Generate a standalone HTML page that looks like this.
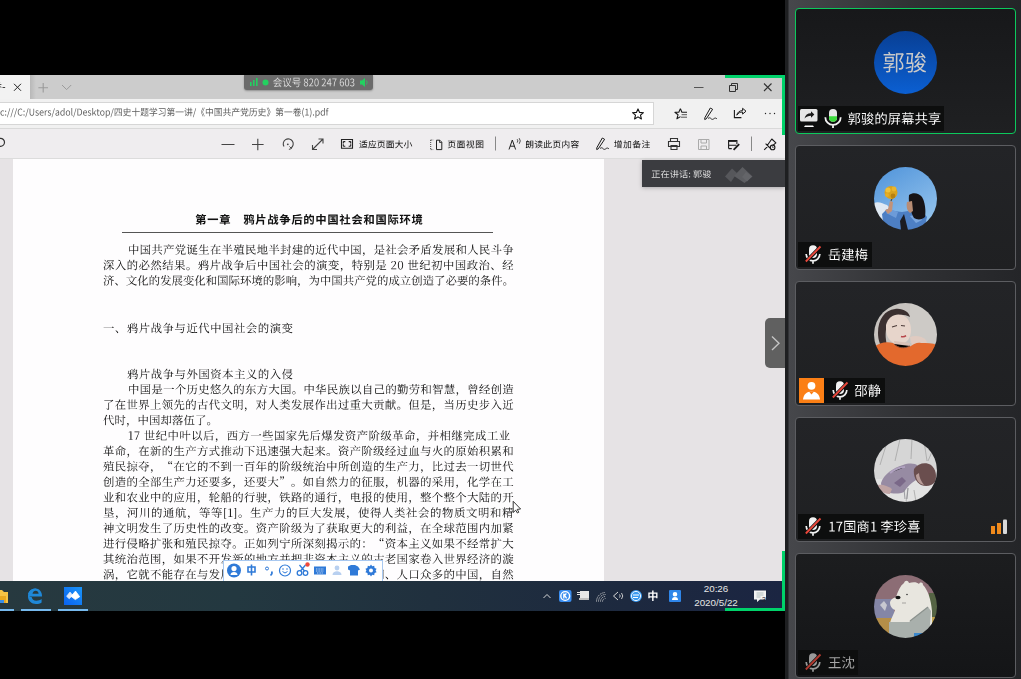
<!DOCTYPE html>
<html><head><meta charset="utf-8">
<style>
*{margin:0;padding:0;box-sizing:border-box}
html,body{width:1021px;height:679px;overflow:hidden;background:#000;font-family:"Liberation Sans",sans-serif}
.a{position:absolute}
#scr{left:0;top:75px;width:785px;height:536px;background:#e6e3e5;overflow:hidden}
#tabbar{left:0;top:0;width:785px;height:24px;background:#cccccc}
#tab{left:0;top:0;width:30px;height:24px;background:#f2f2f2}
#addr{left:0;top:24px;width:785px;height:30px;background:#f1f1f1;border-bottom:1px solid #d9d9d9}
#field{left:-2px;top:3px;width:656px;height:23px;background:#fff;border:1px solid #d6d6d6}
#tool{left:0;top:54px;width:785px;height:30px;background:#efedef;border-bottom:1px solid #dcdcdc}
#page{left:13px;top:84px;width:591px;height:422px;background:#fefdfe}
#task{left:0;top:506px;width:785px;height:30px;background:linear-gradient(to right,#27393f 0%,#233840 30%,#20303e 55%,#1d293f 80%,#1b2542 100%)}
.t{position:absolute;white-space:nowrap;color:#1e1e1e;font-size:9.5px;line-height:12px}
.pl{position:absolute;white-space:nowrap;color:#363636;font-family:"Liberation Serif",serif;font-size:11.4px;line-height:14px;text-align:justify;text-align-last:justify}
.g{position:absolute;background:#00d26a}
#side{left:785px;top:0;width:236px;height:679px;background:linear-gradient(to right,#1e1f21 0,#1e1f21 3px,#46474b 4px,#2f3033 55%,#242528 100%)}
.card{position:absolute;left:10px;width:221px;height:125px;border:1px solid #5c5d61;border-radius:4px;background:linear-gradient(#232427,#1f2022)}
.av{position:absolute;left:78px;top:21px;width:63px;height:63px;border-radius:50%;overflow:hidden}.av svg{filter:blur(.35px)}.c1{height:126px}.c1 .av{top:22px}.c1 .lab{top:97px}
.lab{position:absolute;left:2px;top:96px;height:25px;background:#0d0e0e;color:#fff;font-size:13.4px;line-height:25px;white-space:nowrap}
</style></head><body>
<svg width="0" height="0" style="position:absolute"><defs><path id="gb" d="m60-86l-1 5-2 4-3 4-2 4-3 3-3 4 5 2 5 3-24 0 10-4-2-3-2-5 13 0 0-8-23 0 3-6-11-3-2 5-3 4-2 4-3 4-3 4-3 3 4 2 4 3 0 10 31 0 0 5-27 0 0 5-1 4 0 5-1 4-1 4-1 4 22 0-4 3-5 3-5 3-5 2-5 2-5 2 3 3 2 3 2 3 6-2 5-2 6-3 5-4 5-4 4-3 0 19 12 0 0-25 24 0-1 6-2 3-3 1-4 0-6 0 1 3 2 4 0 4 5 0 4 0 4 0 4-1 3-3 2-2 1-2 1-3 0-4 1-5 0-7 1-4-37 0 0-6 32 0 0-25-10 0 10-4-2-4-3-4 14 0 0-8-26 0 2-6zm-33 54l16 0 0 6-17 0zm28-15l20 0 0 5-20 0zm-41-10l3-3 2-2 2-3 2-4 3 0 2 4 2 4 1 4zm43 0l3-3 3-4 2-5 4 0 3 4 3 4 2 4z"/><path id="gc" d="m4-46l0 14 92 0 0-14z"/><path id="gd" d="m27-28l46 0 0 5-46 0zm0-12l46 0 0 4-46 0zm-12-8l0 33 28 0 0 4-39 0 0 10 39 0 0 10 13 0 0-10 40 0 0-10-40 0 0-4 29 0 0-33zm48-21l-1 4-2 4-20 0-2-4-1-4zm-21-15l2 6-33 0 0 9 21 0-8 2 3 6-22 0 0 9 90 0 0-9-22 0 3-7-8-1 21 0 0-9-32 0-2-4-1-4z"/><path id="ge" d="m64-60l3 4 4 4 2 3 7-5-3-4-3-3-4-4zm-18 40l0 10 35 0 0-10zm-36-47l0 5-1 6-1 5 0 6-1 4-1 5 15 0-2 5-3 6-3 5-3 5-4 4-3 4 3 2 3 4 2 3 4-4 4-5 3-5 3-6 3-6 3-6 0 26-3 2-2 0-5 0-5-1 2 4 1 4 1 4 5 0 5-1 4 0 3-1 3-3 1-3 0-5 0-32 8 0 0-12-8 0 0-21 7 0 0-11-42 0 0 11 25 0 0 21-12 0 1-4 0-5 1-4 1-5zm76-9l-15 0 2-4 2-4-12-1-1 4-2 5-9 0 0 50 35 0-1 7 0 6-1 4 0 3-1 3-1 1-3 1-4 0-6-1 2 5 1 5 5 1 4-1 3 0 4-1 3-3 2-2 1-3 1-5 0-6 1-8 1-11 0-4-35 0 0-32 21 0-1 7 0 5 0 4-1 2-1 1-2 1-7 0 2 5 0 4 6 0 4 0 4-1 2-2 1-2 1-3 1-4 0-6 1-7 0-9 0-4z"/><path id="gf" d="m16-83l0 34 0 9-1 8-1 9-3 8-3 8-6 7 4 3 3 3 3 4 4-5 3-5 3-6 2-5 2-6 1-5 38 0 0 31 13 0 0-44-50 0 1-4 0-4 0-5 61 0 0-12-24 0 0-25-13 0 0 25-24 0 0-23z"/><path id="gg" d="m76-77l3 4 3 4 2 3 2 4 8-5-1-4-3-3-3-4-2-3zm-14-7l0 5 0 5 0 5 1 4 0 5 0 4-12 2 2 10 11-1 1 5 0 6 1 5 1 4 1 5 1 4-3 3-3 3-3 2-3 3-3 2-3 1 0-38-18 0 0-17 19 0 0-11-19 0 0-16-12 0 0 44-14 0 0 47 11 0 0-6 22 0 0 6 11 0 0-7 4 3 3 4 3-2 3-2 3-2 3-2 2-3 3 4 2 4 3 3 3 1 4 1 2 0 2-2 2-2 2-4 2-5 1-8-4-2-4-4-1 6 0 4-1 2-1 1-3-1-2-3-1-5 3-4 2-5 3-4 2-5 2-5 2-5-9-5-1 4-2 4-2 4-1 4-3 3 0-3-1-4 0-4-1-4 0-4 22-3-2-10-21 3 0-4 0-5-1-4 0-5 0-5 0-4zm-44 74l0-20 22 0 0 20z"/><path id="gh" d="m32-85l-3 5-3 4-5 5-5 5-5 4-7 4 4 3 3 3 2 3 5-4 0 4 25 0 0 7-40 0 0 11 40 0 0 8-28 0 0 11 28 0 0 8-2 2-3 0-6 0-6 0 2 3 2 4 1 4 5 0 4 0 4 0 3-1 3-1 3-2 2-4 1-5 0-8 28 0 0-19 13 0 0-11-13 0 0-17-17 0 3-3 2-3 3-3 2-3-9-6-2 0-25 0 4-5zm24 36l16 0 0 7-16 0zm0 18l16 0 0 8-16 0zm-30-28l4-4 3-3 25 0-3 3-3 4z"/><path id="gi" d="m14-76l0 27 0 8-1 8-1 9-2 9-3 8-5 8 3 2 4 3 3 3 5-8 4-9 2-10 2-9 1-10 0-9 71 0 0-11-71 0 0-9 11-1 12-1 11-1 11-2 10-2 9-2-9-10-9 2-10 2-12 1-12 2-12 1-12 1zm18 41l0 44 12 0 0-5 33 0 0 5 13 0 0-44zm12 28l0-17 33 0 0 17z"/><path id="gj" d="m54-41l2 4 3 4 2 5 3 4 2 3 2 4 10-7-2-3-2-3-3-4-3-4-2-4-3-4zm4-44l-1 6-2 6-2 6-3 5-2 5-3 5 0-17-15 0 1-3 1-4 1-3 2-4-13-2-1 4-1 4 0 4-1 4-12 0 0 75 11 0 0-7 27 0 0-47 4 3 4 2 2-2 1-3 2-4 2-3 2-3 21 0 0 16-1 12-1 10-1 8-1 5-1 2-5 2-2 0-4 0-4 0-5-1 2 4 2 4 0 4 5 0 4 0 4 0 3 0 4-1 3-2 3-3 2-3 1-6 1-9 1-12 1-16 0-20 0-6-28 0 2-4 1-4 1-4zm-40 27l16 0 0 16-16 0zm0 46l0-20 16 0 0 20z"/><path id="gk" d="m43-85l0 17-34 0 0 51 12 0 0-5 22 0 0 31 13 0 0-31 23 0 0 5 12 0 0-51-35 0 0-17zm-22 51l0-22 22 0 0 22zm58 0l-23 0 0-22 23 0z"/><path id="gl" d="m24-23l0 10 52 0 0-10-7 0 5-3-2-2-3-4-3-3 6 0 0-10-17 0 0-9 19 0 0-11-49 0 0 11 19 0 0 9-16 0 0 10 16 0 0 12zm34-8l4 4 3 4-10 0 0-12 9 0zm-50-50l0 90 12 0 0-5 59 0 0 5 13 0 0-90zm12 74l0-63 59 0 0 63z"/><path id="gm" d="m14-80l3 4 3 4 2 4-18 0 0 11 23 0-3 5-4 5-4 5-5 4-5 3-4 3 1 4 2 5 1 4 3-2 3-2 3-3 3-2 0 37 11 0 0-39 3 3 3 4 2 2 7-9-2-3-4-3-4-4-3-3 2-3 2-4 2-3 2-4 2-3 1-4-6-5-2 1-9 0 7-5-1-3-2-3-3-3-3-4zm49-4l0 29-20 0 0 12 20 0 0 37-24 0 0 12 58 0 0-12-22 0 0-37 19 0 0-12-19 0 0-29z"/><path id="gn" d="m16 7l3-1 4 0 7-1 10-1 16-1 21-2 3 4 2 4 11-7-3-4-3-4-4-4-4-5-4-4-4-4-11 5 3 3 3 3 3 3-35 2 3-3 3-2 2-3 3-3 2-3 3-3 42 0 0-11-83 0 0 11 24 0-3 4-3 3-3 3-2 3-2 1-4 3-4 2 1 4 2 5 1 3zm34-93l-6 7-7 6-7 6-9 5-9 5-9 4 3 3 3 4 2 4 4-2 4-2 4-2 4-2 0 6 47 0 0-7 3 2 4 2 4 2 4 1 3-3 3-4 3-3-8-3-7-3-7-4-7-4-6-4-6-4 3-4zm-16 31l3-2 4-3 3-3 3-2 3-3 3 2 3 2 2 2 3 3 4 2 3 2z"/><path id="go" d="m52-76l0 80 11 0 0-8 16 0 0 7 13 0 0-79zm11 61l0-49 16 0 0 49zm-21-69l-5 2-6 1-6 2-7 1-7 1-6 1 2 5 1 5 3-1 4 0 4-1 3 0 0 13-18 0 0 11 15 0-2 5-2 6-3 5-3 5-3 5-4 4 2 3 3 4 1 4 3-3 2-4 3-4 2-4 2-4 2-5 0 36 12 0 0-37 3 3 2 4 2 3 2 3 7-10-2-3-4-3-3-4-4-4-3-3 0-2 15 0 0-11-15 0 0-15 4-1 4-1 4-2 3-1z"/><path id="gp" d="m47-79l0 11 44 0 0-11zm30 47l2 6 2 6 2 5 2 6 1 5 0 4 11-4-1-4-1-5-2-6-2-5-2-6-2-5zm-31-2l-1 5-2 5-1 5-3 5-2 4-2 4 5 3 4 3 3-4 2-5 2-6 3-5 2-6 1-6zm-39-47l0 90 11 0 0-79 9 0-1 4-1 4-1 5-2 4-1 4 3 4 2 4 2 3 0 4 1 3-2 6-3 1-5 0 2 5 1 5 7 0 6-2 3-3 1-3 1-3 0-5 0-3 0-3-1-3-2-4-2-4-3-4 2-4 2-4 1-5 2-4 1-5 2-4-9-4-2 0zm35 26l0 11 20 0 0 39-2 1-4 1-6-1 2 4 1 5 1 4 5 0 4-1 3 0 3-1 3-3 1-4 1-5 0-39 22 0 0-11z"/><path id="gq" d="m2-13l3 11 5-1 5-2 5-1 5-2 6-2 5-2-2-10-9 2 0-19 8 0 0-11-8 0 0-18 10 0 0-11-32 0 0 11 11 0 0 18-9 0 0 11 9 0 0 23zm37-67l0 12 23 0-4 8-3 8-5 7-5 7-5 6-5 5 3 3 3 3 3 3 2-2 3-3 2-3 3-3 2-3 2-4 0 45 12 0 0-52 4 4 3 4 3 4 2 4 3 4 2 3 10-7-3-4-3-4-3-5-4-5-4-4-3-4-7 4 0-8 2-4 2-3 1-4 21 0 0-12z"/><path id="gr" d="m52-29l25 0 0 5-25 0zm0-11l25 0 0 4-25 0zm22-29l-2 4-1 4-11 0-2-4-2-4-9 2 2 6-12 0 0 10 57 0 0-10-13 0 4-6zm-16-15l1 5-19 0 0 10 51 0 0-10-19 0-2-3-1-4zm-17 37l0 30 8 0-1 4-2 4-2 3-4 2-5 2-7 2 4 4 3 5 8-2 6-4 5-4 3-4 2-6 1-6 7 0 0 12 1 5 1 3 1 2 4 2 4 1 6 0 7-1 4-4 1-4 0-6-5-2-4-2 0 4 0 3-1 2-2 0-3 0-2 0-1-2 0-13 11 0 0-30zm-39 32l4 12 5-2 5-2 5-2 5-2 6-2 5-2-2-11-10 3 0-27 9 0 0-11-9 0 0-23-11 0 0 23-10 0 0 11 10 0 0 31-4 2-4 1-4 1z"/><path id="gs" d="m82-33l-29 0 0-27 29 0zm-25-50l-11-1 0 21-28 0-7-3 0 45 1 0 5-2 0-7 29 0 0 38 2 0 5-3 0-35 29 0 0 8 1 0 6-2 0-35 4-2-8-6-4 4-28 0 0-17 4-3zm-40 50l0-27 29 0 0 27z"/><path id="gt" d="m59-36l-1 0 2 3 3 3 2 4 1 3 3 1 1-1 1-3-1-3-4-4-7-3zm-32-6l1 3 18 0 0 22-25 0 1 3 56 0 2-1-5-5-3-2-4 5-16 0 0-22 20 0 3-1-5-5-2-2-5 5-11 0 0-18 23 0 3-1-5-5-3-2-4 5-43 0 1 3 22 0 0 18zm-17-36l0 86 1 0 5-3 0-4 68 0 0 6 6-2 0-79 4-2-8-6-4 4-65 0-7-3zm74 76l-68 0 0-73 68 0z"/><path id="gu" d="m60-19l0 1 4 3 5 4 5 5 5 4 4 5 3 4 3 0 2-2-1-5-5-6-9-7-16-6zm-25-2l-4 5-4 5-4 5-6 4-5 5-6 3 1 2 7-3 6-4 6-4 5-4 5-4 4-4 4-1zm28-62l0 23-26 0 0-19 4-3-11-1 0 23-23 0 1 3 22 0 0 28-26 0 1 3 88 0 3-2-6-5-3-2-5 6-13 0 0-28 21 0 3-1-5-5-4-3-4 6-11 0 0-19 4-3zm-26 54l0-28 26 0 0 28z"/><path id="gv" d="m31-66l-1 1 1 3 2 3 2 4 1 4 1 3 3 2 2-1 1-4-1-4-4-6-7-5zm56-10l-5 6-77 0 1 3 87 0 3-2-6-4-3-3zm-45-9l-1 1 4 3 3 5 2 4 3 1 2-1 1-3-2-4-4-3-8-3zm34 22l-10-2-1 4-2 4-1 4-2 5-2 4-34 0-8-4 0 16 0 6-1 7-1 7-2 6-4 7-4 6 1 1 7-6 4-7 4-7 1-7 1-7 0-7 0-9 68 0 3-1-6-5-3-2-5 6-18 0 2-4 3-3 2-4 2-3 2-3 4-2z"/><path id="gw" d="m20-81l-1 1 3 3 2 3 3 3 1 3 1 4 4 1 2-2 1-3-2-5-5-4-9-4zm4 32l0 27 2 0 5-2 0-2 7 0-2 8-3 6-4 6-6 5-8 4-10 3 1 2 11-3 9-4 7-4 5-6 4-8 2-9 11 0 0 25 1 4 1 1 3 2 5 0 11 0 8 0 5-1 3 0 3-1 1-1 0-1-3-3 0-13-1 0-1 6-1 4-1 2-2 2-4 0-6 0-11 0-4-2 0-24 7 0 0 4 1 0 6-2 0-21 4-2-8-6-4 4-36 0-8-3zm7 20l0-17 38 0 0 17zm42-53l-2 4-2 4-2 4-2 4-2 4-10 0 0-18 4-3-10-1 0 22-29 0-1-5-2 1 0 4-2 4-2 3-3 3-2 5 3 2 4-1 2-2 2-3 1-4 0-4 65 0-1 3-1 4-1 3 1 1 4-3 3-4 3-3 4-1-8-8-4 5-17 0 3-3 3-3 3-3 2-3 3-2 4-2z"/><path id="gx" d="m10-83l-1 0 3 4 3 4 2 4 1 4 3 1 2-1 1-3-1-5-5-4-8-4zm84 8l-8-7-4 2-5 2-6 1-6 2-6 2-6 1 0 2 4 0 3-1 4 0 4 0 3-1 0 54-8 0 0-36 3-2-9-1 0 38-3 2 7 5 3-4 29 0 3-1-5-5-3-2-4 6-7 0 0-27 14 0 3-2-5-4-2-2-4 5-6 0 0-25 4-1 4 0 3-1 6 0zm-62 38l-2 1 1 4 1 4 1 4 2 4 1 3 2 3-2 4-3 3-2 4-3 3-3 3-4 3 1 2 4-3 3-2 4-3 3-3 2-3 2-4 5 5 5 4 5 3 7 1 7 1 8 1 5 0 5 0 5 0 1-4 3-2 0-1-5 0-4 0-5 0-4 0-8-1-7 0-6-2-5-2-5-3-4-4 2-4 1-5 2-4 1-5 1-5 1-5 3-2-6-6-4 4-7 0 2-4 2-4 2-5 1-4 2-4 1-4 5-1-8-6-3 3-15 0 1 3 14 0-1 4-2 4-1 5-2 4-2 4-1 4-5 1 7 6 3-3 7 0 0 4-1 5 0 4-1 4-1 4-2 4-2-3-1-4-2-4-1-4-1-4zm-10-16l4-2-7-5-3 3-12 0 0 3 12 0 0 44-4 4 4 8 3-3 4-3 3-4 2-3 3-2 1-3 0-1-10 7z"/><path id="gy" d="m26-80l-3 9-3 8-4 8-4 8-4 7-4 6 1 0 3-3 4-3 3-4 3-4 3-4 3-5 22 0 0 26-30 0 0 3 30 0 0 29-42 0 1 3 89 0 2-2-6-5-4-3-5 7-28 0 0-29 31 0 3-2-6-5-4-3-5 7-19 0 0-26 35 0 2-1-6-5-3-3-5 6-23 0 0-20 4-2-11-2 0 24-21 0 2-3 2-4 2-4 1-4 4-2z"/><path id="gz" d="m85-71l-5 6-38 0 2-3 2-4 1-4 1-3 4-2-10-3-1 4-2 4-1 4-1 3-2 4-29 0 1 3 27 0-4 8-4 7-5 6-5 7-6 5-6 6 1 1 3-2 3-2 3-2 3-3 2-2 3-3 0 44 1 0 5-2 0-46 4-1-4-2 3-3 2-3 2-3 2-3 2-3 2-4 50 0 3-1-6-5-3-3zm-5 31l-4 6-11 0 0-19 3-3-10-1 0 23-21 0 1 3 20 0 0 30-27 0 1 3 61 0 3-1-6-5-3-3-5 6-17 0 0-30 21 0 3-2-6-4-3-3z"/><path id="gba" d="m17-80l-1 1 2 3 3 4 2 4 2 4 2 4 1 4 3 1 2-1 1-5-2-5-6-7-9-7zm59-1l-2 5-2 5-3 5-2 4-2 4-2 4 1 0 3-2 3-4 3-3 3-4 3-4 3-4 4-1zm-30-3l0 34-36 0 1 3 35 0 0 20-42 0 1 3 41 0 0 32 2 0 5-3 0-29 41 0 2-2-6-5-4-3-5 7-28 0 0-20 35 0 2-2-6-5-3-2-5 6-23 0 0-30 4-3z"/><path id="gbb" d="m38-81l-4 5-29 0 1 3 12 0-1 8-2 8-2 7-3 7-3 7-3 6 1 2 3-3 2-3 2-3 2-3 3 3 2 4 2 4 3 1 2-1 1-3-1-4-4-3-7-3 2-4 1-4 2-4 13 0-2 11-3 12-4 11-5 10-7 9-8 8 1 1 10-8 9-9 6-10 4-11 3-12 3-11 3-2-7-6-4 4-11 0 1-4 1-4 1-4 1-4 19 0 3-1-5-5-4-2zm50 6l-4 5-16 0 1-10 4-3-10-1-1 14-20 0 0 3 20 0 0 10-8 0-8-3 0 60-13 0 0 4 62 0 3-2-5-4-3-2-4 4 0-53 5-2-9-7-3 5-12 0 1-10 25 0 3-1-5-5-3-2zm-36 75l0-12 28 0 0 12zm0-15l0-11 28 0 0 11zm0-14l0-11 28 0 0 11zm0-14l0-11 28 0 0 11z"/><path id="gbc" d="m84-41l-5 6-25 0-1-4 0-5-1-4 0-4 22 0 0 5 1 0 5-2 0-25 4-1-8-7-3 4-51 0-8-3 0 77-3 4 4 8 2-2 7-4 7-3 6-3 6-3 5-3 4-2-1-2-5 3-6 2-5 2-5 1-5 2-4 1 0-29 28 0 2 8 4 7 5 7 6 6 7 5 9 3 5 2 4 0 3-1-3-5 2-12-2 0-2 5-1 4-4 1-7-3-6-4-5-5-5-5-3-7-3-6 35 0 3-2-6-5-3-2zm-63-31l0-3 53 0 0 20-53 0zm0 20l24 0 1 4 0 5 1 4 1 4-27 0z"/><path id="gbd" d="m82-62l-14 5 0-23 4-3-10-1 0 29-13 5 0-22 3-3-10-1 0 29-14 5 2 2 12-4 0 39 1 4 1 3 3 1 3 1 6 0 15 0 9 0 7 0 5-1 3 0 1-2 1-1-4-3 0-16-1 0-1 5-1 5-1 3-1 2-3 2-3 0-5 0-6 0-15 0-6-1-1-3 0-41 13-5 0 42 1 0 5-2 0-42 16-6-1 11 0 8 0 7-1 4 0 3-1 2-3 1-7 0 0 1 5 2 1 5 4-1 4-2 2-3 1-3 1-6 0-7 1-9 0-12 4-1-8-6-3 3zm-79 51l4 9 2-3 6-4 6-4 5-3 5-3 4-3 4-2-1-2-15 7 0-31 13 0 2-2-5-5-3-2-4 5-3 0 0-24 4-3-10-1 0 28-13 0 1 4 12 0 0 34-6 2-4 2-4 1z"/><path id="gbe" d="m56-47l-1 0 1 3 2 4 2 4 1 4 0 3 1 4 3 2 2-2 1-4-1-5-4-7-7-6zm21-35l0 22-29 0 1 3 28 0 0 54-2 3-8-1-6 0 0 1 6 1 3 2 3 5 6-1 3-2 1-3 1-4 0-55 11 0 2-1-5-5-3-3-4 6-1 0 0-19 3-2zm-53-1l0 16-17 0 1 3 16 0 0 17-20 0 1 3 45 0 3-2-6-4-3-3-4 6-10 0 0-17 18 0 2-2-5-4-3-3-4 6-8 0 0-12 4-3zm0 41l0 15-18 0 1 3 17 0 0 18-5 0-5 1-4 1-3 0-3 0 4 10 2-3 10-2 8-3 7-2 7-2 6-2 5-2 0-1-23 4 0-17 18 0 3-2-5-5-3-2-5 6-8 0 0-11 4-3z"/><path id="gbf" d="m9-36l-2 1 2 5 1 4 2 4 2 4 2 3 2 3-2 4-2 3-2 3-3 3-3 3-3 2 1 2 4-3 3-2 3-2 3-3 2-3 3-3 5 5 7 3 7 3 9 1 10 1 10 0 4 0 5 0 5 0 4 0 3 0 2-3 3-2 0-1-4 0-4 0-5 0-4 0-4 0-4 0-10 0-9-1-9-1-7-2-6-3-6-4 2-4 2-5 2-5 1-5 1-6 1-5 4-1-7-7-4 4-9 0 2-4 2-4 2-4 2-5 2-4 2-3 5-2-8-6-3 4-19 0 1 2 18 0-2 4-2 4-2 5-2 4-2 4-3 4-3 2 6 5 3-3 11 0-1 5-1 5-1 5-1 4-1 5-2 4-2-3-2-3-2-3-2-3-2-4-1-5zm69-24l-15 0 0-10 15 0zm0 3l0 10-15 0 0-10zm12-9l-4 6-2 0 0-9 4-2-8-6-3 4-14 0 0-7 4-3-10-1 0 11-19 0 1 3 18 0 0 10-27 0 0 3 27 0 0 10-19 0 1 3 18 0 0 11-20 0 0 3 20 0 0 10-26 0 1 3 25 0 0 13 1 0 5-2 0-11 29 0 3-1-6-5-3-3-5 6-18 0 0-10 23 0 3-2-5-5-3-2-4 6-14 0 0-11 15 0 0 4 1 0 5-3 0-14 11 0 2-2-4-4-3-3z"/><path id="gbg" d="m54-46l-1 1 3 3 3 3 2 4 2 4 2 3 1 4 3 1 2-2 1-4-2-5-6-6-10-6zm-21-35l-10-3-1 5-1 4-1 5-1 4-3 0-7-3 0 74 1 0 5-3 0-8 21 0 0 8 1 0 5-3 0-61 5-2-8-6-4 4-13 0 3-4 2-5 3-4 3-2zm3 18l0 25-21 0 0-25zm-21 28l21 0 0 26-21 0zm56-46l-11-3-2 8-2 7-3 8-2 6-4 7-3 5 2 1 2-3 3-3 2-4 3-3 2-4 2-4 25 0-1 16 0 14-1 12-1 9-2 6-1 4-4 1-4 0-5-1-5 0 0 2 6 1 4 1 2 6 4-1 4-1 3-3 2-4 2-7 1-10 1-12 1-15 0-17 5-2-8-7-4 5-22 0 2-4 1-4 2-5 4-2z"/><path id="gbh" d="m10-82l-1 0 2 3 3 4 2 3 2 4 2 4 1 3 3 1 3-1 0-4-2-5-6-6-9-6zm77 24l-5 6-33 0 0-1 0-19 7 0 6-1 6-1 6-1 5-1 5-1 5 0-7-7-5 2-4 2-6 1-6 2-6 2-6 1-6-2 0 23 0 8-1 7-1 8-2 7-3 8-4 6 0 1-3-2-3-3-1-1 0-32 5-2-9-7-3 5-13 0 0 3 14 0 0 34-4 3-4 3-4 4-3 2 6 8 0-2 3-4 3-5 3-3 2-3 4 0 4 5 5 4 6 3 6 2 8 1 8 0 6 0 5 0 5 0 4 0 5 0 5 0 1-4 4-2 0-1-6 0-5 0-5 1-6 0-5 0-5 0-7-1-6 0-6-1-4-1-5-1-4-3 6-6 4-7 3-7 2-7 1-7 0-7 21 0 0 44 1 0 5-2 0-42 18 0 2-2-5-5-4-2z"/><path id="gbi" d="m69-80l-1 1 3 2 4 4 2 3 2 4 3 0 3-1 0-3-2-4-5-3-9-3zm-16-3l0 6 0 5 0 5 1 6 0 5 1 5-24 2 1 3 23-3 3 11 3 10 4 10 5 8 6 7 7 6 5 3 5 2 3-2 0-2-2-4 1-15-1-1-1 5-2 4-1 3-4 0-6-5-6-6-4-8-3-8-3-9-2-9 32-4 2-2-6-4-3-2-5 7-20 2-1-4 0-5-1-4 0-5 0-4 0-4 4-3zm-26-1l-3 10-3 9-4 9-5 9-4 8-5 6 2 1 2-2 3-3 2-3 3-3 2-3 2-3 0 57 1 0 6-2 0-60 3-2-5-1 2-4 2-3 2-4 1-3 2-4 1-3 4-2z"/><path id="gbj" d="m18 3l-4-2-4-3-1-4 2-4 5-2 4 1 2 4 1 5 0 3-1 4-2 5-3 3-3 4-5 3-1-3 4-3 2-3 2-3 2-3 0-2z"/><path id="gbk" d="m72-62l0 12-43 0 0-12zm0-2l-43 0 0-11 43 0zm-50-14l0 36 1 0 6-2 0-4 43 0 0 5 1 0 5-2 0-29 5-2-8-6-4 4-41 0-8-4zm5 47l-2 7-3 7-3 6-4 7-5 6-6 5 1 1 5-3 5-3 4-4 3-4 3-4 3-4 4 7 4 5 5 4 6 2 8 1 8 0 4 0 6 0 5 0 6 0 5 0 3 0 4-4 0-2-4 0-6 0-6 0-6 0-6 0-4 0-6 0-4 0 0-18 30 0 3-2-6-5-3-2-5 6-19 0 0-14 39 0 2-1-5-5-4-3-4 6-77 0 1 3 41 0 0 34-4-1-3-1-4-2-2-3-3-3-2-4 2-3 1-4 1-3 4-2z"/><path id="gbl" d="m16-84l-1 1 3 3 3 4 2 4 2 4 3 1 2-1 1-3-2-4-5-5-8-4zm69 28l-4 6-13 0 0-29 4-3-10-1 0 33-22 0 1 4 21 0 0 45-28 0 1 3 59 0 3-1-6-5-3-3-5 6-15 0 0-45 23 0 3-2-6-5-3-3zm-58 61l0-42 3 3 4 4 2 3 2 4 3 1 2-2 0-3-2-4-5-4-9-4 0-2 3-4 3-3 2-4 2-3 2-4 4-1-7-7-5 4-27 0 1 3 27 0-4 7-4 7-5 7-5 6-6 6-6 6 2 1 3-2 3-2 2-2 3-3 3-2 3-3 0 42 1 0 5-3z"/><path id="gbm" d="m52-78l4 6 6 7 6 6 7 6 8 5 8 4 2-3 4-2 0-1-9-4-8-4-8-5-7-5-6-6-5-6 4-2-12-2-4 7-5 8-8 8-8 7-9 7-8 5 0 1 10-4 9-6 9-6 7-7 7-7 6-7zm14 22l-5 6-37 0 1 3 47 0 3-1-6-5-3-3zm16 18l-5 6-69 0 1 3 79 0 3-2-6-5-3-2zm-21 18l-1 1 3 3 3 3 3 3 2 3 3 3-10 1-10 0-9 1-9 0-7 0-7 0 6-3 5-3 5-4 4-3 4-4 4-3 4-1-10-6-3 4-4 5-4 5-5 5-5 4-5 3-3 1 3 9 2-2 11-1 11-1 10-2 8-1 9-1 7-1 3 4 2 4 4 1 2-2-1-4-4-6-8-7-13-8z"/><path id="gbn" d="m4-48l1 3 39 0-5 7-6 8-6 7-7 7-8 6-8 5 1 2 9-5 8-5 8-6 7-7 6-6 6-8 0 38-3 2-5-1-7 0-4 0 0 1 5 1 4 1 2 1 3 5 5-1 3-2 2-2 1-2 0-3 0-43 28 0-2 3-2 4-3 3-3 4-3 3-3 3 2 1 4-3 4-3 4-4 4-3 4-4 3-3 4-1-8-8-4 5-25 0 1-3-1-4-4-4 4-2 5-3 5-2 4-3 4-2 3-2 5-1-8-8-5 5-56 0 0 3 54 0-3 2-3 3-4 3-4 3-3 2-3-1-2-1-3-2-4-1-4-1-4-1-1 1 5 3 5 3 4 4 4 3 2 3 2 3z"/><path id="gbo" d="m24-71l5 0 5 0 5-1 5 0 5-1 5-1-1 13-29 0zm8 26l0 53 2 0 5-2 0-5 38 0 0 6 1 0 5-2 0-47 4-1-7-6-3 4-20 0 2-13 34 0 2-2-5-4-4-3-4 6-22 0 1-9 3-3-9-1 5 0 4-1 4-1 4 0 4-1 4 0 5 0-7-7-7 2-8 2-9 2-10 2-10 2-10 1-6-2 0 28-1 9 0 10-2 9-2 8-4 9-5 8 1 1 8-8 5-9 3-9 2-9 1-10 0-9 0-11 29 0-1 13-12 0-8-3zm7 17l38 0 0 12-38 0zm0-3l0-11 38 0 0 11zm0 17l38 0 0 12-38 0z"/><path id="gbp" d="m62-81l-1 1 3 3 3 3 3 3 2 4 2 3 3 1 2-1 1-4-3-4-5-5-10-4zm24 18l-5 6-37 0 1-4 1-4 1-4 1-3 0-4 1-4 4-3-11-2-1 5 0 5-1 4-1 5-1 4-1 5-17 0 1-4 2-4 1-5 2-3 4-2-10-3-1 3-2 4-1 4-2 4-1 4-5 2 8 6 3-3 17 0-3 11-4 10-5 10-6 9-7 9-8 7 1 1 7-5 7-6 5-6 5-6 5-7 3-8 2 4 2 4 2 4 3 4 3 4 4 4-5 3-5 4-6 3-6 3-7 2-7 2 0 2 8-2 8-2 7-2 6-3 6-4 5-3 4 3 5 2 5 3 6 3 6 2 7 2 2-3 5-2 0-1-7-2-7-2-6-2-6-2-5-3-4-2 4-4 3-4 3-4 3-4 2-5 3-5 4-1-7-7-5 4-32 0 2-4 1-4 1-4 49 0 3-2-6-5-3-2zm-48 24l33 0-2 4-2 5-2 4-3 4-3 3-3 4-5-4-4-3-3-4-3-4-2-4-1-4z"/><path id="gbq" d="m22-62l0-13 59 0 0 13zm27 6l-9-1 0 11-16 0 1 3 15 0 0 14-19 0 0-5 1-4 0-4 0-5 0-4 0-4 0-4 59 0 0 4 1 0 6-2 0-17 4-2-8-6-4 4-56 0-8-4 0 28 0 10-1 10-1 11-3 10-3 10-5 10 2 1 4-6 4-6 3-6 2-6 1-7 2-6 0 3 14 0 0 23-4 4 5 7 2-2 4-2 4-2 4-3 3-2 3-1 3-2-1-1-3 1-4 1-4 2-3 1-3 1 0-25 12 0 4 8 4 7 6 7 7 5 8 4 9 3 2-4 3-2 1-1-6-1-5-2-4-1-5-2-4-2-4-3 4-2 3-1 4-2 3-2 3-2 4 0-8-6-2 3-3 2-3 3-4 3-3 3-3-3-2-3-3-3-2-3-1-3 37 0 3-2-6-5-3-2-5 6-12 0 0-14 17 0 2-1-5-5-3-2-4 5-7 0 0-7 4-3-10-1 0 11-18 0 0-8 3-2zm15 27l-18 0 0-14 18 0z"/><path id="gbr" d="m43-58l-4 6-8 0 0-21 5-1 4-1 4-1 5-1-7-6-5 2-6 2-7 3-7 2-7 2-7 2 1 2 4-1 4 0 4-1 4-1 4 0 0 19-20 0 1 3 17 0-2 7-3 7-3 7-3 6-3 6-4 6 1 1 4-4 4-4 3-4 3-5 3-5 2-5 0 44 1 0 6-2 0-47 3 3 2 3 3 4 2 3 2 3 3 1 2-2 0-3-3-4-5-5-9-5 0-6 18 0 3-2-6-4-3-3zm40-7l0 53-23 0 0-53zm-23 65l0-9 23 0 0 10 1 0 5-2 0-63 5-2-9-6-3 4-22 0-6-3 0 74 1 0 5-3z"/><path id="gbs" d="m51-78l3-3-10-1-1 16-1 15-3 15-7 15-11 14-17 13 2 2 15-10 11-11 8-11 6-12 3-12 1-12 2 14 4 13 5 12 7 11 9 10 12 8 3-4 4-2 0-1-15-9-11-10-8-13-6-14-3-15-2-18z"/><path id="gbt" d="m26-75l0 1 3 2 4 3 3 2 4 3 2 3 2 3 4 0 2-2-1-4-3-4-8-4-12-3zm-9 23l-1 1 4 2 4 2 4 3 3 3 3 3 2 3 4 0 2-2-1-4-4-5-8-3-12-3zm43-32l0 57-55 9 1 2 54-8 0 32 2 0 5-3 0-30 27-5 2-2-7-4-3-2-5 8-14 2 0-52 3-3z"/><path id="gbu" d="m34-84l-4 6-4 6-4 7-6 5-5 6-6 4 1 1 5-3 5-3 5-3 4-4 4-4 4-4 23 0-2 3-2 4-2 4-3 3-27 0 1 3 24 0 0 13-41 0 1 3 40 0 0 15-31 0 1 3 30 0 0 17-3 2-5 0-8-1-3 0 0 1 5 1 4 1 2 1 3 5 5-1 4-2 2-2 1-2 0-3 0-17 22 0 0 7 1 0 6-2 0-23 13 0 3-1-6-5-3-3-4 6-3 0 0-12 4-2-8-6-4 4-23 0 3-3 3-2 4-3 2-3 3-3 4-1-8-7-4 4-21 0 2-3 2-3 4-1zm40 47l0 15-22 0 0-15zm0-3l-22 0 0-13 22 0z"/><path id="gbv" d="m60-64l-8-5-3 5-3 4-3 5-3 4-4 4-2 4 1 1 3-3 4-3 4-3 3-4 4-4 3-4 4-1zm9-4l-1 1 3 3 3 3 3 4 3 4 2 4 2 3 3 1 2-2 0-4-3-5-6-6-11-6zm-59 48l-5 0 0 2 5 1 1 2 1 3 0 4 0 5 0 6 3 5 4-2 1-5 0-5 0-3-1-4-1-3 0-2 0-4 1-5 1-3 2-6 2-7 3-7 2-8 2-6-2-1-6 16-5 10-2 7-2 4-1 2-1 2-2 2zm-5-40l-1 1 3 2 3 3 3 3 1 4 4 0 2-1 0-3-2-4-5-3-8-2zm7-23l-1 1 4 3 3 3 3 4 2 3 3 1 2-1 0-3-2-4-5-4-9-3zm74 39l-4 6-17 0 0-13 4-3-10-1 0 17-29 0 1 3 23 0-3 7-4 6-5 7-5 6-6 5-6 5 1 2 7-4 6-5 6-5 5-5 5-6 4-6 0 36 1 0 5-2 0-39 4 7 3 7 5 6 4 5 5 5 5 3 3-3 3-2 1-1-6-3-6-4-5-5-6-5-4-6-4-6 25 0 3-2-6-4-3-3zm-46-38l-1 0-1 5-1 4-2 3-2 2-1 3 1 2 2 1 3-1 3-4 1-7 43 0-2 11 1 1 3-3 3-4 3-4 3-1-7-7-5 4-43 0-1-5z"/><path id="gbw" d="m47-70l0 3-3 15-6 15-7 13-8 11-9 11-10 9 1 1 11-7 9-9 9-10 7-10 5-11 5-12 4 13 5 11 6 11 7 9 7 8 9 7 3-4 5-2 1-1-12-7-11-10-8-11-7-13-6-15-3-15-2-3-2-3-4-3-4-2-5-3-4 6 6 2 5 2 4 2 2 2z"/><path id="gbx" d="m32-83l-1 2 6 3 5 3 4 4 4 3 2 3 2 3 4 1 2-3-1-4-4-5-9-6-14-4zm-16 33l-1 6-1 5-1 5-2 4-2 3-3 3-1 6 4 1 4-3 2-2 2-4 1-5 1-5 0-7-2-7zm60 0l-1 1 3 4 3 5 3 5 2 6 2 5 0 5 4 2 3-3 0-5-2-8-6-8-11-9zm-46-12l0 44-4 3-4 3-4 3-4 3-5 3-4 3 1 1 4-2 4-2 4-3 4-2 4-3 4-2 0 9 0 3 1 3 3 1 3 1 5 0 14 0 8 0 7 0 4-1 3-1 1-1 1-1-4-3 0-18-1 0-1 6-1 5-1 4-1 2-2 2-3 0-4 0-6 0-13 0-5-1-2-2 0-13 10-9 9-9 8-9 7-9 6-9 6-9 4 0-10-5-5 8-5 9-6 9-7 9-8 9-9 9 0-34 4-3z"/><path id="gby" d="m73-77l-1 1 3 3 3 4 2 5 3 0 2-1 1-2-2-4-4-3-7-3zm-53 61l-1 5-2 4-3 4-3 2-3 2-2 5 3 2 4-2 3-1 2-3 2-3 2-4 0-5 0-6zm16 1l-1 0 1 4 1 4 1 4 0 4 0 4 3 2 2-1 2-4 0-5-3-6-6-6zm20-1l-2 1 3 4 2 4 2 4 1 4 1 5 3 1 2-2 1-3-1-6-5-6-7-6zm18 0l-1 1 3 3 3 3 4 4 2 4 3 4 1 4 4 0 2-2 0-4-3-5-7-6-11-6zm-11-66l0 4 0 4 0 4-1 4 0 4 0 4-14 0 1-5 2-4 4-1-7-7-4 4-16 0 1-4 2-4 4-2-9-3-3 8-3 8-4 7-4 7-4 6-5 5 2 1 4-3 4-4 3 2 2 3 3 4 1 3 3 0 1-1 1-3-2-3-4-4-7-2 2-3 3-4 2-3 4 3 3 3 3 4 2 0 2-1 0-3-2-3-4-3-7-2 2-3 2-3 18 0-3 11-5 10-6 10-7 8-9 8-10 7 2 1 10-5 9-7 7-7 7-8 5-9 4-9 0 3 14 0-2 7-3 7-4 6-5 6-7 6-10 5 2 2 10-5 9-6 6-6 5-6 2-7 2-8 2 9 3 7 3 7 4 6 5 4 6 5 3-4 3-2 0-1-6-3-6-4-5-5-4-6-4-7-2-7 24 0 3-2-6-5-3-2-4 6-15 0 0-4 1-4 0-4 0-4 0-4 3-3z"/><path id="gbz" d="m4-7l4 9 3-2 6-3 6-3 5-3 5-2 4-2 4-2 0-2-8 2-7 2-7 2-6 2-5 1-4 1zm28-72l-10-4-2 4-2 5-3 5-3 5-3 5-3 3-3 1 4 9 1-1 5-1 4-2 4-1 3-1-3 4-3 4-3 4-3 4-3 3-3 3-3 1 4 9 2-2 6-2 6-2 5-2 5-1 4-2 4-1-1-2-5 1-5 1-5 1-5 1-4 0-4 1 5-5 5-4 5-5 5-5 4-5 3-5 4-1-9-5-3 4-3 5-4 0-5 0-4 1-4 0 4-4 3-4 4-4 3-4 3-4 2-3 4-2zm20 76l0-23 30 0 0 23zm-7-29l0 40 1 0 6-2 0-6 30 0 0 7 1 0 5-2 0-31 4-2-7-5-3 4-29 0zm44-38l-5 6-14 0 0-16 4-3-10-1 0 20-26 0 1 2 25 0 0 19-21 0 1 3 48 0 2-2-5-5-3-2-5 6-11 0 0-19 25 0 2-1-5-5-3-2z"/><path id="gca" d="m18-78l0 41 1 0 5-3 0-3 22 0 0 13-41 0 1 2 34 0-5 6-5 6-6 5-6 6-7 4-8 4 1 2 9-4 8-4 7-5 7-5 6-5 5-6 0 32 1 0 6-2 0-34 1 0 4 7 6 7 6 5 6 6 7 4 8 3 2-3 3-2 1-1-8-3-7-3-7-4-7-5-6-5-6-6 37 0 3-1-6-5-4-3-5 7-28 0 0-13 23 0 0 5 1 0 5-3 0-33 4-2-8-6-3 4-50 0-7-4zm28 3l0 13-22 0 0-13zm7 0l23 0 0 13-23 0zm-7 16l0 13-22 0 0-13zm7 0l23 0 0 13-23 0z"/><path id="gcb" d="m18 8l5-1 4-2 3-3 2-3 0-5 0-4-2-4-3-3-4-2-5-1-4 1-4 2-3 3-2 4-1 4 1 5 2 3 3 3 4 2 4 1zm0-3l-4-1-3-2-3-4 0-4 0-4 3-3 3-3 4 0 4 0 4 3 2 3 1 4-1 4-2 4-4 2-4 1z"/><path id="gcc" d="m61-66l-1 1 2 3 3 3 2 4 1 3 3 1 2-1 1-3-2-3-4-4-7-4zm13 43l-5 6-28 0 1 3 37 0 3-2-6-4-2-3zm-1-59l-10-2-2 11-3 0-8-4 0 44-2 2 7 5 2-4 29 0 0 8-1 7-1 5-1 5-1 3-1 1-4 1-5 0-6 0 0 1 5 1 3 2 1 4 6-1 4-2 2-3 2-3 1-5 1-6 1-8 1-9 4-2-8-6-3 4-30 0 0-37 26 0-1 6 0 6-1 5 0 3-1 3-1 1-3 1-4-1-5 0 0 2 6 2 2 4 4 0 4-2 2-2 1-3 1-5 1-5 0-7 1-8 4-1-8-6-3 4-17 0 3-4 3-3 3-2zm-32 32l-4 5-1 0 0-27 10 0 2-1-4-5-3-2-4 6-33 0 1 2 24 0 0 27-14 0 1-4 1-4 1-5 1-4 4-2-9-2-1 3-1 4 0 5-1 4-1 4-5 2 7 5 3-3 9 0-2 7-3 7-3 7-4 7-4 6-5 5 1 2 6-5 5-5 4-6 4-6 3-6 3-6 0 33-2 2-6-1-5 0 0 1 5 1 3 2 2 5 5-2 3-2 1-3 1-3 0-40 10 0 2-1-4-5-3-2z"/><path id="gcd" d="m55-84l0 27-27 0 0-20 4-2-10-1 0 35-1 10-1 9-2 9-3 9-5 7-6 7 1 2 7-6 5-6 4-6 3-7 2-8 1-7 35 0 0 40 1 0 5-2 0-37 5-2-9-7-3 5-33 0 0-5 0-5 0-9 65 0 3-2-6-5-3-2-5 6-20 0 0-23 3-3z"/><path id="gce" d="m70-80l-1 1 3 3 2 4 3 4 1 4 3 1 2-1 1-3-2-4-4-4-8-5zm-4-2l-10-2 0 6 0 5 0 5 0 5 1 5 0 5-16 2 1 3 16-2 1 6 1 6 1 5 2 6 1 5 3 5-4 4-3 4-4 5-5 3-4 4-5 3 1 2 5-3 5-3 5-3 4-4 4-4 3-3 3 3 2 3 3 4 3 2 3 3 5 3 4 2 4-2 0-2-3-4 2-16-1 0-1 5-2 4-1 3-4 0-3-2-2-3-3-2-2-4-2-3 3-4 2-4 3-4 2-4 1-4 2-4 4-2-10-3-1 4-2 4-1 3-2 4-2 4-2 4-2-4-1-4-1-5-1-4-1-5-1-5 28-3 2-2-6-4-3-2-4 6-17 2-1-4 0-4 0-5 0-4 0-4 0-5 3-2zm-32-1l-10-1 0 45-7 0-8-3 0 46 1 0 6-2 0-7 23 0 0 5 1 0 5-2 0-33 4-1-8-6-3 3-8 0 0-20 19 0 3-1-5-5-3-3-4 6-10 0 0-18 4-3zm-18 75l0-28 23 0 0 28z"/><path id="gcf" d="m78-84l-7 2-8 2-9 3-9 2-10 2-9 1-9-3 0 29 0 9-1 9-1 9-3 9-3 8-5 8 1 1 7-8 5-8 4-10 1-9 1-9 0-9 0-5 70 0 3-2-6-5-3-2-5 6-59 0 0-15 11-1 10-1 10-1 9-2 9-1 8-2 5 0zm-46 50l0 42 1 0 5-2 0-6 39 0 0 7 1 0 6-2 0-36 4-1-8-6-3 4-38 0-7-3zm6 31l0-28 39 0 0 28z"/><path id="gcg" d="m54-85l-1 1 3 2 3 3 2 4 1 3 3 1 2-2 1-2-2-4-4-3-8-3zm-43 65l-4 0 0 2 5 1 1 2 0 3 0 4 0 5 0 6 3 5 4-2 1-5 0-5 0-3-1-4-1-3 0-2 0-5 1-4 1-4 1-6 2-8 2-8 1-8 2-7-2 0-5 17-4 11-2 7-1 5-1 2-1 2-2 2zm-7-40l-1 1 3 2 3 3 2 3 2 4 3 0 2-1 1-3-2-4-5-3-8-2zm6-23l0 1 3 3 3 3 3 4 2 3 3 1 2-2 1-3-3-3-5-4-9-3zm59 74l-1 2 5 2 4 2 4 2 3 3 2 2 2 2 4 2 3-2 1-3-3-4-9-4-15-4zm-9 4l-9-5-3 3-3 3-4 3-5 2-5 3-5 2 1 2 6-2 5-1 5-2 5-2 4-3 4-2 4-1zm-22-70l-1 0-1 4-2 4-2 3-2 2-1 4 2 2 4 0 3-4 1-7 46 0-1 7 1 1 4-4 4-3 3-1-7-7-4 4-46 0-1-5zm20 33l0 11-15 0 0-11zm21-21l-4 5-38 0 1 3 20 0 0 10-14 0-8-3 0 40 1 0 6-2 0-4 37 0 0 4 1 0 5-2 0-29 4-2-7-6-4 4-14 0 0-10 20 0 3-1-6-5-3-2zm-14 21l15 0 0 11-15 0zm-7 14l0 11-15 0 0-11zm7 0l15 0 0 11-15 0z"/><path id="gch" d="m42-85l-1 1 2 3 3 3 3 4 1 3 4 1 2-2 0-3-1-3-5-4-8-3zm-9 28l-9-5-3 5-3 5-3 5-4 4-3 3-4 3 1 1 5-2 4-2 4-4 4-3 3-4 4-5 4-1zm36-3l-1 1 4 2 4 3 3 4 4 3 2 4 2 4 4 0 2-2-1-4-3-5-8-6-12-4zm-23 50l-7 3-6 4-7 3-7 2-8 2-8 2 1 2 9-1 8-2 8-3 7-2 8-3 6-4 6 4 6 2 7 3 7 2 7 2 7 2 3-4 3-2 0-1-7-1-7-2-7-1-7-2-6-2-6-3 4-3 3-3 4-3 3-3 3-3 3-4 5-1-7-7-6 4-52 0 0 3 13 0 2 4 2 4 3 3 3 3 3 3 4 3zm4-3l-4-2-3-3-4-2-3-3-2-3-3-4 37 0-3 3-2 3-3 3-3 3-4 2-3 3zm36-63l-5 6-76 0 1 3 30 0 0 31 1 0 5-1 0-30 16 0 0 31 1 0 5-2 0-29 28 0 3-2-6-5-3-2z"/><path id="gci" d="m44-27l-1 1 3 2 3 4 2 3 2 4 2 3 3 1 2-1 1-4-2-4-6-5-9-4zm17-57l0 15-21 0 1 3 20 0 0 15-26 0 1 3 58 0 3-2-5-5-4-2-4 6-17 0 0-15 23 0 2-2-5-5-3-2-5 6-12 0 0-11 4-2zm13 37l0 13-39 0 1 3 38 0 0 29-2 2-8-1-6 0 0 1 6 2 3 1 3 5 6-1 3-2 1-3 1-4 0-29 13 0 2-2-5-5-3-2-4 6-3 0 0-9 3-3zm-71 17l4 8 2-2 11-6 0 38 2 0 5-3 0-38 15-8 0-1-15 5 0-20 13 0 3-2-6-5-3-2-4 6-3 0 0-20 3-3-10-1 0 24-7 0 1-4 1-4 1-4 4-3-10-2 0 6-1 6-1 6-1 6-2 5-1 5 2 1 2-4 1-3 2-4 1-4 8 0 0 22-5 2-5 1-4 1-3 1z"/><path id="gcj" d="m94-81l-10-1 0 79-2 3-8-1-5 0 0 1 5 1 4 2 2 5 6-1 3-3 1-2 1-4 0-76 3-3zm-20 7l-10-1 0 63 1 0 5-2 0-57 4-3zm-30 21l-27 0 0-21 27 0zm-33-27l0 35 1 0 5-2 0-3 27 0 0 4 1 0 5-2 0-25 4-2-7-6-4 4-24 0zm23 33l-10-1 0 4 0 5-1 4-18 0 1 3 17 0-1 7-2 8-3 7-3 6-5 6-6 5 1 1 8-5 6-6 4-7 4-7 2-7 1-8 16 0 0 8-1 8-1 5-1 5-1 3-1 2-3 1-5 0-7-1 0 2 5 1 3 1 2 5 5-1 4-2 2-3 2-4 1-5 1-7 1-8 0-9 4-2-7-6-4 4-14 0 0-5 0-5 4-2z"/><path id="gck" d="m6 0l45 0 0-7-39 0 4-4 3-4 3-3 3-3 2-2 7-7 5-6 4-6 3-4 2-5 0-4 0-6-2-4-3-4-4-3-5-2-6 0-5 0-5 1-4 3-4 3-2 3-2 5 4 3 3-1 2-4 3-9 4-1 3 0 5 0 3 2 3 2 2 3 1 4 1 4-1 5-1 4-2 4-3 5-4 5-4 6-3 3-3 4-3 3-3 4-3 4-4 4z"/><path id="gcl" d="m28 2l6-1 5-3 5-5 4-8 2-9 1-13-1-12-2-9-4-8-5-4-5-3-6-1-6 1-6 3-4 4-4 8-2 9-1 12 1 13 2 9 4 8 4 5 6 3 6 1zm0-4l-4 0-3-3-3-4-3-7-1-9-1-12 1-11 1-9 3-7 3-4 3-2 4-1 3 1 4 2 3 4 2 7 2 9 1 11-1 12-2 9-2 7-3 4-4 3-3 0z"/><path id="gcm" d="m81-81l-10-1 0 27-20 0 0-25 4-2-10-1 0 28-19 0 0-23 4-2-10-2 0 27-16 0 1 3 15 0 0 50-3 2 7 5 3-4 65 0 2-1-5-5-4-3-5 6-54 0 0-50 19 0 0 38 1 0 5-2 0-7 20 0 0 7 1 0 5-3 0-33 17 0 3-1-6-5-3-3-5 6-6 0 0-23 4-3zm-30 55l0-26 20 0 0 26z"/><path id="gcn" d="m4-7l4 9 3-2 6-3 7-3 5-3 5-2 5-2 4-2-1-2-7 2-8 2-7 2-6 2-6 1-4 1zm29-71l-9-5-2 4-3 5-3 5-3 5-4 5-3 3-3 1 4 9 2-1 4-1 4-1 3-1 4-1 3-1-3 4-4 4-3 4-4 4-3 3-3 3-3 1 3 9 2-2 7-1 6-2 6-2 5-2 4-2 4-1 0-1-6 0-5 1-5 1-5 1-5 0-3 1 5-5 6-5 5-5 5-6 4-5 4-4 4-1-9-6-2 3-2 4-3 4-4 0-5 0-4 1-3 0-4 0 4-4 4-3 4-4 3-4 3-4 3-4 3-1zm13 29l0 46 0 4 2 2 4 1 6 1 14 0 9 0 7-1 4 0 3-1 1-1 1-1-3-3-1-15-1 0-1 5-1 4-1 3 0 2-3 2-3 0-4 0-6 0-15 0-5-1-1-2 0-39 30 0 0 9 1 0 6-3 0-35 4-2-8-6-4 4-39 0 1 3 39 0 0 27-29 0-7-3z"/><path id="gco" d="m16-84l-1 1 3 3 3 4 2 4 1 4 4 1 2-2 0-3-1-4-5-4-8-4zm45 15l-1 16-2 16-3 13-5 12-8 10-9 8 1 2 12-8 8-10 6-11 4-14 2-16 2-18 18 0 0 18-1 15-1 13-1 10-1 6-2 4-4 2-4-1-5 0-4 0-1 1 6 2 4 1 2 5 4 0 4-2 3-3 2-4 2-8 1-10 1-13 1-17 1-18 4-2-8-7-4 5-43 0 1 3zm-34 75l0-41 3 2 3 3 3 3 3 3 2 3 3 1 1-2 1-2-1-4-4-3-7-4 4-2 3-3 3-3 3 0-6-5-2 3-3 3-2 3-2 3-5-1 0-3 3-4 2-3 3-3 2-4 2-3 1-3 5-1-7-7-5 4-29 0 0 3 29 0-3 7-5 7-5 7-5 7-6 7-7 5 2 1 3-2 2-2 3-2 3-2 3-3 3-2 0 41 1 0 5-2z"/><path id="gcp" d="m59-84l-1 7-2 6-1 7-2 6-2 6-3 5-4-4-2-2-5 5-5 0 0-23 18 0 2-2-5-5-3-2-5 6-34 0 1 3 19 0 0 59-10 2 0-43 3-2-8-1 0 47-7 2 4 9 3-3 9-3 8-4 8-3 6-2 6-3 6-2-1-2-20 6 0-30 15 0-1 3-2 3 1 1 3-3 2-3 3-4 2-4 1 6 2 6 1 5 2 5 2 5 2 5-4 5-4 5-5 4-6 4-6 4-7 3 1 2 7-3 7-3 6-4 5-3 5-5 4-4 3 4 3 4 4 4 4 4 4 3 5 3 2-4 4-1 0-1-5-3-5-3-4-3-5-3-3-4-3-4 3-6 3-6 3-7 2-6 2-8 1-7 8 0 3-2-6-5-3-2-5 6-23 0 2-4 1-3 1-4 1-3 1-4 4-2zm9 60l-3-4-2-5-2-5-1-5-2-5-1-6 2-4 20 0-1 6-1 6-2 6-2 6-2 5-3 5z"/><path id="gcq" d="m11-20l-4 0 0 2 5 1 1 2 1 3 0 4 0 5-1 6 4 5 4-2 1-5 0-5 0-4-1-3-1-3 0-2 0-5 2-5 1-4 3-7 4-8 3-9 4-10 3-8-1 0-10 19-6 13-4 9-3 4-1 3-1 2-3 2zm-6-40l-1 0 4 3 3 3 3 3 2 4 3 0 2-1 0-4-2-3-5-3-9-2zm9-22l-1 1 3 2 4 4 3 4 2 3 3 1 2-2 1-3-3-4-5-4-9-2zm60 15l-1 1 2 3 3 3 3 3 2 3 2 3-8 1-9 0-8 1-7 0-7 0-5 0 5-4 4-5 5-5 4-5 4-5 3-5 4-1-10-5-3 6-3 6-4 6-4 6-5 6-4 4-3 1 4 9 2-2 9-1 9-1 8-1 8-2 6-1 6-1 2 4 1 4 4 1 2-2 0-5-3-6-6-7-12-7zm-27 64l0-26 34 0 0 26zm-7-33l0 44 2 0 5-2 0-6 34 0 0 6 1 0 6-1 0-34 4-2-8-5-3 4-33 0z"/><path id="gcr" d="m25 8l4-5-1-3-1-4-2-2-3-2-3-3-4-2-4-2-6-2-1 1 4 4 3 3 3 3 2 3 2 3 2 3 5 5z"/><path id="gcs" d="m4-7l4 9 2-2 7-3 5-2 6-3 5-2 4-2 4-2 0-1-8 2-7 1-7 2-6 1-5 1-4 1zm30-71l-10-5-2 4-3 5-3 5-3 5-4 5-3 3-3 1 4 9 2-1 4-1 5-1 4-1 4-2-3 5-4 4-3 4-3 3-4 3-3 3-3 1 4 9 2-2 6-1 6-2 5-2 5-1 4-2 3-1 0-1-5 0-5 1-5 1-5 0-4 1-4 0 6-5 6-5 5-5 5-5 5-6 3-4 4-1-9-6-2 3-2 4-3 4-19 1 4-3 4-4 4-4 3-4 3-4 3-4 4-1zm48 43l-4 5-35 0 1 3 18 0 0 26-27 0 0 3 59 0 3-2-6-4-3-3-4 6-15 0 0-26 19 0 3-1-6-5-3-2zm-16-17l5 2 4 3 5 3 4 3 4 3 3 3 4-1 1-2-1-3-5-5-9-4-13-4 3-3 3-3 3-3 3-3 2-3 2-3 4-1-7-7-5 5-35 0 1 3 34 0-5 7-6 6-7 7-7 6-8 6-8 5 1 1 5-2 6-3 5-3 5-3 5-3 4-4z"/><path id="gct" d="m55-85l-1 1 3 4 2 4 1 5 3 1 3-2 1-2-1-4-4-4-7-3zm0 51l-10-1 0 13 0 5-1 5-2 5-4 5-4 5-7 4 1 1 9-4 6-4 4-5 3-6 1-5 1-6 0-10 3-2zm26 0l-10-1 0 43 1 0 5-2 0-38 4-2zm-71 14l-4 0 0 2 5 1 1 2 0 3 1 4 0 5-1 6 3 5 4-2 2-5 0-5-1-3-1-4 0-3-1-2 1-4 1-5 1-4 2-5 2-7 2-8 3-8 2-6-2-1-6 16-5 11-3 7-2 4-1 2 0 2-3 2zm-5-40l-1 1 4 2 3 3 2 3 2 3 3 1 3-1 0-3-2-4-5-3-9-2zm8-22l-1 0 3 3 4 3 3 4 2 4 3 0 2-1 1-4-3-3-5-4-9-2zm74 6l-5 6-50 0 1 3 12 0 2 4 2 3 2 4 2 3 2 2 3 3-4 3-5 3-4 2-6 3-5 2-6 2 1 1 6-1 6-2 6-2 5-3 5-2 5-3 4 2 4 3 5 2 5 1 5 2 6 1 2-4 3-2 0-1-5-1-6-1-5-1-5-1-4-2-5-2 3-2 3-3 3-3 2-3 2-3 1-4 13 0 3-2-6-4-3-3zm-25 25l-4-3-3-3-3-3-2-3-2-4 24 0-1 3-2 4-2 3-3 3-2 3z"/><path id="gcu" d="m41-84l-1 1 3 3 3 3 3 4 2 4 2 4 3 0 2-1 0-4-2-5-6-4-9-5zm29 25l-2 7-2 7-3 6-4 6-4 6-5 5-5-5-4-5-4-6-4-7-3-7-2-7zm16-9l-5 6-76 0 1 3 19 0 3 8 2 8 4 7 3 7 5 6 4 5-5 5-6 5-7 4-7 4-8 3-9 3 1 2 9-3 9-3 7-3 8-4 6-4 6-5 6 5 5 4 7 4 6 3 8 3 7 3 3-4 5-2 0-1-8-2-8-3-7-2-7-4-6-4-6-4 5-6 5-6 4-7 4-7 3-7 2-8 15 0 3-2-6-5-4-2z"/><path id="gcv" d="m82-66l-3 4-4 5-4 5-5 5-5 5-5 4 0-40 3-3-10-1 0 50-3 2-4 3-3 2-4 3-3 2-4 2 1 2 3-2 4-2 3-2 4-1 3-2 3-2 0 23 1 4 1 2 2 2 3 1 5 0 13 0 8 0 6-1 4 0 3-1 1-1 0-2-3-3 0-15-2 0-1 7-1 5-1 3-3 1-2 0-4 0-5 0-12 0-5 0-1-3 0-27 6-4 6-5 5-4 5-5 5-5 4-4 4-1zm-52-18l-4 10-4 10-4 10-5 8-6 8-5 7 2 1 2-2 3-3 2-2 3-3 2-3 2-3 0 54 2 0 5-2 0-58 3-2-3-1 2-4 2-3 2-4 2-4 2-4 2-4 4-2z"/><path id="gcw" d="m56-35l-10-4-2 6-1 7-2 6-3 7-3 6-3 6 1 1 4-5 4-6 4-6 3-5 2-6 2-6 4-1zm20-3l-2 1 3 5 3 6 3 5 3 6 1 6 1 6 4 1 2-2 0-6-2-8-6-9-10-11zm6-42l-4 6-35 0 1 3 44 0 3-2-5-5-4-2zm6 23l-5 6-48 0 1 3 26 0 0 46-3 2-6-1-5 0 0 2 5 1 3 1 2 5 5-1 3-2 2-3 0-4 0-46 26 0 2-1-5-5-3-3zm-80-24l0 89 1 0 5-3 0-80 15 0-1 4-2 5-1 4-1 5-2 4-1 3 3 4 2 4 2 3 1 4 1 4 0 3-1 5-1 2-3 1-7 0 0 1 5 2 1 5 4-1 4-1 2-2 2-2 0-4 1-4-1-4-1-4-1-4-3-4-3-4-4-4 2-3 2-4 2-5 2-4 2-4 2-3 4-1-7-8-5 4-12 0z"/><path id="gcx" d="m72-47l-1 1 4 4 3 4 4 5 3 6 3 5 1 5 4 1 2-3 0-5-3-7-8-8-12-8zm15-34l-5 6-40 0 0 3 21 0-3 11-4 11-5 11-6 10-6 10-7 9 1 1 6-5 5-6 4-6 5-6 4-6 3-7 0 53 1 0 6-2 0-56 4-2-7-2 2-3 1-4 2-4 1-4 1-3 22 0 3-2-6-5-3-2zm-55 1l-4 6-24 0 1 3 13 0 0 24-12 0 1 3 11 0 0 26-4 2-4 2-3 1-3 1 5 8 2-3 6-4 5-3 5-3 5-3 4-3 4-2-1-2-14 7 0-24 12 0 3-1-5-5-2-2-5 5-3 0 0-24 13 0 2-1-5-5-3-3z"/><path id="gcy" d="m46-68l-1 0 3 4 2 4 2 4 3 1 2-1 1-3-1-3-4-3-7-3zm39-10l-4 5-15 0 1-1 1-3-2-3-3-2-6-3-1 1 3 3 1 4 1 4 1 0-26 0 1 3 54 0 2-1-5-5-3-2zm-39 60l0-3 6 0-1 5-1 5-3 4-5 5-7 4-10 4 1 2 12-4 8-5 6-4 4-5 2-5 1-6 8 0 0 20 1 3 2 2 4 1 8 0 7-1 4 0 2-1 1-2-3-3 0-10-1 0-2 6-1 4-1 1-6 0-6 0-3-1 0-19 7 0 0 4 1 0 5-2 0-22 4-2-7-6-4 4-33 0-7-3 0 32 1 0 6-2zm34-24l0 8-34 0 0-8zm-34 10l34 0 0 8-34 0zm42-28l-4 6-12 0 3-3 3-4 2-3 4-1-9-4-2 3-1 4-2 4-2 4-35 0 1 3 59 0 3-2-5-4-3-3zm-58-5l-4 6-4 0 0-21 4-2-10-1 0 24-12 0 1 3 11 0 0 36-5 2-4 2-3 1 6 8 1-3 6-3 5-4 5-3 4-3 3-2 4-3-1-1-15 7 0-34 13 0 2-2-4-4-3-3z"/><path id="gcz" d="m97-23l-9-6-6 8-6 6-6 6-7 6-7 5-7 4 1 2 8-4 8-4 8-5 7-5 6-6 6-7 4 0zm-3-28l-9-5-4 5-4 5-5 5-5 5-5 5-6 4 2 1 6-3 6-4 5-4 6-4 5-5 4-4 4-1zm-2-26l-9-5-4 5-4 5-4 4-5 5-5 4-5 4 2 1 5-3 6-3 5-4 5-4 5-4 4-4 4-1zm-66 64l-9-3-2 3-1 3-2 3-3 4-2 3-3 3 1 1 3-2 4-3 3-2 3-3 2-3 2-3 4-1zm13-3l-1 0 3 3 3 4 2 4 2 3 3 1 2-1 0-3-2-4-4-4-8-3zm15-35l-4 5-15 0 2-2 0-2-3-3-6-2-1 0 2 4 1 4 2 1-28 0 1 3 55 0 2-1-5-5-3-2zm-8-26l0 8-28 0 0-8zm-28 24l0-3 28 0 0 4 1 0 5-2 0-22 4-2-8-6-3 4-26 0-7-3 0 32 1 0 5-2zm0-6l0-7 28 0 0 7zm28 25l0 10-28 0 0-10zm-11 32l0-20 11 0 0 5 6-2 0-14 3-2-7-5-3 3-26 0-7-3 0 24 1 0 5-2 0-4 11 0 0 20-2 2-8 0 0 1 6 2 1 5 5-1 3-2 1-3 0-4z"/><path id="gda" d="m25-69l0 43-11 0 0-43zm-17-3l0 62 1 0 5-3 0-10 11 0 0 8 1 0 5-2 0-51 4-2-7-6-4 4-10 0-6-3zm46 22l0 37 1 0 4-2 0-7 12 0 0 6 1 0 4-2 0-28 4-2-7-5-3 3-10 0-6-3zm5 25l0-22 12 0 0 22zm2-59l-1 5-1 5-1 4-1 5-11 0-7-4 0 77 1 0 5-3 0-68 40 0 0 61-2 2-7-1-5 0 0 2 5 1 3 1 3 5 5-1 3-2 1-3 1-4 0-60 4-1-8-7-4 5-24 0 2-4 2-3 2-4 2-3 4-3z"/><path id="gdb" d="m55-42l-1 1 2 3 2 3 2 4 2 4 1 4 1 3 4 2 2-2 1-4-2-5-5-6-9-7zm-37-38l-1 1 3 3 3 3 2 4 2 4 2 4 3 1 2-2 1-3-2-5-5-5-10-5zm36 0l4-3-11-1 0 5 0 4 0 5 0 5-1 4 0 5-39 0 1 3 37 0-2 10-3 10-5 11-8 9-10 10-13 9 2 1 15-8 11-10 9-10 5-11 4-10 2-11 32 0-1 12-1 11-1 10-1 8-2 6-2 4-4 1-4 0-4 0-6-1-5 0 0 1 5 1 5 1 3 2 2 4 6 0 4-2 3-2 3-4 2-7 1-9 2-11 1-12 0-12 5-2-8-7-4 5-30 0 0-4 1-4 0-4 0-4 0-4 0-4z"/><path id="gdc" d="m67-82l-1 2 4 2 3 2 4 3 2 3 3 1 2-2-1-3-2-3-5-3-9-2zm-53 18l0 22 0 8 0 9-2 8-2 9-3 8-4 7 1 1 7-7 4-8 3-9 2-9 1-8 0-8 18 0 0 7-1 7 0 5-1 4-1 3-1 1-3 1-4 0-5-1 0 2 6 2 2 5 5-1 4-2 1-2 1-4 1-4 1-6 1-8 0-9 4-1-7-6-4 4-17 0 0-17 33 0 0 8 2 8 1 7 2 7 2 7 3 6-4 4-4 5-4 4-5 4-6 4-5 3 1 1 6-2 5-3 6-4 4-3 5-4 4-5 2 4 2 3 3 2 2 3 3 2 3 3 5 3 5 1 4-1 0-3-3-3 2-15-2-1-1 5-2 4-1 3-3 0-4-2-3-3-3-3-3-3-2-4 3-4 3-5 2-4 3-5 2-5 1-4 4-2-10-3-1 4-2 5-1 4-2 5-3 4-2 5-2-6-2-6-1-6-2-6 0-6-1-7 33 0 3-1-6-5-3-3-5 6-22 0-1-4 0-4 0-4 0-4 4-2-10-2 0 4 0 4 0 4 0 4 0 4-31 0-8-3z"/><path id="gdd" d="m39-84l-1 1 3 3 2 4 3 4 2 4 1 3 3 1 2-1 1-4-2-4-5-6-9-5zm-15 32l-2 1 2 6 3 7 2 7 2 8 2 7 0 7 4 2 2-3 1-7-2-9-5-12-9-14zm59-16l-5 6-70 0 1 3 81 0 2-1-6-6-3-2zm4 60l-5 6-25 0 4-7 4-8 3-8 4-8 3-8 2-7 4-2-11-3-2 8-2 9-3 9-3 9-3 8-3 8-50 0 1 3 89 0 2-1-6-5-3-3z"/><path id="gde" d="m94-83l-10-1 0 82-3 2-6-1-5 0 0 1 5 1 3 2 2 5 5-1 3-2 2-3 0-4 0-78 4-3zm-20 13l-10-1 0 56 1 0 5-3 0-50 4-2zm-35-10l-10-4-3 7-3 7-5 7-5 7-5 7-6 6 2 1 3-2 4-4 3-3 0 48 1 3 1 2 4 1 5 1 12 0 8 0 5-1 4 0 3-1 1-1 0-1-3-3 0-16-1 0-1 5-1 4-1 4-1 2-2 2-4 0-7 0-11 0-5-1 0-2 0-42 22 0 0 6 0 5-1 4 0 3 0 2-1 1-2 1-5 0-5-1 0 2 7 2 1 4 5 0 4-2 1-2 1-2 0-4 1-5 0-6 0-7 4-2-8-6-3 4-20 0-6-3 4-4 3-4 3-4 3-4 2-4 3-3 3 3 4 4 4 4 3 4 3 4 2 4 3 1 2-2 0-5-4-6-7-6-12-7 4-2z"/><path id="gdf" d="m10-81l-2 1 3 3 2 3 2 4 2 4 2 4 0 4 4 1 3-1 0-5-2-5-5-7-9-6zm9 71l-3 2-4 3-4 3-4 2 6 7 0-2 3-3 3-4 2-3 2-2 4 0 4 4 5 3 5 3 7 1 7 1 9 0 5 0 6 0 5 0 4 0 5 0 5 0 1-3 4-2 0-1-6 0-5 0-6 0-5 0-5 0-6 0-9 0-7 0-7-1-6-2-5-2-4-4 0-32 5-2-9-6-3 5-13 0 0 3 14 0zm34-69l-10-3-1 5-2 6-1 5-2 5-2 4-3 4 2 1 3-3 2-3 3-3 2-4 16 0 0 15-29 0 0 3 63 0 2-1-5-5-3-3-5 6-17 0 0-15 24 0 3-2-6-5-3-2-4 6-14 0 0-12 4-3-10-1 0 16-14 0 2-5 2-4 3-2zm-6 71l0-5 33 0 0 6 1 0 5-2 0-24 4-2-8-6-3 4-32 0-7-3 0 34 1 0 6-2zm33-26l0 18-33 0 0-18z"/><path id="gdg" d="m11-76l1 3 65 0-4 3-3 3-4 4-4 3-4 3-4 3-7-1 0 52-3 3-6-1-7 0-4 0 0 1 5 1 4 1 2 1 3 5 6-1 3-2 2-2 1-2 0-3 0-49 4-3-1 0 6-3 5-3 6-3 5-3 5-3 4-3 4-1-8-7-5 4z"/><path id="gdh" d="m87-36l-5 6-37 0 5-6 4-2-10-3-1 3-3 4-3 4-33 0 1 3 30 0-3 4-3 4-3 3-3 3 4 1 5 1 4 1 4 1 4 1 4 1-6 3-6 3-7 2-7 2-9 2-9 1 0 2 11-1 10-1 9-2 8-3 7-2 6-4 5 2 5 2 5 2 4 2 4 2 4 1 4 1 2-1 0-2-4-4-9-4-15-5 2-2 3-3 2-3 2-3 2-3 1-4 21 0 3-1-6-5-3-3zm-55 22l3-3 2-3 3-3 3-4 21 0-1 4-2 4-3 3-3 3-3 3-3-1-4-1-4 0-4-1-5-1zm46-47l0 16-14 0 0-16zm8-22l-5 6-76 0 1 3 30 0 0 10-14 0-7-3 0 30 1 0 5-2 0-3 57 0 0 4 2 0 5-2 0-20 4-2-8-6-3 4-14 0 0-10 28 0 3-2-6-5-3-2zm-65 38l0-16 15 0 0 16zm36-16l0 16-15 0 0-16zm0-3l-15 0 0-10 15 0z"/><path id="gdi" d="m40-16l-9-5-3 4-4 5-4 4-5 4-5 4-5 4 1 1 6-3 6-3 5-3 5-4 5-4 3-3 4-1zm24-3l-1 1 4 3 4 3 5 4 4 3 3 4 3 4 3 0 2-2-1-4-4-5-9-6-13-5zm-7-20l-10-1 0 12-37 0 1 3 36 0 0 23-3 2-7 0-7-1 0 2 7 1 3 1 2 5 6-1 4-2 1-3 1-4 0-23 33 0 3-2-6-5-3-2-5 6-22 0 0-9 3-2zm-9-42l-11-4-3 6-4 7-5 6-5 5-5 6-6 4 1 1 5-2 4-3 4-2 3-3 4-3 3-4 2 4 3 3 2 3 3 3 3 2-6 4-6 3-7 3-7 3-8 2-8 2 1 2 9-2 8-2 8-2 8-3 7-3 6-3 6 3 6 3 6 2 7 2 7 2 7 1 2-4 4-2 0-1-7-1-7-1-7-2-6-1-7-2-5-3 3-2 4-3 3-3 3-3 3-4 2-3 5-1-8-7-5 4-27 0 2-3 2-3 4-1zm3 26l-4-2-4-2-3-3-3-3-2-3 2-3 30 0-2 3-3 3-2 3-3 2-3 3-3 2z"/><path id="gdj" d="m59-83l0 22-15 0 2-4 1-4 2-4 3-2-10-3-1 7-2 7-2 7-3 7-3 6-3 5 2 1 2-3 3-3 2-3 2-3 2-4 2-4 16 0 0 25-30 0 1 3 29 0 0 38 2 0 5-3 0-35 28 0 3-2-6-5-3-2-5 6-17 0 0-25 25 0 3-1-6-5-3-3-4 6-15 0 0-18 4-3zm-33-1l-3 10-4 9-3 9-4 8-4 8-5 6 2 1 2-2 3-3 2-4 3-3 2-3 0 56 1 0 6-2 0-60 3-2-5-2 2-3 2-3 2-4 1-3 2-4 1-3 4-2z"/><path id="gdk" d="m84-51l-6 8-73 0 1 3 87 0 3-1-5-5-5-4-2-1z"/><path id="gdl" d="m60-31l-4 7-52 0 1 3 62 0 3-2-6-5-4-3zm24-41l-5 6-48 0 1-5 0-4 1-4 3-2-9-3-1 5-1 6-1 7-1 7-1 7-1 6-4 2 7 5 4-3 50 0 0 9-2 9-1 8-1 7-2 4-2 3-5 2-3-1-5 0-5-1-5 0 0 2 5 1 5 1 3 1 2 5 5-1 4-1 3-2 3-4 2-5 2-8 2-8 1-10 1-11 4-1-7-6-4 4-50 0 0-4 1-4 1-5 0-4 60 0 3-2-6-5-3-3z"/><path id="gdm" d="m36-81l-10-3-2 11-3 10-4 9-4 9-4 7-5 7 1 1 3-2 2-3 3-2 2-3 2-3 2-4 3 3 3 3 3 3 2 4 1 3 4 1 2-2 0-3-2-5-5-4-10-4 2-4 2-4 2-3 2-4 18 0-3 14-4 13-6 13-7 11-10 10-12 8 1 2 15-9 11-10 8-11 7-13 4-13 3-14 4-2-7-6-4 4-17 0 1-4 1-4 1-5 4-2zm38 0l-10-1 0 90 2 0 5-2 0-55 4 3 4 3 3 4 4 4 2 3 2 4 4 1 2-3 0-4-4-6-8-6-13-6 0-27 3-2z"/><path id="gdn" d="m51-10l0 2 7 2 6 2 6 3 5 2 5 3 3 2 4 2 3-2-1-3-5-4-12-5-21-4zm6-16l-10-3-1 7-2 7-4 6-8 6-11 4-15 5 1 2 17-4 12-5 8-5 5-5 3-7 1-6 4-2zm-49-56l0 1 3 2 3 3 3 4 2 3 3 1 2-2 0-3-2-3-5-4-9-2zm3 27l-5 0 0 3 5 0 1 3 1 4-1 6 3 3 4-1 1-4-1-6-1-4 3-5 1-2 3-4 3-4 3-4 4-4 2-3-1-1-8 8-6 6-3 4-3 2-1 1-1 1-3 1zm16 48l0-26 46 0 0 25 1 0 6-2 0-22 4-2-8-6-4 4-45 0-7-3 0 34 1 0 6-2zm40-60l-10-1-1 5-2 5-3 5-6 4-7 4-11 5 1 2 10-3 9-4 6-3 4-4 3-4 2-4 2 4 3 4 3 4 5 3 7 4 7 2 2-3 4-2 0-1-9-2-8-3-5-3-5-3-3-3-2-4 0-1 4-3zm-12-16l-10-2-2 6-2 5-3 5-3 6-3 4-4 4 2 1 3-2 3-3 2-2 3-3 3-3 2-4 36 0-2 4-1 4-2 4 1 1 3-3 3-3 3-3 3-3 4 0-8-8-4 4-34 0 2-3 2-4 3-2z"/><path id="gdo" d="m84-68l-5 6-26 0 0-18 4-3-11-1 0 22-39 0 1 3 33 0-4 10-5 9-6 9-7 9-7 8-9 6 2 2 9-6 8-7 7-7 7-8 6-9 4-9 0 35-21 0 1 3 20 0 0 22 2 0 5-3 0-19 20 0 3-2-6-5-3-3-5 7-9 0 0-42 4 11 6 9 5 9 7 8 7 7 7 5 3-4 4-1 0-1-8-5-8-6-7-6-7-8-6-9-5-9 36 0 2-1-6-6-3-2z"/><path id="gdp" d="m35-84l-1 1 4 3 4 2 3 3 3 4 3 3 2 3 4 0 2-2-1-4-3-4-8-5-12-4zm-31 85l1 3 88 0 3-2-6-5-4-3-5 7-28 0 0-30 31 0 3-1-6-5-3-3-5 6-20 0 0-26 36 0 3-1-7-5-3-3-5 7-66 0 1 2 34 0 0 26-31 0 1 3 30 0 0 30z"/><path id="gdq" d="m38-82l-1 1 3 3 3 4 2 4 2 4 2 4 1 4 3 1 3-2 0-4-2-6-6-7-10-6zm47 9l-11-3-2 10-3 9-4 9-4 9-5 8-6 8-7-7-6-7-5-8-4-9-4-9-3-11-1 2 2 11 3 10 4 9 5 8 5 8 6 7-5 5-6 5-7 5-7 3-8 4-8 3 0 2 10-3 8-3 8-4 7-4 6-4 6-5 6 5 6 4 6 4 7 4 7 3 7 3 4-4 4-2 1-1-8-2-8-3-7-3-7-4-7-4-6-4 7-8 5-8 5-8 4-9 3-10 3-9 4-2z"/><path id="gdr" d="m35-45l-2 6-3 3-2 6 6 0 2-3 1-5 48 0-2 8 2 0 4-3 4-4 3-1-7-7-4 4-48 0-1-4zm2 16l1 3 6 0 2 4 2 4 2 3 2 3 3 3 2 2-4 3-4 3-5 2-5 2-6 2-6 1 1 2 6-1 7-2 5-2 6-2 5-2 4-3 4 3 4 2 5 2 5 2 5 2 6 1 2-4 4-2 0-1-6-1-5-1-5-1-5-2-5-1-4-2 3-3 3-2 3-3 2-3 2-4 2-3 4-1-7-7-4 4zm24 19l-3-2-3-2-2-3-2-3-3-3-1-3 27 0-2 4-2 3-3 3-3 3-3 3zm-21-56l0 3 38 0 0 10-41 0 1 3 40 0 0 4 2 0 5-3 0-25 4-2-8-6-3 4-41 0 1 3 40 0 0 9zm-15-18l-2 10-4 9-3 9-4 8-5 7-4 7 2 1 2-3 3-2 2-3 2-4 3-3 0 56 1 0 5-2 0-60 3-2-4-1 2-4 2-3 1-4 2-3 2-4 1-3 4-2z"/><path id="gds" d="m51-78l4 8 6 8 6 7 7 7 8 6 8 5 3-3 3-3 0-1-9-4-8-5-8-6-7-6-6-7-5-7 4-2-12-3-4 8-6 9-6 9-8 8-9 7-9 7 1 1 10-5 9-7 9-7 7-8 7-8 5-8zm6 23l-11-1 0 64 2 0 5-2 0-58 4-3z"/><path id="gdt" d="m62-68l-11-1 0 12 0 8-25 0 1 3 24 0-1 10-2 9-4 10-6 8-8 8-10 7 1 2 12-7 10-8 7-9 4-9 3-10 1-11 23 0 0 12-1 9-1 9-1 6-1 5-2 2-4 1-3 0-5 0-5-1 0 2 5 1 4 2 2 4 4 0 4-1 3-3 2-3 2-5 1-7 1-9 1-11 1-12 4-1-8-7-4 4-22 0 0-8 0-8 4-3zm25-13l-5 6-58 0-8-4 0 31-1 9 0 10-2 9-2 9-3 9-5 8 1 1 7-8 5-9 3-10 2-10 1-9 0-9 0-24 71 0 2-2-5-5-3-2z"/><path id="gdu" d="m47-83l0 17-25 0-7-3 0 41 1 0 6-3 0-6 25 0-1 4 0 4-1 4-1 3-2 4-2 3-3-3-3-3-2-3-3-3-2-4-1 1 1 4 2 3 2 3 2 3 2 3 3 2-4 4-4 3-5 3-6 3-7 3-8 2 1 2 8-2 8-2 6-3 6-3 5-3 4-4 6 5 7 3 8 3 8 2 9 2 10 2 2-4 4-2 0-2-10 0-9-2-9-1-9-3-7-3-7-3 3-4 1-3 2-4 1-5 1-4 0-5 26 0 0 7 1 0 6-2 0-30 4-2-8-6-4 4-24 0 0-14 3-2zm32 20l0 23-25 0 0-2 0-21zm-57 23l0-23 25 0 0 21 0 2z"/><path id="gdv" d="m38-22l-9-1 0 21 0 3 2 2 3 1 6 0 15 0 8 0 7 0 4 0 3-1 1-1 0-2-3-3 0-10-1 0-2 6-1 4-3 1-3 0-4 0-6 0-14 0-6-1 0-17 3-2zm4-47l-10-1 0 37 2 0 4-2 0-32 4-2zm-23 49l-1 0-1 5-2 4-2 3-3 3-2 2-2 5 3 1 3-2 3-1 2-3 1-3 1-4 1-4-1-6zm58-1l-2 1 3 3 3 3 2 3 3 4 1 4 1 3 4 1 2-2 0-3-2-6-6-5-9-6zm-31-5l-2 1 3 3 3 3 2 4 2 4 1 3 2 1 3-1 0-4-2-4-4-5-8-5zm41-50l-4 6-25 0 2-5 1-4 4-2-10-3-1 6-2 6-2 6-2 5-3 5-3 4 2 2 2-3 3-3 2-3 3-3 1 3 1 4 2 3 2 3 2 3 2 3-4 3-4 3-5 3-5 3-6 2-6 2 1 2 6-2 6-2 6-2 5-2 5-3 4-3 3 3 3 3 4 2 4 3 5 2 5 2 2-4 3-2 0-1-5-1-5-2-4-2-4-2-4-2-3-3 3-3 3-4 3-4 2-4 2-4 1-5 8 0 3-2-6-5-3-2zm-32 11l1-2 22 0-1 4-2 4-2 3-1 3-3 4-2 3-3-3-2-3-2-3-2-3-1-3-2-4zm-29 1l-3-1 2-3 2-3 2-4 2-3 4-2-10-4-3 8-3 7-4 7-4 7-4 5-4 5 1 2 4-3 3-3 3-3 3-4 0 33 1 0 5-2 0-37 3-2z"/><path id="gdw" d="m44-81l-11-3-3 11-3 10-5 10-5 9-6 8-5 6 1 1 5-4 5-5 5-6 5-6 4-6 3-8 25 0-4 15-6 14-8 13-10 11-13 9-15 8 1 2 15-6 12-7 10-9 8-10 7-10 5-12 1 10 3 10 4 10 5 9 8 8 9 7 2-4 5-2 0-1-11-7-9-7-6-9-5-9-3-9-2-10 2-4 1-4 1-5 4-1-7-7-5 4-22 0 1-4 2-4 1-4 4-2z"/><path id="gdx" d="m66-28l-1 1 5 4 4 4 5 5 4 5 3 5 2 4 4 1 2-2-1-5-4-7-9-7-14-8zm-28 4l-9-5-4 6-4 6-4 6-5 5-4 5-4 3 1 2 5-3 5-4 5-4 5-5 5-5 4-5 4-2zm11-56l-10-4-1 3-1 3-2 4-2 4-1 4-27 0 1 3 24 0-2 4-2 4-2 4-2 4-2 4-2 3-5 2 7 6 4-3 25 0 0 33-2 2-7 0-6-1 0 2 6 1 3 1 2 5 6-1 3-2 1-3 1-4 0-33 31 0 2-1-6-5-3-3-5 6-19 0 0-14 3-3-10-1 0 18-25 0 2-3 2-4 2-5 3-4 2-5 2-4 56 0 2-2-6-5-3-3-6 7-41 0 2-5 2-4 1-4 5-1z"/><path id="gdy" d="m41-85l-1 1 3 3 3 3 2 4 2 4 2 3 3 1 2-1 1-4-2-5-6-4-9-5zm45 15l-5 6-77 0 1 3 30 0 0 14-3 13-3 12-5 10-8 10-10 9 1 1 10-6 8-7 6-8 5-8 3-10 2-10 32 0-1 10-1 9-1 7-1 6-1 5-2 2-4 1-4 0-6 0-6-1 0 2 7 1 4 2 2 5 5-1 3-1 3-2 3-3 2-5 1-7 1-9 1-9 1-11 4-2-7-6-4 4-30 0 0-4 1-4 0-4 0-5 50 0 3-1-6-5-4-3z"/><path id="gdz" d="m45-84l0 5 0 5 0 5 0 5 0 5 0 5-40 0 1 3 38 0-2 11-3 10-5 10-7 9-10 9-13 8 1 2 15-8 12-9 8-10 6-10 3-11 2-11 2 10 3 11 5 10 7 10 10 10 12 8 3-4 4-2 0-1-13-7-11-8-8-9-5-9-4-10-3-9 40 0 3-2-7-5-3-3-6 7-28 0 0-4 0-5 0-4 1-4 0-4 0-5 3-2z"/><path id="gea" d="m65-82l-9-2 0 27-4 2-4 2-3 1-4 2-4 2-3 1 0 1 4 0 4-2 3-1 4-1 3-1 4-2 0 12 0 3 1 2 3 1 5 1 11 0 7 0 5-1 4 0 2-1 1-1 1-1-3-3-1-13-1 0-1 5-1 5-1 3-2 1-3 0-6 0-10 0-5-2 0-14 5-2 5-3 5-2 4-3 4-2 3-3 4 0-8-7-3 3-3 3-4 3-4 2-4 3-4 3 0-19 3-2zm23 55l-4 5-31 0 0-11 4-2-11-1 0 14-42 0 1 4 41 0 0 26 2 0 5-2 0-24 41 0 2-2-5-5-3-2zm-46-53l-10-4-3 6-4 6-4 6-5 7-6 6-5 5 1 2 3-2 3-3 3-2 3-2 3-3 2-2 0 29 1 0 6-2 0-31 3-2-3-1 3-4 3-4 2-4 4-1z"/><path id="geb" d="m17-84l-1 1 2 3 3 4 2 4 1 4 3 1 2-1 1-3-1-4-5-5-7-4zm21 14l-4 6-30 0 1 3 11 0 0 11 0 12-2 12-2 11-4 11-5 10 1 2 6-8 5-7 3-9 2-9 2-9 0-9 12 0-1 11 0 10-1 8-1 6-1 4-1 2-4 1-4 0-6-1 0 2 7 2 2 5 5-1 4-3 2-3 1-4 2-7 1-8 0-11 1-12 4-2-7-6-4 4-10 0 0-4 0-4 0-3 0-4 21 0 3-2-6-5-3-2zm50-3l-5 6-27 0 2-4 2-4 2-4 3-1-9-4-2 7-3 6-2 6-3 5-3 5-3 4 1 1 3-2 3-3 2-3 3-3 2-3 40 0 2-2-5-5-3-2zm1 38l-5 6-13 0 1-4 0-4 0-4 0-4 19 0 2-1-5-5-3-3-5 6-22 0 3-4 1-4 4-2-10-3-1 5-2 6-2 5-2 4-3 4-2 4 1 1 3-3 3-3 3-3 3-4 9 0 0 4-1 4 0 4 0 4-22 0 1 3 20 0-1 7-2 6-4 5-5 5-6 5-8 4 1 2 10-4 8-5 5-5 4-6 3-7 2-7 1 7 2 6 3 6 3 6 5 5 7 4 2-4 3-1 1-2-8-3-5-4-5-4-3-5-3-5-1-6 21 0 3-1-5-5-3-3z"/><path id="gec" d="m37-78l-1 0 3 4 3 5 3 5 2 6 2 5 2 5 3 1 3-2 0-5-3-7-6-9-11-8zm-9 1l-11-1 0 65-3 4 4 9 3-3 7-5 6-5 7-5 5-4 5-4 4-3-1-2-5 4-6 3-5 3-5 3-5 3-4 2 0-58 0-3 4-3zm59-2l-11-1-1 20-2 18-4 15-9 12-13 11-20 10 1 2 11-4 10-4 8-5 7-5 5-6 4-6 4 4 3 5 4 5 2 5 3 5 1 4 4 2 2-3 0-5-3-7-7-9-11-8 3-7 2-8 1-8 1-9 1-10 0-10 4-3z"/><path id="ged" d="m74-64l0 18-47 0 0-18zm-28-20l-1 4-1 5-1 4-1 4-15 0-7-3 0 78 1 0 6-3 0-4 47 0 0 7 1 0 6-3 0-68 4-2-8-6-4 4-28 0 3-3 2-3 2-4 2-3 3-2zm-19 41l47 0 0 19-47 0zm0 22l47 0 0 19-47 0z"/><path id="gee" d="m14-46l0 39 1 4 1 3 2 2 4 1 4 1 5 0 43 0 7 0 6 0 4-1 2-1 1-2 1-1-5-3 0-19-1 0-1 5-1 5-1 5-1 3-2 2-4 1-6 0-42 0-6 0-3-2-1-2 0-37 52 0 0 9 1 0 6-2 0-36 4-2-8-6-4 4-59 0 1 3 59 0 0 27-51 0-8-3z"/><path id="gef" d="m39-61l-18 0 0-8 18 0zm7 40l-4 5-9 0 0-9 19 0 2-1-4-4-3-2 5-2 0-14 4-1-7-5-3 3-13 0 0-7 6 0 0 3 2 0 5-2 0-12 13 0 3-2-5-4-3-3-4 6-4 0 0-8 3-3-10-1 0 12-18 0 0-8 4-3-10-1 0 12-12 0 1 3 11 0 0 15 1 0 5-2 0-2 6 0 0 7-11 0-8-3 0 23 1 0 5-2 0-2 13 0 0 7-22 0 1 3 21 0 0 9-20 0 1 2 19 0 0 9-5 1-4 0-5 0-3 1-3 0-3 0 4 8 2-2 9-1 9-2 7-2 7-1 6-2 6-1 0-2-21 2 0-8 17 0 3-1-5-4-2-2zm30-61l-10-2 0 5 0 4 0 4 0 4 0 4 0 4-13 0 1 3 12 0-1 12-1 12-2 11-4 10-5 9-7 8 1 2 9-9 7-9 4-10 3-11 1-12 1-13 13 0 0 15 0 13-1 10-1 8-1 5-2 3-3 2-5-1-6 0 0 1 4 2 4 1 1 5 4-1 3-1 3-2 2-4 2-6 1-8 1-11 0-14 1-16 4-2-8-6-4 4-12 0 0-21 4-2zm-49 34l0 10-13 0 0-10zm6 0l13 0 0 10-13 0zm0 13l13 0 0 3 1 0-4 4-10 0z"/><path id="geg" d="m32-73l-28 0 1 3 27 0 0 10 1 0 6-2 0-8 22 0 0 10 1 0 6-2 0-8 25 0 3-1-6-5-3-3-5 6-14 0 0-7 3-3-10-1 0 11-22 0 0-7 3-3-10-1zm23 26l-11-2 0 4-1 4 0 4-1 4-31 0 1 3 30 0-3 7-3 7-5 7-6 6-7 5-10 5 1 1 11-4 10-6 7-6 5-7 4-7 3-8 26 0-1 7-1 6-1 6-1 5-1 3-2 2-4 1-4 0-6-1-6 0 0 2 7 1 4 1 2 5 4-1 4-1 3-2 3-2 2-4 1-6 2-6 1-7 1-9 4-1-8-6-4 4-25 0 1-4 0-4 1-4 4-2zm-37-12l-2 0-1 4-1 4-3 3-2 2-3 5 3 2 4-1 3-2 2-4 1-6 64 0-2 4-1 4-2 3 1 1 3-3 4-2 3-3 2-2 4-2-8-7-4 4-65 0 0-4z"/><path id="geh" d="m18-84l-1 5-1 4-2 4-1 4-2 3-2 3 1 1 4-3 3-3 3-4 7 0 0 4 0 4 0 3-22 0 1 3 20 0-1 5-2 4-3 4-4 4-5 4-6 3 1 2 7-3 5-3 4-3 4-3 3-3 2-4 3 2 4 3 3 2 2 3 3 3 2 0 2-2 0-3-3-3-6-4-10-3 2-5 19 0 2-1-5-5-3-2-4 5-9 0 1-3 0-4 0-4 16 0 2-2-5-5-3-2-4 6-18 0 2-6 4-2zm54 70l0 13-43 0 0-13zm0-3l-43 0 0-11 43 0zm-15-57l0 38 1 0 5-2 0-6 21 0 0 6 1 0 5-2 0-30 5-2-9-6-3 4-19 0-7-3zm27 27l-21 0 0-24 21 0zm-61 16l0 39 1 0 5-2 0-4 43 0 0 5 1 0 5-2 0-32 4-2-8-6-3 4-41 0-7-4z"/><path id="gei" d="m38-16l-10-1 0 16 1 3 1 2 4 1 5 0 15 0 9 0 6 0 4-1 3-1 1-1 0-1-3-3 0-10-1 0-2 6-1 4-3 1-2 0-5 0-6 0-14 0-5-1 0-12 3-2zm-20 1l-2 0-1 4-2 4-3 4-3 2-2 5 6 0 3-2 2-3 1-4 1-5 0-5zm60 0l-1 1 3 3 3 3 2 3 2 4 1 3 3 1 2-2 1-3-2-4-5-5-9-4zm-33-3l-1 1 3 3 3 3 2 3 1 4 3 0 2-1 0-3-2-3-4-4-7-3zm-4-62l-4 5-5 0 0-5 3-3-10-1 0 9-18 0 1 3 17 0 0 6-16 0 1 4 15 0 0 6-19 0 1 3 18 0 0 7 1 0 6-2 0-5 16 0 2-1-5-5-3-2-4 5-6 0 0-6 13 0 2-2-4-4-3-2-3 4-5 0 0-6 14 0 3-2-5-4-3-2zm44 0l-4 5-9 0 0-5 3-3-10-1 0 9-15 0 1 3 14 0 0 6-13 0 1 4 12 0 0 6-15 0 1 3 14 0 0 6 1 0 6-2 0-4 20 0 2-1-5-5-2-2-4 5-11 0 0-6 16 0 3-2-5-4-2-2-4 4-8 0 0-6 18 0 3-2-5-4-3-2zm-9 56l-63 0 1 3 62 0 0 5 1 0 5-3 0-21 4-2-8-6-3 4-61 0 1 3 61 0 0 7-59 0 1 3 58 0z"/><path id="gej" d="m77-59l-9-5-2 3-2 4-2 4-2 4-2 3 1 1 3-2 3-3 3-3 3-3 2-2 4-1zm-51-5l-1 1 2 3 3 3 2 4 2 3 1 4 3 1 2-2 0-3-1-4-5-5-8-5zm27-5l-14 0 2-2 0-2-1-3-2-3-5-3-7-2-1 1 3 3 3 3 3 4 1 3 1 1-15 0-7-3 0 40 1 0 5-2 0-5 60 0 0 5 1 0 6-2 0-30 3-1-7-6-3 4-19 0 4-3 4-4 3-2 4-2-10-4-2 3-2 4-2 4-2 4zm-33 3l27 0 0 24-27 0zm60 0l0 24-27 0 0-24zm-10 39l0 11-40 0 0-11zm-40 33l0-4 40 0 0 5 1 0 6-2 0-31 4-2-8-6-4 4-38 0-7-4 0 42 1 0 5-2zm0-19l40 0 0 12-40 0z"/><path id="gek" d="m47-59l0 13-22 0 0-13zm0-3l-22 0 0-13 22 0zm6 3l23 0 0 13-23 0zm0-3l0-13 23 0 0 13zm7 30l0 40 2 0 5-2 0-35 2-1 3 3 4 2 3 2 4 1 4 2 4 1 2-3 3-2 0-1-7-2-7-2-6-3-7-3-5-4-5-4 17 0 0 5 1 0 5-2 0-34 5-2-9-6-3 4-50 0-7-3 0 44 1 0 6-3 0-3 12 0-4 5-4 5-6 4-5 4-7 3-7 3 1 2 5-2 6-2 4-2 5-2 4-3 4-2 0 9 0 5-1 5-3 5-5 5-7 4-9 3 1 2 11-3 9-5 5-4 4-6 1-5 1-6 0-7 3-3-8-1 3-2 3-3 2-3 3-3 11 0 2 4 2 2 3 3 3 3z"/><path id="gel" d="m4 0l1 3 88 0 3-2-6-5-4-3-5 7-31 0 0-44 35 0 3-1-6-5-3-3-6 7-23 0 0-33 4-3-10-1 0 83z"/><path id="gem" d="m20-59l-1 1 2 3 2 3 2 4 1 4 2 1 2-1 2-3-1-3-4-5-7-4zm54 9l-9-2 0 15-1 12-3 10-5 8-8 7-12 6 1 2 14-6 9-6 6-8 3-10 1-12 1-14 3-2zm-4 35l-1 1 4 3 4 3 4 4 4 4 3 3 2 4 3 1 2-3 0-4-4-5-8-6-13-5zm-42-65l4-2-10-3-2 7-3 8-3 7-3 8-4 7-4 6 1 1 5-5 4-6 4-6 4-7 3-6 3-7 3 4 2 3 2 4 3 4 1 3 1 4 3 1 2-2 0-4-2-5-5-7-9-7zm-16 57l-2 1 4 4 4 4 3 4 3 4 3 5 1 4 3 1 2-1 1-3-1-3-2-5-5-6 2-3 3-3 3-3 2-4 2-3 2-3 4-1-7-7-4 4-27 0 1 3 26 0-2 4-1 3-2 4-2 4-2 4-3-2-2-2-4-2-3-2zm76-59l-4 6-43 0 1 3 21 0-1 5 0 5-1 5-8 0-7-4 0 48 2 0 5-2 0-40 30 0 0 41 1 0 5-2 0-38 4-1-8-6-3 4-18 0 2-4 2-3 1-4 1-4 25 0 2-2-5-5-4-2z"/><path id="gen" d="m26-81l-2 7-2 7-3 6-2 6-3 5-4 5 2 1 2-3 3-2 2-3 3-3 2-3 2-3 20 0 0 20-42 0 1 3 29 0-1 10-2 9-4 8-6 6-7 6-10 6 0 1 12-4 9-6 7-7 5-8 3-10 2-11 15 0 0 37 0 3 2 2 3 1 5 1 10 0 7 0 5-1 4 0 2-1 1-1 0-2-2-3-1-16-1 0-1 5-1 5-1 3 0 3-2 1-4 0-5 1-10 0-4-3 0-35 29 0 3-2-7-5-3-2-5 6-28 0 0-20 31 0 3-2-6-5-3-2-5 6-20 0 0-15 4-3-11-1 0 19-19 0 2-4 2-4 1-4 4-2z"/><path id="geo" d="m19-35l0 43 1 0 6-3 0-6 48 0 0 9 1 0 6-3 0-35 5-3-9-6-4 4-20 0 0-23 40 0 3-2-7-5-3-3-5 7-28 0 0-19 4-3-11-1 0 23-41 0 1 3 40 0 0 23-20 0-7-3zm55 3l0 28-48 0 0-28z"/><path id="gep" d="m84-74l0 20-26 0 0-20zm-32-3l0 32-1 10-1 9-2 9-4 9-6 8-8 7 2 1 7-5 6-5 4-6 4-7 2-6 2-7 27 0 0 25-3 3-8-1-7 0 0 1 6 1 4 2 3 5 5-1 3-2 2-2 1-2 0-3 0-71 4-2-8-7-3 5-24 0-7-4zm32 25l0 21-27 0 1-4 0-3 0-4 0-4 0-6zm-70-21l19 0 0 23-19 0zm-6-3l0 67 1 0 5-3 0-9 19 0 0 8 1 0 5-3 0-56 5-2-8-6-4 4-16 0-8-3zm6 28l19 0 0 24-19 0z"/><path id="geq" d="m49-46l-1 2 3 3 2 3 2 4 2 4 1 3 1 3 3 1 2-1 1-5-2-5-5-6-9-6zm39-19l-5 6-3 0 0-21 4-2-10-1 0 24-30 0 1 3 29 0 0 53-3 2-8 0-7 0 0 1 7 1 3 2 3 5 5-1 3-2 2-2 1-2 0-3 0-54 13 0 3-2-5-5-3-2zm-77 7l-1 1 3 3 3 4 3 4 3 3 3 4 2 4-3 7-4 7-3 7-5 6-4 6-5 5 1 1 6-4 5-6 4-5 5-6 3-5 4-6 2 4 2 4 1 4 1 3 1 3 3 4 2 1 2-3 0-4-2-8-2-3-2-4-2-4-3-4 2-5 2-6 2-5 2-6 1-5 1-6 4-1-7-7-4 4-32 0 1 4 31 0-1 4-1 5-1 5-1 4-2 5-2 5-2-3-3-3-3-3-3-3-3-3-4-3z"/><path id="ger" d="m20-80l-1 1 3 2 3 3 3 4 2 3 2 3 3 1 2-2 0-3-3-4-5-4-9-4zm65 13l-4 6-19 0 3-3 4-3 3-3 4-3 2-3 4-1-8-5-3 4-2 3-3 4-2 3-3 4-3 3-5 0 0-19 3-3-10-1 0 23-40 0 1 3 33 0-5 4-5 5-6 5-6 4-6 3-7 4 1 1 8-2 7-4 8-4 6-4 6-5 5-5 0 20 2 0 5-2 0-16 5 3 6 3 6 3 5 4 5 3 3 3 4 0 1-2-2-4-6-5-11-6-16-4 0-2 38 0 3-2-6-5-3-2zm2 37l-5 6-31 0 1-6 3-3-10-1 0 5-1 5-40 0 1 3 38 0-2 6-3 5-5 4-8 4-9 4-12 4 1 2 14-4 12-4 8-4 5-5 4-6 2-6 1 0 4 8 5 6 6 5 7 4 9 3 9 3 2-4 3-2 1-1-10-2-9-2-7-3-7-4-6-5-4-6 39 0 3-1-6-5-3-3z"/><path id="ges" d="m52-84l-3 9-3 8-4 8-4 7-4 7-4 6 1 1 3-3 4-3 3-4 3-4 3-4 3-5 7 0 0 69 1 0 6-2 0-24 27 0 3-2-6-5-3-3-4 6-17 0 0-18 26 0 2-2-5-4-3-3-5 6-15 0 0-18 30 0 3-1-6-5-3-3-5 6-32 0 2-3 2-4 2-3 1-4 4-2zm-24 0l-3 10-4 9-4 9-4 9-5 7-5 7 2 1 2-3 3-3 3-3 3-4 2-3 0 56 2 0 5-2 0-59 3-1-4-2 2-4 2-3 2-4 1-4 2-3 2-4 3-2z"/><path id="get" d="m92-33l-10-1 0 30-29 0 0-39 24 0 0 5 1 0 5-2 0-31 4-2-10-1 0 28-24 0 0-33 3-3-10-1 0 37-23 0 0-25 4-3-10-1 0 29-3 2 7 5 3-4 22 0 0 39-28 0 0-27 4-3-10-1 0 31-3 2 7 5 3-4 63 0 0 8 1 0 5-2 0-35 4-3z"/><path id="geu" d="m41-50l-1 1 3 3 2 4 2 4 2 3 1 4 1 3 3 1 2-2 0-4-1-5-5-6-9-6zm-31-32l-1 1 3 3 2 3 3 4 2 3 2 4 1 3 3 1 2-1 0-4-2-5-5-6-10-6zm78 14l-4 6-7 0 0-17 4-3-11-1 0 21-37 0 1 3 36 0 0 43-2 2-9 0-6-1 0 2 6 1 4 2 3 4 5-1 3-1 2-2 1-3 0-3 0-43 16 0 3-1-5-6-3-2zm-69 55l-3 2-3 3-3 2-4 3-3 2 6 8 0-2 3-4 4-5 3-4 3-3 3 0 5 6 5 4 5 3 6 2 8 1 8 0 6 0 5 0 4 0 5 0 5 0 4 0 2-4 3-2 0-1-5 0-6 0-5 0-5 0-5 0-6 0-8 0-8 0-6-2-6-2-5-3-5-5 0-32 4-2-8-8-4 6-14 0 0 3 15 0z"/><path id="gev" d="m17-52l0 34 1 0 6-3 0-2 22 0 0 10-34 0 1 3 33 0 0 12-42 0 1 2 88 0 3-1-6-5-3-3-5 7-29 0 0-12 34 0 2-1-5-5-3-2-5 5-23 0 0-10 23 0 0 4 6-2 0-27 4-2-8-6-3 4-22 0 0-10 39 0 3-1-6-5-3-2-5 6-28 0 0-10 5-1 4 0 5-1 4 0 4-1 4-1 5 1-7-7-8 2-10 2-11 2-12 2-12 1-12 1 1 2 5 0 6 0 6 0 5-1 6 0 5-1 0 10-40 0 1 2 39 0 0 10-21 0-8-3zm29 26l-22 0 0-10 22 0zm7 0l0-10 23 0 0 10zm-7-13l-22 0 0-10 22 0zm7 0l0-10 23 0 0 10z"/><path id="gew" d="m52-9l-1 1 8 2 7 3 6 2 6 3 4 2 4 3 4 1 3-2-1-3-6-4-12-5-22-3zm5-27l-11-2 0 11-2 10-4 7-7 7-11 5-17 4 1 2 19-4 12-5 8-6 5-7 2-9 1-11 4-2zm-31 26l0-32 48 0 0 31 1 0 6-2 0-28 4-2-8-6-4 4-47 0-7-3 0 40 1 0 6-2zm52-72l-5 5-59 0 1 3 32 0 0 16-42 0 1 3 87 0 3-2-6-4-3-3-4 6-30 0 0-16 31 0 2-2-5-4-3-2z"/><path id="gex" d="m20-51l-2 0 2 4 2 5 0 4 3 2 2-2 0-3-2-5-5-5zm60-27l-1 1 2 3 3 3 2 4 1 3 3 2 2-2 1-3-2-3-4-4-7-4zm-12-5l0 5 0 5 0 5 0 5 0 4 0 5-13 0-7-5-3 3-13 0 0-10 22 0 2-2-5-5-3-2-5 6-11 0 0-11 4-3-10-1 0 15-21 0 0 3 21 0 0 10-11 0-7-3 0 66 1 0 5-2 0-58 32 0 0 50-2 1-6 0 0 2 5 1 1 4 5-1 2-3 1-4 0-49 3-1 0 2 13 0-1 11-1 11-2 9-4 10-4 8-7 8 2 2 7-8 6-8 4-8 3-10 2-10 1-10 1 11 2 10 2 10 3 9 4 7 5 7 3-3 3-1 1-1-6-6-5-8-4-8-3-10-3-11-1-11 18 0 2-2-5-4-3-3-4 6-9 0 0-4 0-4 0-4 0-5 0-4 0-4 3-3zm-34 32l-1 3-1 5-1 4-1 4-14 0 1 3 9 0 0 12-10 0 1 2 9 0 0 20 1 0 5-1 0-19 10 0 2-1-5-6-3 5-4 0 0-12 10 0 2-2-5-5-3 4-4 0 3-4 2-4 2-4 3-2z"/><path id="gey" d="m29-1l1 3 64 0 3-1-6-5-3-3-5 6zm50-71l0 24-33 0 0-24zm-39-2l0 64 1 0 5-2 0-6 33 0 0 6 1 0 6-2 0-56 4-2-8-7-4 5-31 0-7-4zm6 53l0-24 33 0 0 24zm-20-63l-3 10-4 9-3 9-4 9-4 7-4 7 1 1 2-3 3-3 2-3 3-3 2-4 0 56 1 0 6-2 0-60 3-2-4-1 1-4 2-3 2-4 1-3 2-4 1-4 4-2z"/><path id="gez" d="m88-73l-11-5-2 5-2 5-2 5-3 4-2 4-2 4 1 1 3-3 3-4 4-3 3-4 3-4 3-4 4-1zm-73-4l-1 1 3 3 3 4 3 4 2 4 2 4 2 5 3 1 2-2 1-5-3-6-6-6-11-7zm42-6l-10-1 0 37-37 0 1 3 67 0 0 19-63 0 1 3 62 0 0 20-69 0 1 3 68 0 0 7 1 0 5-3 0-48 5-2-8-6-4 4-24 0 0-33 4-3z"/><path id="gfa" d="m57-41l-10-1 0 31 1 0 6-2 0-25 3-3zm30 8l-9-5-10 13-10 11-11 8-13 5-13 4-15 3 0 2 16-2 14-3 13-5 12-7 11-10 11-13 4-1zm-50-2l-9-5-2 5-3 4-4 5-4 5-4 4-5 3 1 2 6-3 5-4 4-3 5-4 4-4 3-4 3-1zm50-19l-5 6-29 0 0-16 30 0 3-1-6-5-4-3-4 6-19 0 0-13 4-3-10-1 0 36-18 0 0-24 3-3-9-1 0 28-19 0 1 3 88 0 3-1-6-5-3-3z"/><path id="gfb" d="m45-45l-1 1 3 3 2 4 3 4 1 4 2 5 0 4 4 1 2-2 1-4-2-6-5-7-10-7zm-15 28l-16 0 0-26 16 0zm-22-61l0 78 1 0 5-2 0-12 16 0 0 9 1 0 5-2 0-64 4-1-8-7-3 4-13 0zm22 32l-16 0 0-26 16 0zm58-20l-4 7-5 0 0-20 4-3-10-1 0 24-35 0 1 3 34 0 0 53-3 3-5-1-7 0-4 0 0 1 5 1 3 1 3 1 2 5 6-1 3-2 2-2 1-2 0-3 0-54 15 0 3-2-5-5-4-3z"/><path id="gfc" d="m46-70l-4 6-9 0 0-15 3-3-10-1 0 19-20 0 1 3 19 0 0 18-22 0 1 3 21 0-2 5-3 4-3 5-3 5-4 4-3 4-3 1 4 9 3-2 6-2 6-1 6-2 5-1 5-2 5-1 1 4 1 4 1 3 3 2 2-2 1-5-2-6-5-8-10-7-1 1 3 3 2 4 3 5-6 1-6 0-6 1-5 1-5 0-4 1 3-4 4-3 4-4 3-4 4-4 2-4 4-2-8-3 27 0 3-1-6-5-3-3-5 6-11 0 0-18 19 0 3-2-6-5-3-2zm13-8l0 86 1 0 5-2 0-77 20 0 0 52-2 2-6-1-5 0 0 2 5 1 3 1 2 5 5-1 3-2 1-3 0-3 0-52 5-2-9-6-3 4-18 0z"/><path id="gfd" d="m4-73l1 3 27 0 0 10 1 0 6-2 0-8 22 0 0 10 1 0 5-2 0-8 26 0 3-1-6-5-3-3-5 6-15 0 0-7 4-3-10-1 0 11-22 0 0-7 3-3-10-1 0 11zm7 57l-5 0 0 2 5 1 1 2 1 3 0 5 0 6 3 5 4-2 1-4 0-5-1-3-1-4 0-2 0-4 2-4 1-3 3-5 3-7 3-7 3-6 3-6-1-1-9 14-6 10-3 6-2 4-1 1-1 2-3 2zm1-46l-1 1 3 3 3 3 3 3 2 3 3 1 2-2 0-2-2-4-5-3-8-3zm-7 15l-1 1 3 2 3 4 3 3 1 3 3 0 2-1 1-3-2-3-5-3-8-3zm46-16l-2 5-3 5-3 6-4 5-4 4-4 4 1 1 3-2 3-2 3-2 3-3 2-3 3-3 2 4 3 3 2 3 3 3-5 4-5 3-5 4-6 3-6 2-7 3 1 1 5-1 4-1 4-2 3-1 0 28 1 0 6-2 0-4 26 0 0 5 1 0 5-2 0-22 4-2-3-2 5 2 5 1 2-3 3-2 0-1-5-1-5-2-5-1-5-2-5-2-5-3 3-2 3-2 3-3 2-3 2-2 2-3 5-2-7-6-5 4-21 0 3-6 3-1zm24 62l-26 0 0-17 26 0zm-1-20l-24 0-3-1 4-2 3-2 3-1 3-2 3-3 3 3 4 2 3 2 3 2zm0-30l-2 3-2 2-2 3-3 3-3 2-3-2-3-3-3-3-3-3 2-2z"/><path id="gfe" d="m33-43l1 3 16 0-1 8-1 7-1 7-2 6-1 7-1 5-15 0 0 3 67 0 2-1-4-5-3-3-4 6-4 0 0-38 4-2-8-7-3 4-18 0 1-5 1-4 1-5 0-4 1-5 1-4 28 0 3-1-6-5-3-3-5 6-46 0 1 3 21 0-1 4 0 4-1 5-1 5 0 4-1 5zm17 43l1-5 1-7 1-6 1-7 2-7 1-8 19 0 0 40zm-24-84l-3 10-3 9-4 9-4 9-4 7-5 7 2 1 2-3 3-3 2-3 3-3 2-4 0 56 1 0 6-2 0-61 3-2-4-1 2-3 1-4 2-3 1-3 2-4 1-4 4-1z"/><path id="gff" d="m8 0l35 0 0-3-13-1 0-19 0-34 0-16-2-1-21 6 0 3 14-3 0 45 0 19-13 1z"/><path id="gfg" d="m15 0l8 0 26-68 0-5-43 0 0 7 38 0-29 65z"/><path id="gfh" d="m62-82l0 34-26 0 1 3 25 0 0 53 1 0 5-3 0-50 27 0 3-2-6-5-3-2-5 6-16 0 0-30 4-3zm-32 14l0 42-16 0 0-42zm-22-3l0 62 1 0 5-3 0-12 16 0 0 10 1 0 5-2 0-50 4-2-8-7-3 4-15 0-6-3z"/><path id="gfi" d="m58-53l0 25 0 3 2 2 5 1 7 0 6 0 4 0 0 18-64 0 0-49 18 0 0 7-1 7-2 6-3 6-5 6-6 6 1 1 8-5 6-6 4-7 3-7 1-7 0-7zm0-3l-16 0 0-17 16 0zm24 28l-2 0-2 0-6 0-5 0-3-2 0-23 18 0zm5-54l-5 6-78 0 1 3 31 0 0 17-16 0-8-3 0 66 1 0 5-3 0-5 64 0 0 7 1 0 5-2 0-56 4-2-7-6-3 4-18 0 0-17 30 0 2-1-6-5-3-3z"/><path id="gfj" d="m19-23l1 3 61 0 3-2-6-4-3-3-5 6zm-13 25l1 3 85 0 2-2-6-5-3-2-5 6zm7-74l0 35-9 2 4 8 2-2 9-3 9-2 7-2 7-2 6-2 6-2-1-2-17 4 0-20 15 0 3-2-5-5-3-2-4 6-6 0 0-17 4-3-10-1 0 45-11 1 0-30 3-3zm71-1l-3 2-3 2-4 2-3 3-4 2-5 2 0-20 4-3-10-1 0 44 0 3 2 2 3 1 5 1 10 0 7 0 5-1 4 0 2-1 1-1 0-1-3-3 0-13-1 0-1 6-1 4-1 2-2 2-3 0-6 0-10 0-5-3 0-16 5-1 5-1 4-2 4-2 4-1 3-2 5 0z"/><path id="gfk" d="m43-84l-1 1 3 3 3 4 2 4 3 1 2-2 1-3-1-3-4-3-8-2zm-27 9l-1 0-1 4-1 4-2 4-3 2-3 5 3 2 4-2 3-2 2-4 1-6 66 0-1 5-2 5 1 1 4-3 3-3 3-4 3-1-7-7-4 4-66 0-2-4zm58 13l-4 6-52 0 1 3 23 0-4 3-5 4-6 4-5 3-6 3-7 3 1 1 5-1 6-2 5-2 5-2 4-3 5-2 4 4-5 5-6 4-6 5-6 3-6 4-7 3 1 2 7-3 7-3 6-3 7-3 6-4 5-3 2 5-5 6-6 6-8 5-8 5-8 4-8 4 1 1 8-2 8-3 8-4 7-4 7-5 6-4 1 5 0 4-1 4-1 3-1 2-3 1-4 0-5 0-5 0 0 1 5 1 4 2 2 4 5 0 3-2 3-2 2-3 2-5 0-5 0-7-1-7-3-6 6-2 3 7 4 7 5 5 5 5 6 5 7 4 2-4 4-2 0-1-7-3-7-3-6-4-6-5-4-6-4-6 4-2 5-1 3-2 4-2 3-2 3-2 4 0-8-6-4 3-3 3-5 3-5 3-5 3-5 3-1-3-2-3-3-3-2-3-3-2 3-3 4-3 3-2 28 0 3-2-6-5-3-2z"/><path id="gfl" d="m12-62l-2 0 0 5-1 5-1 4-1 4-1 2-2 4 2 2 4-2 1-2 2-3 0-4 0-5 0-5-1-5zm35 9l0-2 32 0 0 3 1 0 6-2 0-21 4-2-8-6-4 4-31 0-6-3 0 31 1 0 5-2zm32-23l0 8-32 0 0-8zm0 18l-32 0 0-8 32 0zm-45 54l5 7 1-3 4-2 4-2 3-1 3-2 3-2 3-1 0 9-2 1-7 0 0 2 5 1 1 5 6-2 2-3 0-4 0-9 4 2 4 2 4 2 4 3 3 2 3 2 2 0 1-2-1-3-3-3-6-3-10-3 4-3 4-3 4-1 3 3 4 2 3 2 5-5-4-2-4-1-3-2-4-2-3-3-2-3 17 0 3-1-5-5-3-2-5 5-8 0 0-10 11 0 3-2-5-4-2-2-4 5-3 0 0-4 3-3-9-1 0 8-15 0 0-4 3-3-9-1 0 8-12 0 1 3 11 0 0 10-17 0 1 3 13 0-2 4-3 4-4 3-3 4-4 3-4 3 1 1 3-2 4-2 3-2 3-2 3-2 3-3 3 4 3 4 3 1 1-3-2-3-7-4 4-4 3-4 20 0 2 4 3 4 3 3-7-4-3 4-2 4-3 3-2-1 0-12 4-2-9-1 0 15-6 2-5 1-5 2-4 2-3 1-3 0zm21-28l0-10 15 0 0 10zm-27-50l-10-1 0 21 0 18-1 16-2 13-5 12-7 9 2 2 5-5 4-5 3-6 3-7 2-7 1-8 3 4 2 5 1 4 2 1 2-1 1-3-1-4-3-4-7-5 0-3 1-4 0-4 0-4 3-3 4-3 2-4 3-2 3-2-8-4-1 3-2 3-2 4-2 4 0-4 0-4 0-5 0-5 0-4 0-6 4-2z"/><path id="gfm" d="m66-78l2 6 4 6 4 6 5 5 5 5 5 4 5-5 1-1-6-3-6-4-5-5-5-5-4-5-4-6 4-1-11-3-2 7-4 7-5 7-5 7-6 6-6 5 1 1 7-4 6-5 6-6 6-6 4-7 4-6zm-8 29l-10-1 0 17 0 7-1 7-2 7-3 7-5 6-7 6 1 1 9-5 6-6 5-7 2-8 2-7 0-7 0-14 3-3zm24 0l-10-1 0 58 2 0 5-2 0-52 3-3zm-73-32l0 89 1 0 5-3 0-80 15 0-1 4-2 5-1 5-2 4-1 5-1 3 3 4 3 4 2 3 1 4 1 4 0 3-1 5-2 2-2 1-8 0 0 2 5 1 1 5 5 0 3-1 3-2 1-3 1-4 1-4-1-4-1-4-2-4-2-4-4-4-5-4 2-4 3-4 2-4 3-5 2-4 1-3 5-1-8-8-4 4-14 0z"/><path id="gfn" d="m4-7l4 9 2-3 6-3 5-2 5-3 4-2 4-3 4-2-1-1-7 2-6 2-6 2-6 2-5 1-3 1zm63-43l-3 1 6 5 3-2 11 0-1 5-2 5-2 5-2 5-3 4-3 4-4-6-3-6-4-7-2-8-2-7-2-8 0-15 23 0-1 4-2 4-1 5-2 4-2 4-2 4zm-36-29l-10-4-1 4-3 5-2 5-3 5-3 5-3 3-3 1 4 9 2-1 4-1 4-2 4-1 4-1-3 4-3 4-3 4-3 4-3 3-3 3-3 1 3 9 3-2 6-2 5-2 6-2 4-1 4-1 4-2-1-1-5 1-5 0-4 1-5 1-4 0-4 0 5-4 6-5 5-6 4-5 4-5 3-5 4-1-9-5-1 3-3 4-2 4-18 1 3-4 4-4 3-4 3-4 3-4 2-3 4-2zm53 5l4-1-8-6-3 3-40 0 1 3 10 0 0 16-1 15-2 14-3 13-6 12-8 11 1 2 8-8 6-8 5-10 3-10 2-10 1-12 1 8 2 6 2 7 2 6 3 5 3 5-3 4-4 4-4 3-5 3-4 3-6 2 1 2 6-2 5-3 5-2 5-3 4-3 3-4 3 4 3 3 4 2 3 3 4 2 4 2 3-3 3-2 0-1-4-2-4-2-4-2-4-3-3-2-3-4 3-4 4-5 2-6 3-5 2-6 2-6 4-1-7-6-4 4-10 0 1-4 2-5 2-4 2-4 1-4 2-4z"/><path id="gfo" d="m19-46l0 26 1 0 5-2 0-4 21 0 0 12-42 0 1 3 41 0 0 19 2 0 5-2 0-17 41 0 2-1-6-5-3-3-5 6-29 0 0-12 21 0 0 5 1 0 6-2 0-19 4-2-8-6-4 4-20 0 0-11 9 0 0 5 2 0 5-2 0-16 22 0 3-1-6-5-3-2-5 6-11 0 0-8 3-3-10-1 0 12-25 0 0-8 4-3-10-1 0 12-25 0 1 2 24 0 0 19 1 0 5-2 0-4 9 0 0 11-20 0-7-4zm18-24l25 0 0 10-25 0zm9 26l0 15-21 0 0-15zm7 0l21 0 0 15-21 0z"/><path id="gfp" d="m28-54l1 3 39 0 3-2-5-5-3-2-5 6zm24-25l4 7 6 6 6 5 8 6 7 4 8 4 2-3 4-2 0-2-8-3-9-4-7-4-8-5-6-5-5-5 4-2-12-2-4 6-6 8-7 7-8 7-9 6-9 5 1 1 9-4 10-5 9-6 8-7 6-6 6-7zm-37 39l0 41 1 0 6-2 0-9 17 0 0 8 1 0 5-3 0-31 4-2-8-5-3 3-16 0-7-3zm24 27l-17 0 0-24 17 0zm16-27l0 48 1 0 5-3 0-42 19 0 0 26-2 2-10 0 0 1 4 1 3 1 1 5 6-1 2-2 2-3 0-3 0-26 4-2-8-6-3 4-17 0-7-3z"/><path id="gfq" d="m26-83l-2 0 4 4 3 3 2 4 2 4 1 4 4 1 2-1 0-4-2-5-5-5-9-5zm41-1l-1 3-2 4-1 4-2 4-2 4-2 3-49 0 1 3 22 0 0 22 0 2-27 0 1 3 25 0 0 7-2 7-3 7-5 6-7 6-9 6 1 1 12-5 8-6 6-7 3-7 2-7 1-8 25 0 0 40 1 0 6-2 0-38 24 0 3-2-6-5-3-2-5 6-13 0 0-24 21 0 3-1-6-5-3-3-5 6-19 0 2-3 3-3 3-3 2-3 2-2 2-3 4-2zm-5 49l-25 0 0-2 0-22 25 0z"/><path id="gfr" d="m54-50l30 0 0 21-30 0zm0-3l0-20 30 0 0 20zm0 27l30 0 0 21-30 0zm-7-50l0 83 1 0 6-3 0-6 30 0 0 9 1 0 5-3 0-76 5-2-8-6-4 4-29 0-7-3zm-25-8l0 24-17 0 1 3 14 0-2 7-2 8-3 7-3 7-3 6-4 6 1 2 4-4 3-4 3-5 3-4 2-5 3-5 0 49 1 0 5-3 0-51 3 3 3 4 3 4 1 4 3 1 2-1 1-3-2-5-5-5-9-4 0-9 14 0 2-2-5-5-3-2-4 6-4 0 0-20 4-3z"/><path id="gfs" d="m4-7l4 8 2-2 6-3 5-2 4-3 5-2 3-2 3-2 0-1-6 2-7 1-5 2-6 2-4 1-4 1zm88-63l-9-4-1 3-1 4-1 4-2 5-1 4-1 4 1 0 3-4 2-4 3-4 2-4 2-3 3-1zm-40-3l-2 1 2 3 2 5 1 4 1 4 1 5 2 1 2-1 1-4-1-5-3-6-6-7zm-22-6l-10-4-2 4-2 5-2 6-3 5-3 5-2 3-3 1 4 9 2-2 4-1 4-1 4-1-2 4-3 4-2 3-2 3-3 3-2 3-3 1 4 9 2-2 5-2 5-2 4-1 4-1 4-2 3-1-1-1-4 0-4 1-5 1-4 0-3 0-3 1 4-5 5-5 4-5 4-5 3-5 3-5 4-1-9-5-2 3-2 5-2 4-5 0-5 0-4 0 3-4 3-4 3-4 3-4 3-5 2-3 4-2zm58 73l-5 6-37 0 0-77 4-3-10-1 0 81-3 2 7 5 3-4 47 0 2-1-5-5-3-3zm-4-45l-4 6-7 0 0-33 3-3-9-1 0 37-18 0 1 3 12 0-1 5-2 6-3 6-2 5-3 5-3 5 1 2 3-4 4-4 3-5 3-4 2-5 3-5 0 32 1 0 5-2 0-31 2 4 2 3 3 4 2 4 1 3 1 4 3 1 2-2 1-4-3-6-5-6-9-7 0-4 16 0 3-2-5-5-3-2z"/><path id="gft" d="m44-84l-1 1 2 3 3 3 1 3 1 4 4 1 2-1 1-3-1-4-4-4-8-3zm26 27l-5 5-43 0 0 3 54 0 2-1-5-5-3-2zm-53-16l-2 0 0 4-2 5-2 3-3 2-3 6 3 2 5-1 2-3 2-4 1-6 66 0-2 4-2 4-1 4 1 0 3-2 3-3 3-3 3-3 4-1-8-7-4 4-66 0-1-5zm67 32l-5 6-71 0 1 3 25 0-1 7-1 7-4 7-5 6-8 6-11 5 1 2 13-5 10-5 6-7 4-7 3-8 1-8 14 0 0 30 0 4 2 2 3 1 5 0 11 0 7 0 6 0 3-1 2-1 1-1 1-1-3-3 0-14-2 0-1 6-1 5-1 2-2 2-3 0-7 0-10 0-4-2 0-29 27 0 3-2-6-4-3-3z"/><path id="gfu" d="m4-3l1 3 89 0 2-2-6-5-3-3-6 7-28 0 0-63 34 0 3-2-7-5-3-3-5 7-64 0 1 3 34 0 0 63z"/><path id="gfv" d="m12-61l-2 0 4 6 3 7 3 8 2 7 2 8 1 7 3 1 3-3 0-7-3-9-6-12-10-13zm76 53l-5 7-17 0 0-16 4-6 5-7 4-7 4-7 3-6 3-6 4-1-10-5-2 6-3 7-3 7-3 7-3 7-3 6 0-57 3-2-10-1 0 81-17 0 0-78 3-2-9-1 0 81-31 0 1 3 89 0 2-2-6-5-3-3z"/><path id="gfw" d="m24-23l-10-4-1 4-1 5-2 5-2 4-2 5-2 4 1 1 3-3 3-4 3-4 2-4 3-4 1-3 4-2zm-3-61l-1 0 3 4 3 4 1 4 3 2 3-2 0-2-1-4-3-3-8-3zm-7 17l-2 1 2 3 2 5 1 4 0 4 3 1 2-1 1-2 0-5-3-4-6-6zm21 42l-1 1 2 3 2 4 2 5 0 4 3 1 3-1 1-3-1-5-4-4-7-5zm10-50l-5 5-34 0 1 3 43 0 3-1-5-5-3-2zm-1 37l-4 5-9 0 0-12 21 0 2-1-5-5-3-3-5 6-6 0 3-3 2-4 2-3 2-3 3-2-9-3-1 3-1 4-1 4-1 4-1 3-29 0 0 3 21 0 0 12-19 0 1 3 18 0 0 28-2 2-9 0 0 1 4 1 3 1 1 5 5-1 3-2 1-3 0-4 0-28 19 0 2-1-5-5-3-2zm44-17l-4 6-22 0 0-22 5 0 5-1 5-2 5-1 4-1 4-1 4 0-8-7-2 2-4 2-4 2-4 2-5 1-4 2-7-3 0 33-1 9 0 9-2 9-3 8-4 7-6 7 1 2 8-7 6-8 4-9 2-9 1-9 0-9 0-3 15 0 0 54 1 0 5-2 0-52 11 0 3-2-6-5-3-2z"/><path id="gfx" d="m70-81l-1 1 3 2 4 3 3 3 2 3 3 1 2-2 0-3-2-3-6-3-8-2zm-15-3l0 5 0 4 0 5 0 4 1 4-51 0 1 3 50 0 2 13 2 12 4 11 4 10 6 8 8 7 5 4 4 1 4-1 0-2-3-5 2-15-1 0-1 4-2 4-1 3-3 1-7-7-5-7-5-9-3-10-2-11-1-11 30 0 3-2-6-4-3-3-5 6-19 0-1-4 0-5 0-4 0-5 4-2zm-49 82l5 8 2-3 9-3 9-3 8-3 6-2 7-3 5-2 0-2-23 6 0-29 18 0 3-2-6-5-3-2-4 6-33 0 1 3 18 0 0 31-5 1-4 1-4 1-3 1-3 0-3 1z"/><path id="gfy" d="m63-84l-1 0 2 4 2 4 2 4 1 5 3 1 2-1 1-3-1-5-4-5-7-4zm-31 18l-4 5-3 0 0-19 4-3-10-1 0 23-15 0 1 3 14 0 0 21-5 2-4 2-4 1-2 1 4 8 2-3 9-6 0 29-2 2-7 0-5-1 0 2 5 1 3 2 2 5 6-1 3-3 1-2 0-4 0-34 12-7 0-1-1 0 3-3 2-3 3-4 0 62 1 0 5-3 0-5 45 0 2-1-5-5-3-2-4 6-13 0 0-19 18 0 3-1-5-5-3-3-5 6-8 0 0-17 18 0 3-2-5-4-3-3-5 6-8 0 0-18 21 0 3-1-6-5-3-2-4 6-32 0 0-1 2-3 1-4 2-3 1-3 4-2-11-3-1 6-2 6-3 7-3 7-3 7-4 6 1 0-10 4 0-18 12 0 3-2-5-4-3-2zm18 64l0-19 16 0 0 19zm0-22l0-17 16 0 0 17zm0-20l0-18 16 0 0 18z"/><path id="gfz" d="m43-56l-5 6-34 0 0 3 45 0 2-1-5-5-3-3zm-5-22l-5 6-25 0 1 3 35 0 2-1-5-5-3-3zm-5 44l-1 0 2 4 2 4 2 5 1 4-6 1-5 1-5 0-4 1-5 0-3 1 3-4 3-5 3-5 3-5 3-5 2-4 4-2-10-4-2 5-2 6-2 6-3 6-3 5-2 4-3 1 4 10 2-2 6-2 5-1 5-2 4-1 5-1 3-1 1 6 3 2 3-2 1-5-2-6-4-7-8-8zm40-49l-11-1 1 4 0 4 0 4 0 4-1 4 0 4-17 0 1 2 16 0 0 13-2 12-3 12-5 10-7 9-10 9 1 1 12-8 8-10 6-10 4-12 2-12 1-14 17 0-1 16 0 13-1 10-1 8-1 6-2 3-4 1-5 0-6-1 0 2 5 1 3 2 2 5 4-1 3-1 3-3 2-4 2-6 1-8 1-11 1-14 0-17 4-1-8-7-3 5-16 0 0-20 4-3z"/><path id="gga" d="m86-82l-5 7-77 0 1 3 39 0 0 80 2 0 5-3 0-55 6 3 5 4 6 4 5 4 5 5 3 4 4 0 1-3-1-5-6-6-11-6-17-6 0-20 43 0 2-2-6-5-4-3z"/><path id="ggb" d="m10-82l-1 1 3 3 2 3 2 4 2 3 2 4 1 3 4 1 2-1 0-4-2-5-5-6-10-6zm56 30l-4 6-7 0 0-28 21 0 0 14 1 13 1 12 2 11 3 9 4 6 5 3 4 0-2-6 2-14-2-1-1 6-1 5-2 0-3-5-2-9-2-10-1-11 0-11 1-10 4-2-8-7-4 4-43 0 1 3 16 0 0 28-17 0 1 3 16 0 0 37 1 0 5-2 0-35 17 0 2-2-5-4-3-3zm-48 39l-3 3-4 3-4 3-3 3 6 7 1-2 2-4 3-4 3-4 2-3 3 0 5 5 5 4 6 3 6 2 7 1 9 0 5 1 5-1 5 0 5 0 5 0 4 0 2-3 3-2 0-1-5 0-6 0-5 0-5 0-5 0-6 0-9 0-7-1-7-1-5-2-6-3-4-5-2-1 0-31 5-2-8-7-4 5-13 0 1 3 13 0z"/><path id="ggc" d="m10-82l-2 1 3 3 2 3 2 4 2 3 2 4 1 3 3 1 2-1 1-4-2-5-5-6-9-6zm8 70l-3 3-4 3-4 3-3 3 6 7 0-2 3-4 3-4 2-4 3-3 3 0 5 6 5 3 5 3 7 2 7 1 9 0 5 0 5 0 5 0 5 0 5 0 5 0 1-3 4-2 0-2-6 1-5 0-6 0-5 0-5 0-6 0-9 0-7-1-7-1-6-2-5-3-5-4-1-1 0-33 5-2-8-7-4 5-12 0 1 3 12 0zm42-28l-15 0 0-15 15 0zm28-37l-5 6-16 0 0-9 3-3-10-1 0 13-27 0 1 3 26 0 0 10-15 0-7-3 0 29 1 0 6-2 0-4 11 0-3 5-3 5-4 5-4 4-5 4-5 3 2 2 5-3 5-3 5-4 4-3 4-4 3-5 0 28 2 0 5-2 0-25 4 3 4 3 4 3 4 3 3 4 3 3 3 0 2-2-1-4-5-5-8-5-13-5 0-5 15 0 0 5 1 0 6-3 0-18 4-2-8-6-4 4-14 0 0-10 27 0 2-2-5-4-3-3zm-21 22l15 0 0 15-15 0z"/><path id="ggd" d="m16-55l-8-3 0 4 0 4-1 4 0 4 0 4-1 4-4 2 7 5 3-3 16 0 0 7-1 7-1 5 0 5-1 3-1 2-4 1-4 0-5-1-5 0 0 2 5 1 5 1 2 5 5-1 5-3 1-2 2-4 1-5 1-7 1-7 0-9 4-1-7-6-4 4-15 0 0-5 1-5 0-4 1-5 14 0 0 4 6-2 0-24 4-2-8-6-3 4-22 0 1 3 22 0 0 20zm46 13l0 17-14 0 0-17zm-11-12l0-3 11 0 0 12-13 0-7-3 0 32 1 0 5-2 0-4 14 0 0 18-5 1-6 0-4 1-5 0-3 0-3 0 4 9 2-3 9-1 8-2 8-1 7-2 6-1 6-1 2 5 1 5 3 1 3-2 0-4-2-5-5-6-9-6-1 0 2 3 3 3 2 4-17 2 0-18 15 0 0 4 1 0 5-2 0-21 3-2-7-6-3 4-14 0 0-12 12 0 0 4 2 0 5-2 0-20 4-2-8-5-3 3-29 0-6-3 0 30 1 0 5-2zm17 12l15 0 0 17-15 0zm12-34l0 16-29 0 0-16z"/><path id="gge" d="m56-51l0 33 0 3 1 2 3 1 5 1 11 0 7 0 5-1 4 0 2-1 1-1 0-2-3-2 0-13-1 0-1 5-1 5-1 2-2 2-4 0-6 0-10 0-4-2 0-29 20 0 0 6 1 0 6-2 0-29 4-2-8-6-4 4-27 0 1 3 27 0 0 23-19 0-7-3zm-28 4l0 41-3-2-2-2-2-3-2-3-2-4 1-4 0-4 1-4 0-4 4-2-10-2 0 8-1 9-1 8-2 8-3 7-3 7 1 1 3-4 3-3 2-4 2-5 1-4 1-5 4 8 5 6 5 4 7 2 8 2 9 0 6 0 7 0 7 0 7 0 7 0 5 0 1-3 3-2 0-1-6 0-7 0-8 0-8 0-7 0-6 0-5 0-5 0-4-1-4 0-3-1 0-23 16 0 3-1-5-5-3-2-4 6-7 0 0-15 4-3zm-24-3l1 3 46 0 3-2-6-4-2-3-5 6-8 0 0-16 16 0 2-1-5-5-3-2-4 5-6 0 0-11 3-3-10-1 0 15-18 0 1 3 17 0 0 16z"/><path id="ggf" d="m22-63l-1 1 2 3 2 4 2 4 2 4 0 4 4 1 2-1 1-4-2-5-4-5-8-6zm50 0l-2 4-2 4-2 4-2 3-2 4-1 2 1 1 3-2 2-2 3-3 3-3 2-3 3-3 3-2zm-26-21l0 16-36 0 0 3 36 0 0 26-41 0 1 3 36 0-5 7-5 7-7 7-6 6-8 5-7 5 0 2 9-4 8-5 7-5 7-6 6-7 5-6 0 38 2 0 5-3 0-39 5 7 5 8 6 6 7 6 7 5 7 4 3-4 3-2 0-1-7-3-8-4-8-5-7-6-6-6-5-7 38 0 2-1-6-5-3-3-5 6-28 0 0-26 35 0 3-1-6-5-3-3-5 6-24 0 0-12 4-3z"/><path id="ggg" d="m36-60l0 59-14 0 0-59zm6 0l14 0 0 59-14 0zm-38 59l1 3 89 0 2-1-5-6-3-3-4 7-2 0 0-57 4-2-8-7-4 5-34 0 2-3 3-4 3-3 2-3 2-3 4-2-12-3-1 4-1 4-2 5-2 4-1 4-14 0-7-4 0 65zm58-59l13 0 0 59-13 0z"/><path id="ggh" d="m25-65l-2 1 0 5-1 6-1 5-3 4-2 4-3 2-2 6 4 1 5-3 2-2 2-4 2-5 1-5 0-7-2-8zm27-15l3-2-11-2 0 20-1 18-3 15-7 14-11 12-18 11 1 2 16-8 12-9 8-10 6-11 3-12 1-13 2 15 3 12 5 11 7 10 9 8 12 7 2-4 5-2 0-1-9-4-8-5-7-5-5-6-4-7-4-8 5-3 6-5 5-4 5-4 4-4 3-4 4-1-9-5-3 4-3 5-4 5-5 5-4 5-5 4-2-6-1-6-1-7-1-7-1-7 0-9z"/><path id="ggi" d="m68-20l-1 1 4 3 4 3 3 4 4 4 3 4 2 3 3 1 2-2 0-4-4-6-7-6-13-5zm-20 3l-9-5-2 5-3 4-4 4-4 5-4 3-5 4 1 1 6-2 5-4 4-3 5-4 3-3 3-4 4-1zm39-66l-4 6-61 0-8-4 0 29 0 10 0 10-2 10-1 10-3 10-4 9 1 1 6-10 5-10 2-10 2-11 0-10 0-9 0-22 73 0 3-2-6-4-3-3zm-49 58l0-3 16 0 0 26-2 2-8 0-6-1 0 2 6 1 4 1 2 5 6-1 3-2 2-3 0-4 0-26 16 0 0 4 1 0 6-2 0-30 4-2-8-6-4 4-24 0 3-3 2-3 2-3 3-2-10-3 0 5-1 5-1 4-11 0-7-3 0 40 1 0 5-2zm23-6l-23 0 0-12 39 0 0 12zm16-26l0 11-39 0 0-11z"/><path id="ggj" d="m76-67l-1 1 2 3 3 2 2 4 2 3 2 3-7 1-6 0-7 1-6 0-5 0-5 0 4-4 4-5 4-5 4-5 3-5 3-5 4-2-11-4-2 6-3 6-3 6-3 6-4 6-4 4-2 1 4 9 2-2 7-1 7-1 7-2 6-1 6-1 5-1 1 4 1 4 3 1 2-2 1-5-3-6-6-7-11-7zm-48-13l4-2-10-2-1 3 0 3-1 4-1 4-1 5-1 4-13 0 1 3 11 0-1 6-2 5-1 5-2 5-1 5-1 3 3 3 3 2 3 2 3 3 4 3-3 4-3 4-3 4-3 4-4 3-5 3 1 2 5-3 5-3 4-3 3-4 4-4 3-3 2 2 3 3 2 3 2 3 3 1 2-1 0-3-1-4-3-4-7-6 3-6 2-6 2-7 1-6 1-7 1-7 4-1-7-7-4 4-11 0 1-4 1-4 1-4 1-4 1-3zm27 76l0-26 28 0 0 26zm-6-32l0 44 1 0 5-2 0-7 28 0 0 7 1 0 6-1 0-34 3-2-7-5-3 4-26 0zm-36 8l2-5 1-4 2-5 2-5 1-6 1-5 12 0 0 7-1 6-1 6-2 6-2 6-2 6-3-2-3-2-3-1-4-2z"/><path id="ggk" d="m74-22l-1 0 3 4 3 5 3 4 3 5 2 5 1 5 4 1 3-2 0-5-3-7-6-7-12-8zm-8 3l-9-5-3 7-4 5-3 6-4 5-4 4-5 3 2 2 5-3 4-4 5-4 4-4 4-5 4-5 4-2zm-14-14l0-39 32 0 0 39zm-6-45l0 55 6-2 0-5 32 0 0 5 1 0 6-2 0-45 4-1-8-6-3 4-31 0zm-10 18l-4 6-5 0 0-20 5-1 5-2 5 0-9-7-3 3-5 2-5 2-5 3-6 2-5 1 1 2 4-1 4 0 4-1 4-1 0 18-17 0 1 2 15 0-2 7-2 7-3 6-3 7-3 6-4 5 1 2 4-4 3-3 3-4 2-4 3-4 2-4 0 43 1 0 5-2 0-49 3 3 2 3 2 4 2 3 3 1 2-1 0-3-1-4-5-4-8-5 0-6 14 0 3-1-5-5-3-2z"/><path id="ggl" d="m38-9l-9-5-3 3-3 3-5 4-5 3-4 3-5 3 1 1 5-2 6-2 5-3 5-2 4-3 4-3 4 0zm25-4l-1 1 5 2 5 3 4 3 5 3 4 3 3 4 3-1 2-2-2-4-5-5-9-4-14-3zm-39-34l0-3 20 0-3 2-4 2-4 2-5 2-5 2-5 1-2 0 4 9 2-2 4-1 5 0 4-1 5 0 4-1 4 0-6 2-6 2-5 2-6 2-5 2-6 1-3 1 3 9 2-3 6 0 5 0 5-1 5 0 5-1 4 0 0 18-2 1-6 0-5 0 0 1 5 1 3 2 2 4 5-1 3-2 2-3 0-3 0-19 5 0 4-1 5 0 4-1 4 0 3 0 3 3 3 2 2 3 3 1 2-2-1-4-3-4-7-5-12-4-1 1 3 2 3 2 3 3-10 0-10 0-10 1-9 0-8 0-7 1 9-3 10-3 9-3 8-3 8-3 6-2 5-1-8-6-3 1-3 2-4 2-5 3-5 0-5 0-5 0-4 0-5 0-4 0 5-1 4-1 4-1 4-1 3-2 3-1 5-1-8-4 31 0 0 4 1 0 6-2 0-27 4-2-8-6-4 4-52 0-7-3 0 37 1 0 6-2zm23-6l-23 0 0-10 23 0zm7 0l0-10 23 0 0 10zm-7-13l-23 0 0-10 23 0zm7 0l0-10 23 0 0 10z"/><path id="ggm" d="m75-23l-1 0 3 4 3 4 3 4 3 4 2 5 1 4 4 1 2-2 0-4-3-6-6-7-11-7zm-18 2l-9-4-2 5-3 6-2 4-3 5-4 4-3 3 1 1 4-2 4-3 4-4 3-4 4-5 3-5 3-1zm2-63l-1 0 2 3 2 3 2 4 1 3 3 1 2-1 1-3-1-3-4-4-7-3zm29 10l-4 6-48 0 1 2 57 0 3-1-5-5-4-2zm-44 14l0 33 1 0 5-2 0-4 13 0 0 31-2 2-10-1 0 2 4 1 3 1 2 5 5-1 2-2 2-3 0-4 0-31 13 0 0 6 1 0 5-2 0-25 4-1-7-6-4 4-30 0zm6 24l0-18 32 0 0 18zm-18-31l-4 6-3 0 0-19 4-3-10-1 0 23-15 0 0 3 15 0 0 21-5 2-5 2-3 1-3 1 4 8 2-2 10-6 0 28-3 2-6 0-6-1 0 2 6 1 3 2 2 5 5-2 3-2 2-2 0-4 0-33 13-9-1-1-12 5 0-18 12 0 3-2-5-4-3-3z"/><path id="ggn" d="m23-27l-1 1 3 3 3 3 3 4 2 5 2 3 3 1 2-2 1-3-2-5-6-6-10-4zm61-48l-6 6-31 0 2-3 1-4 2-3 4-2-11-3-1 4-2 4-1 4-2 3-33 0 0 3 31 0-4 6-4 6-6 5-6 5-7 4-7 4 1 1 9-3 9-5 7-5 6-6 6-6 4-6 14 0 3 6 5 6 5 5 5 5 6 4 7 3 2-3 4-2 0-2-6-2-7-3-6-3-6-4-5-5-4-5 29 0 2-1-6-5-3-3zm-10 31l-10-1 0 12-56 0 1 3 55 0 0 28-3 2-6 0-7-1-4 0 0 2 5 0 4 1 2 1 3 5 6-1 3-1 2-2 1-3 0-3 0-28 18 0 3-2-6-4-3-3-5 6-7 0 0-8 4-3z"/><path id="ggo" d="m83-71l4 2 3 2 1 4-2 4-4 2-4-1-2-3-1-5 0-3 1-4 1-4 3-3 3-3 5-2 1 2-4 3-3 3-2 3 0 3zm-21 0l4 2 3 2 1 4-1 4-5 2-4-1-2-3-1-5 0-3 1-4 2-4 2-3 4-3 4-2 2 2-4 3-3 3-2 3-1 3z"/><path id="ggp" d="m44-84l-1 1 2 3 3 3 1 3 1 4 4 1 2-1 1-3-1-4-4-4-8-3zm-27 11l-2 0 0 5-2 4-2 4-3 2-3 6 4 2 4-1 2-2 2-3 1-4 0-5 66 0-2 4-2 5-1 4 1 1 3-3 3-3 3-4 3-3 4-1-8-7-4 4-66 0-1-5zm19 18l-10-1 0 51 1 4 1 2 3 2 4 1 6 0 19 0 11 0 8 0 6-1 3-1 2-1 0-2-4-3 0-17-1 0-1 6-1 5-1 3-1 3-3 2-3 0-4 0-5 0-6 0-19 0-5-1-3-1 0-2 0-14 8-3 8-4 8-3 7-4 6-4 6-3 5-1-10-6-4 4-6 5-6 4-7 5-8 4-7 3 0-30 3-2z"/><path id="ggq" d="m58-53l-1 1 6 4 6 4 6 5 6 4 4 5 4 5 4 0 1-3-2-5-6-6-11-7-17-7zm-53-22l1 3 47 0-6 9-7 9-8 8-9 9-9 7-10 7 0 1 8-4 8-4 7-5 7-5 7-6 6-6 0 60 1 0 5-2 0-60 3-2-5-1 3-3 2-3 2-3 2-3 2-3 30 0 3-2-6-5-4-3-5 7z"/><path id="ggr" d="m95-81l-10-1 0 80-3 2-6 0-6-1 0 2 6 1 3 1 2 5 5-1 3-2 2-3 0-4 0-76 4-3zm-19 8l-10-1 0 61 1 0 5-3 0-54 4-3zm-24-8l-4 6-43 0 1 3 21 0-2 4-2 4-3 4-3 4-4 3-3 3-2 1 4 9 2-2 7-2 6-1 7-1 5-1 6-1 5-1 2 6 3 1 2-2 0-4-2-5-5-6-10-5-1 0 2 3 3 3 3 3 2 4-7 0-7 1-6 0-6 1-5 0-4 0 3-2 4-3 3-3 4-4 3-3 2-3 4-1-9-4 30 0 3-1-5-5-4-3zm-2 46l-5 6-10 0 0-11 3-2-10-1 0 14-21 0 1 3 20 0 0 19-5 1-5 1-4 1-4 0-3 1-3 0 4 9 3-2 10-3 10-3 9-3 8-2 7-2 6-2 0-2-26 5 0-18 20 0 3-2-5-5-3-2z"/><path id="ggs" d="m20-55l0 63 1 0 5-3 0-6 48 0 0 8 1 0 6-2 0-56 4-2-8-6-4 4-29 0 2-3 1-3 2-4 2-4 1-3 39 0 3-2-6-5-4-3-5 7-73 0 1 3 37 0 0 4-1 5-1 4-1 4-14 0-7-3zm54 3l0 22-48 0 0-22zm0 48l-48 0 0-24 48 0z"/><path id="ggt" d="m29-85l-3 8-4 8-4 7-5 7-5 6-4 5 1 1 4-3 4-3 4-4 4-4 3-5 4-4 23 0 0 18-21 0-8-3 0 29-18 0 1 4 46 0 0 26 1 0 6-2 0-24 35 0 3-2-6-5-4-3-5 6-23 0 0-23 28 0 3-1-6-5-3-3-5 6-17 0 0-18 31 0 3-2-6-5-3-2-5 6-48 0 2-4 2-3 2-4 4-1zm22 63l-22 0 0-23 22 0z"/><path id="ggu" d="m5-7l4 9 2-3 6-3 6-2 5-3 4-2 4-2 4-2-1-2-7 2-6 2-7 2-5 2-5 1-4 1zm52-77l-1 0 3 3 2 4 2 3 2 4 3 1 2-2 0-2-1-4-4-4-8-3zm-26 5l-9-4-2 4-2 5-3 6-3 5-3 4-3 4-2 1 3 9 2-2 5-1 5-1 4-2-2 4-3 4-3 4-2 3-3 4-3 2-3 1 4 9 3-2 5-2 6-2 5-1 4-2 4-1 4-1 0-2-5 1-5 1-5 0-5 1-4 0-3 1 4-5 5-5 5-5 4-5 4-5 3-5 4-1-9-6-2 4-2 4-3 4-4 0-4 1-4 0-3 0 3-4 3-4 4-4 3-4 2-5 3-3 3-2zm58 5l-5 6-47 0 1 3 22 0-2 3-3 4-4 4-4 4-4 3-3 3-3 1 4 8 2-2 8-1 0 7 0 7-1 7-3 6-4 7-7 5-8 6 1 1 11-5 8-6 5-7 3-7 2-7 0-7 0-8 13-2 0 40 0 3 2 2 5 1 6 0 7 0 4-1 2-1 1-2-3-3 0-12-2 0-1 5 0 4-1 3-2 1-5 0-5 0-2-2 0-37 0-2 7-1 2 4 1 3 3 1 2-2 1-4-3-5-6-6-10-6-1 1 2 2 3 3 2 3 3 4-8 0-7 1-6 0-7 0-5 1-5 0 4-3 3-3 4-2 4-3 3-3 3-3 3-1-9-4 35 0 2-2-5-5-3-2z"/><path id="ggv" d="m88-57l-4 6-23 0 0-21 5 0 6-1 5-1 4-1 5-1 4 0 5 0-8-8-3 2-4 1-4 2-5 1-4 2-5 2-7-3 0 28-1 10-1 10-2 9-3 10-5 8-7 9 1 1 9-8 7-9 4-10 2-10 2-9 0-10 15 0 0 55 2 0 5-2 0-53 11 0 3-2-6-4-3-3zm-39-21l-8-6-3 2-4 1-3 2-5 2-4 2-4 2-6-2 0 31 0 8 0 9-1 9-2 9-2 8-3 8 1 1 4-5 3-6 3-7 1-6 1-7 1-6 20 0 0 5 1 0 5-2 0-28 5-2-8-6-4 4-19 0 0-13 5-1 5-1 4-1 4-1 4-1 4-2 5 0zm-31 46l0-4 0-4 0-4 0-12 20 0 0 24z"/><path id="ggw" d="m43-84l0 5 0 4 0 4 0 4 0 5-1 4-32 0 0 3 32 0-1 11-3 12-4 10-7 10-10 10-12 8 1 2 15-9 11-9 8-10 5-11 3-12 1-12 30 0 0 13-1 11-1 11-1 8-2 6-2 3-4 1-3 0-4 0-5-1-4 0-1 2 5 1 4 1 3 1 2 5 5 0 4-2 4-3 2-4 2-6 1-9 1-11 1-12 1-14 4-2-8-7-4 5-28 0 0-4 0-5 0-4 0-4 0-5 4-2z"/><path id="ggx" d="m41-55l-5 7-14 0 0-30 4-4-10-1 0 78-1 2-3 3 5 7 2-3 6-3 6-3 6-3 5-2 4-3 4-2-1-1-5 2-5 1-4 2-5 2-4 1-4 1 0-41 25 0 3-2-6-5-3-3zm24-26l-10-1 0 77 1 4 1 3 4 1 5 1 10 0 8 0 5-1 3 0 3-1 1-1 0-2-3-3 0-16-1 0-1 5-1 5-1 3-1 3-2 1-4 0-6 0-9 0-5 0-1-3 0-33 5-2 5-3 4-2 5-3 5-3 5-3 4 0-8-8-4 4-4 4-4 3-5 4-4 3-4 3 0-37 4-2z"/><path id="ggy" d="m63-26l-1 1 2 3 3 2 3 3 2 3 3 3 2 3-11 1-11 1-10 1-9 0-9 1-7 0 6-4 5-5 6-5 5-4 4-5 4-4 4-2-9-4 49 0 2-2-6-5-4-3-5 7-28 0 0-21 33 0 3-2-6-5-3-3-6 7-21 0 0-16 4-3-11-1 0 20-34 0 1 3 33 0 0 21-42 0 1 3 39 0-3 5-4 6-5 6-6 6-5 5-5 4-3 1 4 10 3-3 11-1 11-2 11-1 9-2 9-1 7-2 3 4 2 4 2 4 3 1 3-2-1-6-4-7-9-9-14-9z"/><path id="ggz" d="m37-59l-4 7-9 1 0-28 4-3-10-1 0 33-15 3 1 3 14-3 0 31-1 3-3 2 6 8 2-3 5-4 5-4 4-4 4-3 4-3 2-2 0-2-4 3-4 2-4 2-3 2-4 2-3 2 0-33 20-4 2-2-6-3-3-2zm48-14l-47 0 1 3 19 0-1 17-2 16-4 14-6 12-9 10-12 7 1 2 14-7 11-10 7-11 4-14 3-17 1-19 21 0-1 18-1 16-1 13-1 10-1 7-2 4-4 1-4 0-5 0-5-1 0 2 6 1 4 2 1 5 5-1 4-1 3-3 3-5 1-7 2-11 1-14 1-16 0-19 5-2-8-7z"/><path id="gha" d="m52-78l5 7 5 7 6 7 8 6 7 5 8 5 2-3 4-2 1-2-9-4-8-5-8-5-7-5-7-6-5-7 4-2-12-2-4 7-5 9-8 8-8 8-9 7-8 6 0 2 10-5 9-7 9-7 8-7 7-8 5-7zm-45 79l0 3 85 0 2-1-6-5-3-3-5 6-27 0 0-21 29 0 2-2-5-4-3-3-5 6-18 0 0-19 25 0 3-2-6-4-3-2-4 5-47 0 1 3 24 0 0 19-27 0 1 3 26 0 0 21z"/><path id="ghb" d="m24-84l-2 1 3 3 3 5 1 5 3 1 2-1 1-3-1-4-4-4-6-3zm25 10l-5 5-38 0 1 3 47 0 3-2-5-4-3-2zm-34 11l-2 1 2 3 2 5 2 5 0 4 3 1 3-1 1-3-1-4-4-6-6-5zm37 14l-5 6-9 0 2-3 3-4 2-3 2-3 1-3 4-1-10-4-1 3-1 5-2 4-1 5-1 4-31 0 1 3 51 0 3-2-5-4-3-3zm-32 44l0-22 23 0 0 22zm-6-28l0 40 6-2 0-7 23 0 0 7 1 0 6-2 0-29 3-2-7-6-3 4-22 0zm49-47l0 88 1 0 5-2 0-79 16 0-1 5-2 5-2 5-2 4-1 5-2 4 4 4 3 4 3 4 2 4 1 4 0 4-1 5-2 2-3 1-5 0-5 0 0 2 6 1 2 5 5 0 3-2 3-2 2-3 1-3 0-5 0-4-1-4-2-5-4-4-4-4-5-5 2-3 3-5 2-4 3-5 3-5 1-3 5-1-8-8-4 4-15 0z"/><path id="ghc" d="m70-52l0 1 3 3 4 4 4 4 3 4 3 4 2 3 4 1 2-2-1-4-3-6-8-6-13-6zm-60-30l-1 1 3 3 2 3 2 4 2 3 2 4 1 3 4 1 2-1 0-4-2-5-5-6-10-6zm76 0l-5 6-49 0 0 3 32 0-4 9-5 8-6 7-6 8-8 6-8 6 2 2 5-3 5-4 5-4 5-3 4-5 5-4 0 42 6-2 0-42 4-2-6-2 3-3 2-3 2-4 2-3 1-4 20 0 3-1-6-5-3-3zm-68 70l-2 2-4 2-3 3-3 2-3 3 6 7 0-2 3-4 4-4 3-4 2-3 3 0 5 5 5 4 6 3 6 2 7 1 9 0 5 0 5 0 5 0 5 0 5 0 4 0 2-3 3-2 0-2-5 1-6 0-5 0-5 0-5 0-6 0-8 0-8-1-7-1-5-3-6-3-4-4-2-1 0-32 5-2-8-7-4 5-13 0 0 3 14 0z"/><path id="ghd" d="m62-41l5-2-11-2-5 5-6 6-8 6-8 5-8 5-10 4 1 2 5-2 4-1 5-2 4-2 4-2 4-3 4 3 4 3 2 4 2 4 3 0 2-2 0-3-2-3-4-4-8-3 4-2 3-3 3-2 31 0-9 10-10 8-11 7-14 5-15 4-16 4 0 2 19-3 17-4 14-5 13-7 11-9 9-11 5-1-7-7-4 4-29 0 4-3 3-3zm-10-38l5-1-11-3-4 5-5 5-6 5-7 5-7 5-7 4 1 2 3-2 4-1 3-2 3-1 3-2 3-2 4 3 3 3 3 3 2 3 3 1 2-2 0-3-2-3-5-3-7-3 4-3 3-2 33 0-8 8-9 8-11 6-11 6-13 5-15 4 1 1 17-3 14-5 13-6 11-6 10-8 9-9 5-1-7-7-4 4-31 0 3-3 3-2 2-3z"/><path id="ghe" d="m17-72l-4-1-3-3-1-4 2-4 4-1 4 1 2 3 1 5 0 3-1 3-1 4-3 3-3 3-5 3-1-3 4-3 3-3 2-3 0-3zm21 0l-4-1-3-3-1-4 1-4 5-1 4 1 2 3 1 5 0 3-1 3-2 4-2 3-4 3-4 3-2-3 4-3 3-3 2-3 1-3z"/><path id="ghf" d="m28-80l4-2-10-2-1 3-1 4-1 5-1 5-1 5-13 0 0 2 12 0-1 6-2 6-1 6-2 5-1 5-2 4 3 2 3 2 3 2 3 2 4 3 3 2-3 4-3 4-4 4-4 3-4 3-5 3 1 2 6-3 5-3 4-3 4-3 3-4 4-4 3 3 2 3 3 3 2 3 3 0 2-1 0-2-1-4-4-5-7-5 3-6 3-7 1-7 2-7 1-7 1-8 3-1-7-7-4 5-12 0 1-5 1-5 1-4 1-4zm54 15l0 53-22 0 0-53zm-22 67l0-11 22 0 0 11 1 0 5-2 0-64 5-2-8-7-4 5-21 0-7-4 0 76 1 0 6-2zm-47-30l2-4 2-5 1-6 2-5 2-6 1-6 14 0-1 8-1 7-1 6-1 7-2 6-3 6-3-2-3-2-4-2-5-2z"/><path id="ghg" d="m25-84l-3 5-3 4-3 5-4 4-4 5-4 3 1 2 5-3 5-4 4-4 5-3 3-4 3-4 4-1zm1 21l-2 5-4 6-3 6-5 6-4 6-5 5 1 1 3-2 4-3 3-3 3-3 0 47 2 0 5-2 0-49 3-1-4-2 3-3 2-3 2-3 2-3 4-1zm15 11l0 53-13 0 1 3 66 0 3-2-6-4-3-3-5 6-16 0 0-38 23 0 3-1-6-5-3-2-4 5-13 0 0-31 25 0 3-2-6-4-3-3-5 6-47 0 1 3 25 0 0 72-14 0 0-49 4-3z"/><path id="ghh" d="m48-78l0 86 1 0 5-2 0-48 7 0 1 6 2 5 1 5 2 5 2 4 3 5-3 3-2 3-3 3-3 3-3 2-3 2 1 2 4-2 3-2 3-3 3-2 3-3 2-2 3 3 2 2 3 3 3 2 3 3 3 2 3-4 4-2 0-1-4-1-3-2-4-2-3-3-3-2-3-3 3-5 3-4 2-5 2-5 1-5 2-5 4-1-7-6-5 4-21 0-8 0 0-30 30 0-1 6 0 5-1 3 0 1-3 1-6 0-6-1 0 2 5 1 3 1 2 4 5 0 4-2 1-1 1-3 1-3 0-4 1-4 0-5 4-2-8-6-3 4-27 0-8-3zm36 36l-1 4-1 4-2 5-1 4-2 4-2 4-3-4-2-4-2-4-2-4-2-5-1-4zm-66-33l14 0 0 19-14 0zm-7-3l0 30 0 9 0 10-1 9-1 9-2 9-3 9 1 1 4-6 3-6 2-6 1-6 1-7 1-6 15 0 0 26-2 2-6 0-5 0 0 1 5 1 3 2 2 5 5-2 3-2 1-2 1-4 0-72 3-2-7-6-4 4-12 0-8-3zm7 25l14 0 0 21-15 0 0-5 0-4 0-4 1-3z"/><path id="ghi" d="m49-77l0 35 0 10-1 9-2 8-3 8-5 7-6 7 1 1 9-7 6-7 4-8 2-9 1-9 0-10 0-32 19 0 0 72 1 4 2 2 4 1 5 0 6-1 4-1 1-2-3-3 0-13-1 0-1 5-1 5-1 3-1 1-3 0-3 0-2-2 0-69 4-2-8-7-4 4-17 0-7-3zm-28-7l0 22-17 0 1 3 14 0-2 8-2 7-2 7-3 7-3 7-3 6 1 1 3-4 3-4 3-4 2-4 3-5 2-4 0 49 1 0 5-3 0-53 3 4 3 4 2 4 1 3 4 1 2-1 0-3-1-4-5-5-9-5 0-9 15 0 2-1-5-5-3-3-4 6-5 0 0-18 4-3z"/><path id="ghj" d="m60-53l4 3 2 4 2 3 3 1 2-2 1-2-2-3-4-3-6-2 0-2 18 0 0 5 1 0 5-2 0-21 5-2-8-6-4 4-17 0-7-3 0 29 1 0 4-1zm-40 3l0-6 18 0 0 4 1 0 5-2-2 4-3 4-3 4-32 0 1 3 29 0-4 4-5 4-4 3-6 4-6 3-6 3 1 1 4-2 4-1 4-2 0 30 6-2 0-5 16 0 0 5 1 0 5-2 0-23 5-2-8-6-4 4-15 0-1-1 4-2 4-2 4-3 3-3 3-2 3-3 16 0 3 3 3 3 3 2 3 3 4 2 4 2-1 1-16 0-7-3 0 34 1 0 6-2 0-5 17 0 0 5 1 0 5-2 0-23 4-1 6 1 1-4 2-2 1-1-8-2-8-1-6-2-6-2-4-3-5-3 32 0 3-2-6-5-3-2-5 6-38 0 3-4 3-3 3-2-9-3 0-20 4-2-7-6-4 4-16 0-7-3 0 33 1 0 5-2zm58 30l0 18-17 0 0-18zm-40 0l0 18-16 0 0-18zm42-55l0 17-18 0 0-17zm-42 0l0 17-18 0 0-17z"/><path id="ghk" d="m80-84l-9 3-11 2-12 3-14 2-13 2-13 1 1 2 13-1 13-1 13-1 12-1 12-2 10-2 6 1zm-64 18l-1 1 3 3 2 3 2 4 1 4 1 4 3 1 3-1 1-4-2-5-4-5-9-5zm24-3l-1 1 2 2 2 4 2 4 1 3 1 4 3 1 2-1 1-4-1-4-4-5-8-5zm39-1l-3 5-2 4-3 5-3 4-3 3-2 4 1 1 4-3 3-3 3-3 4-3 3-4 3-4 4-1zm-33 23l0 10-41 0 1 3 34 0-4 7-5 7-6 6-7 6-7 5-7 5 1 1 8-4 8-5 8-5 6-6 6-7 5-6 0 38 2 0 5-2 0-40 1 0 4 8 5 8 6 6 7 6 7 5 7 4 3-4 3-2 0-1-7-3-8-4-7-5-7-5-6-6-5-7 37 0 2-1-6-5-3-3-5 6-28 0 0-6 3-3z"/><path id="ghl" d="m23-50l24 0 0 21-24 0 0-5 0-4 0-4 0-4zm0-3l0-21 24 0 0 21zm-6-24l0 31 0 9-1 10-1 9-3 9-3 8-5 8 1 1 5-5 4-6 3-5 2-6 2-6 1-6 25 0 0 33 1 0 6-2 0-31 26 0 0 23-3 2-7 0-6-1 0 2 6 1 3 2 2 5 6-2 3-2 2-3 0-3 0-70 5-2-9-7-4 4-53 0-8-3zm63 27l0 21-26 0 0-21zm0-3l-26 0 0-21 26 0z"/><path id="ghm" d="m21-82l-2 0 3 3 2 3 2 4 2 4 1 3 3 1 2-2 1-3-2-4-4-5-8-4zm22-2l-1 1 2 3 2 3 2 4 1 3 0 4 3 1 3-1 1-3-1-5-4-5-8-5zm4 48l0 11-42 0 1 3 41 0 0 20-3 2-5-1-7 0-3 0 0 1 4 1 4 1 2 1 3 5 5-1 4-1 2-2 1-3 0-3 0-20 39 0 3-2-6-5-4-3-4 7-28 0 0-7 3-3-1 0 4-2 4-2 3-2 4-2 2-2 5-1-8-7-4 4-45 0 1 3 42 0-2 3-3 3-3 2-3 3zm27-48l-1 4-2 3-2 4-2 4-3 3-2 3-44 0-2-6-2 0 0 5-1 4-1 3-2 3-3 2-2 6 3 2 4-2 2-2 2-3 1-4 1-5 66 0-2 4-2 5-2 3 1 1 3-3 4-2 4-3 2-3 4-1-8-8-4 4-18 0 3-3 3-3 3-3 3-3 3-3 3-2z"/><path id="ghn" d="m19-69l-2 0-1 5-2 5-2 3-3 2-1 3 1 3 3 0 4-1 3-5 1-7 21 0-4 11-6 10-6 9-6 9-7 7-8 7 1 1 5-3 4-3 4-4 5-3 3-4 4-5 0 26-3 4 5 8 2-3 5-2 5-3 4-3 4-2 4-3 2-1 0-2-21 8 0-30 3-3-5-1 3-3 2-4 3-5 2-4 2-5 2-4 1 0 3 16 4 14 5 12 7 10 9 9 11 7 3-4 4-1 0-1-7-4-6-4-6-4-6-5-4-6-5-7 5-2 4-2 4-1 4-2 4-2 2-2 3 0-7-6-2 2-3 2-3 3-4 3-4 3-3 2-3-4-2-5-1-5-2-5-1-6-1-5 31 0-7 12 1 1 4-3 3-3 4-4 3-2 4-1-7-7-5 4-33 0 1-4 1-3 1-4 1-4 4-2-10-3-1 4-1 4-1 4-1 4-2 4-22 0z"/><path id="gho" d="m48-56l-2 1 2 5 2 5 2 6 2 6 1 6 0 5 3 2 3-3 1-5-2-8-4-9-8-11zm-18 5l-2 1 2 5 3 6 2 6 1 6 1 6 0 6 4 2 2-3 1-6-2-8-4-10-8-11zm16-34l-2 1 4 3 3 4 2 4 2 3 4 1 2-2 0-3-2-3-5-4-8-4zm43 32l-11-4-2 8-3 9-2 10-3 10-3 10-4 9-42 0 1 3 72 0 2-2-5-4-3-3-5 6-18 0 5-8 4-9 4-9 3-9 3-8 3-8 4-1zm-2-22l-5 7-59 0-7-4 0 29-1 9 0 9-1 8-2 9-3 7-5 8 2 1 6-8 5-8 3-8 1-9 1-9 0-9 0-22 71 0 3-2-6-5-3-3z"/><path id="ghp" d="m31-80l-10-4 0 3-1 4-1 4-1 4-2 4-12 0 1 3 10 0-1 4-1 3-1 4-1 4-2 3-1 3-4 2 7 6 3-4 11 0 0 18-5 1-5 1-4 1-4 0-2 1 4 8 2-2 14-5 0 22 1 0 5-2 0-22 16-7 0-1-16 3 0-16 11 0 2-1-5-4-2-3-4 5-2 0 0-13 3-3-9-1 0 17-11 0 1-3 2-4 1-3 1-4 2-4 1-4 22 0 3-2-6-4-2-2-5 5-11 0 1-5 2-5 1-4 4-1zm30 32l-9-2 0 48 0 3 2 2 3 1 5 1 12 0 7 0 6-1 3 0 3-1 1-1 0-2-3-2 0-14-1 0-1 6-1 4-1 3-2 2-4 0-7 0-11 0-5-3 0-18 4-2 4-2 5-3 4-2 4-3 4-3 4-1-8-6-3 3-4 4-3 3-4 4-3 3-4 2 0-21 3-2zm8-28l3 6 2 6 4 6 4 6 4 5 4 4 2-3 4-2 1-1-5-4-6-4-4-5-5-6-4-5-3-6 4-2-9-3-3 6-3 8-3 7-5 7-4 7-5 6 1 1 5-5 5-5 5-6 4-6 4-6 3-6z"/><path id="ghq" d="m24-33l-2 1 2 3 1 5 1 4 1 3 0 3 2 2 2-1 1-4 0-4-3-6-5-6zm-1-30l-2 1 3 4 1 5 1 4 1 3 2 1 2-1 1-3-1-4-3-5-5-5zm13 23l-18 0 0-27 18 0zm-24-31l0 31-9 0 2 2 7 0 0 9 0 8-1 7-2 8-2 7-4 7 2 1 5-7 4-7 2-8 2-8 0-9 0-8 18 0 0 37-2 2-10-1 0 2 5 1 2 1 2 4 5-1 3-2 1-2 0-4 0-65 4-2-8-6-3 4-10 0 3-5 2-5 4-2-10-2-1 5-1 4 0 5-2 0-8-3zm43-6l0 12 0 5-1 5-1 5-2 5-2 4-4 5 1 1 6-4 4-5 2-6 2-5 0-5 0-5 0-8 17 0 0 25 1 4 5 2 4 0 6-1 3-1 0-2-2-2-2 0-1 0-1 0-3 0-2 0-2-1 0-23 4-2-7-6-4 4-14 0-7-4zm3 73l0-27 23 0 0 27zm-6-33l0 45 1 0 5-2 0-7 23 0 0 8 1 0 6-2 0-36 4-1-8-6-3 4-21 0z"/><path id="ghr" d="m29-84l-3 5-3 5-5 5-4 4-5 5-4 4 1 2 5-4 6-4 5-4 5-4 4-4 3-4 4 0zm14 9l1 3 46 0 2-1-5-5-3-2-5 5zm-13 12l-3 6-4 6-5 6-5 6-5 6-5 6 1 1 3-3 4-2 3-3 3-2 3-3 0 47 1 0 6-2 0-49 3-2-4-1 4-4 3-3 2-4 4-1zm8 11l0 3 33 0 0 46-3 2-5 0-8-1-4 0 0 2 6 1 3 0 3 1 3 5 5 0 3-2 2-2 1-3 1-3 0-46 16 0 3-1-6-5-3-3-4 6z"/><path id="ghs" d="m4-17l4 8 2-3 5-2 4-2 4-2 4-2 3-2 3-2 0-1-6 2-6 1-5 2-5 1-4 1-3 1zm18-48l-9-2-1 4 0 5-1 5 0 5-1 5 0 4-4 2 7 5 3-3 18 0 0 9-1 8-1 7-1 4-1 4-2 2-3 1-5 0-5-1 0 2 7 2 1 5 5-1 5-3 2-2 1-4 2-6 1-7 1-9 0-10 4-2-7-6-3 3 1-6 0-6 1-6 0-6 0-5 1-5 4-2-8-6-3 4-24 0 1 3 24 0 0 5-1 6 0 6-1 7-1 6 0 6-13 0 1-4 0-4 1-5 0-4 1-4 0-3 4-3zm24-5l0 38 5-2 0-4 15 0 0 5-1 4 0 4-1 4-1 3-2 3-3-2-2-3-2-3-2-4-2-3-2 0 2 4 1 4 2 3 2 3 2 3 2 2-3 4-2 3-4 3-4 2-4 3-5 2 1 2 5-2 5-2 4-3 4-2 3-3 3-3 4 3 5 3 4 3 5 2 6 2 6 2 2-4 4-2 0-1-6-1-6-2-6-2-5-2-5-2-5-3 2-4 2-4 1-4 1-5 1-5 0-5 14 0 0 5 1 0 5-2 0-28 4-2-7-5-3 4-14 0 0-14 3-3-9-1 0 18-13 0zm20 7l0 22-15 0 0-22zm6 0l14 0 0 22-14 0z"/><path id="ght" d="m88-42l-4 6-15 0 1-4 0-3 1-4 0-3 0-4 0-4 20 0 3-2-6-4-3-3-5 6-9 0 0-19 4-2-10-2 0 23-14 0 2-3 1-4 1-4 4-2-10-2-1 6-1 5-2 6-2 6-2 4-2 5 2 1 2-3 3-4 2-4 2-4 15 0 0 4-1 4 0 3 0 4 0 3-1 4-22 0 1 3 21 0-2 8-3 7-4 7-5 6-6 6-8 5 1 2 10-5 7-6 6-7 5-7 3-8 2-8 1 7 2 7 3 7 4 7 6 7 7 6 2-4 4-2 0-1-8-5-6-5-5-6-4-6-2-6-2-6 23 0 3-2-6-5-3-2zm-63-37l4-2-10-3-2 6-2 7-3 7-3 7-3 7-4 6 2 0 2-2 3-3 2-4 2-3 3-3 2-4 2-4 20 0 3-1-5-4-3-3-4 5-10 0 2-4 2-5zm7 21l-4 5-17 0 1 3 7 0 0 17-15 0 1 3 14 0 0 23-3 5 6 6 2-2 4-4 3-4 4-4 3-3 2-3 2-2-1-1-3 2-3 3-4 2-3 2-2 2 0-22 12 0 3-2-5-4-2-2-5 5-3 0 0-17 11 0 3-1-5-5-3-2z"/><path id="ghu" d="m58-84l-2 7-3 7-3 6-3 6-4 5-3 4 1 1 3-2 3-3 3-3 3-3 2-3 2 4 2 3 2 4 2 3-4 4-4 5-5 3-5 4-5 3-6 3 2 1 4-1 4-2 4-2 0 38 6-2 0-5 24 0 0 7 2 0 5-2 0-31 4-1-8-6-3 4-23 0-6-3 3-2 3-2 3-2 3-2 3-2 3-3 3 3 4 4 3 2 5 3 4 2 6 3 2-4 3-2 0-1-5-1-5-2-5-3-4-2-4-3-4-2 3-4 2-3 3-4 2-3 2-4 2-3 4-2-7-6-5 4-15 0 2-3 1-4 4-2zm-4 82l0-23 24 0 0 23zm23-67l-2 3-2 4-2 4-2 3-3 4-3-3-2-3-2-4-2-3 3-5zm-45-5l0 21-17 0 0-21zm-23-3l0 32 1 0 5-2 0-3 6 0 0 43-6 2 0-31 3-2-9-1 0 35-6 1 3 9 2-3 8-2 6-3 7-3 5-2 5-2 5-2-1-1-16 4 0-23 14 0 2-2-5-5-2-2-5 6-4 0 0-16 5 0 0 4 1 0 5-2 0-25 4-2-7-6-4 4-15 0-7-3z"/><path id="ghv" d="m10-82l-2 1 3 3 2 3 2 4 2 3 2 4 1 3 3 1 3-1 0-4-2-5-5-6-9-6zm72 52l-17 0 0-11 17 0zm-39 22l0-19 16 0 0 19 1 0 5-2 0-17 17 0 0 12-2 2-9-1 0 2 7 2 2 4 4-1 3-1 1-3 0-3 0-40 5-2-8-7-4 4-11 0 1-2-3-4 4-2 4-2 3-2 4-2 3-2 4-1-8-7-4 4-43 0 1 3 40 0-3 3-4 3-3 3-3-1-3-1-4-1-5-1-5-1-1 2 5 2 4 1 4 2 3 2 2 2 2 2 1 0-23 0-6-3 0 56 1 0 5-2zm39-36l-17 0 0-12 17 0zm-23 14l-16 0 0-11 16 0zm0-14l-16 0 0-12 16 0zm-41 31l-3 3-4 3-4 4-4 2 6 8 1-2 2-4 3-4 3-4 2-3 4 0 4 5 6 4 5 3 7 2 7 1 9 0 5 0 5 0 5 0 5 0 5 0 5 0 1-4 4-2 0-1-6 0-6 0-5 1-5 0-5 0-6 0-9-1-7 0-7-2-6-2-5-3-5-4-1-1 0-32 5-2-9-7-3 5-13 0 0 3 14 0z"/><path id="ghw" d="m44-45l-25 0 0-19 25 0zm0 3l0 18-25 0 0-18zm6-3l0-19 26 0 0 19zm0 3l26 0 0 18-26 0zm-31 25l0-5 25 0 0 18 0 4 2 2 2 2 4 1 5 0 14 0 9 0 7 0 5-1 3-1 1-1 1-2-4-3 0-15-1 0-1 5-1 5-1 3-1 2-3 1-3 1-4 0-6 0-14 0-6-1-2-4 0-16 26 0 0 6 1 0 6-2 0-45 4-2-8-6-4 4-25 0 0-13 4-3-10-1 0 17-24 0-7-3 0 56 1 0 5-3z"/><path id="ghx" d="m41-82l0 90 1 0 5-2 0-47 6 0 1 6 2 6 2 5 3 5 2 4 3 5-2 3-3 3-3 3-3 3-3 2-4 3 1 1 4-2 4-2 3-3 4-2 3-3 2-3 3 3 3 3 3 2 4 3 3 2 4 2 2-4 4-1 0-1-4-2-4-1-4-3-3-2-4-2-3-3 3-5 3-4 2-5 2-5 2-5 1-5 4-2-7-6-4 4-32 0 0-31 31 0 0 5-1 5 0 4-1 2-1 1-3 1-5 0-7-1 0 2 5 1 3 1 2 4 5 0 4-2 2-2 1-2 1-4 0-4 1-5 0-5 4-2-7-6-3 4-30 0zm-10 15l-4 6-3 0 0-19 4-3-10-1 0 23-14 0 0 3 14 0 0 21-5 2-4 1-3 1-3 1 4 8 2-2 9-5 0 28-2 2-7 0-5-1 0 2 5 1 3 2 2 5 6-1 3-2 1-3 0-4 0-33 14-8-1-2-13 5 0-18 12 0 3-2-5-4-3-3zm38 52l-3-4-3-4-2-4-3-4-2-5-1-5 24 0-1 5-1 4-2 5-1 4-2 4-3 4z"/><path id="ghy" d="m59-84l0 14-27 0 0 3 27 0 0 11-17 0-7-3 0 33 1 0 6-2 0-4 17 0-1 4 0 4-2 4-1 3-2 4-3-3-3-3-3-3-2-4-2 1 2 3 2 4 2 3 2 3 3 2-3 3-4 3-4 3-4 3-5 2-6 2 1 2 6-2 6-2 5-2 4-3 4-3 3-2 5 3 5 3 6 3 7 2 7 1 7 2 2-5 4-2 0-1-8 0-7-2-7-1-6-2-6-2-5-3 2-3 1-4 2-3 1-4 1-4 0-4 18 0 0 5 1 0 6-2 0-23 4-2-8-6-4 4-16 0 0-11 28 0 2-1-6-5-3-3-5 6-16 0 0-10 3-3zm24 49l-17 0 0-4 0-14 17 0zm-41 0l0-18 17 0 0 15 0 3zm-16-49l-3 10-3 9-4 9-4 8-4 8-5 6 2 1 2-2 3-3 2-3 3-4 2-3 0 56 1 0 6-2 0-60 3-2-4-1 1-4 2-3 2-4 1-3 2-4 1-4 4-2z"/><path id="ghz" d="m25-17l0 19-21 0 1 3 88 0 3-1-6-5-3-3-5 6-29 0 0-12 28 0 3-2-6-4-3-2-4 5-18 0 0-10 33 0 2-2-5-4-3-3-4 6-65 0 1 3 35 0 0 25-16 0 0-16 3-2zm-16-49l0 18 1 0 5-2 0-1 8 0-2 4-3 3-3 4-4 3-4 3-4 3 1 2 4-2 4-2 4-3 3-2 3-3 3-3 0 15 1 0 5-2 0-16 4 3 4 2 3 3 2 3 3 1 2-2-1-3-2-3-6-3-9-2 0-3 11 0 0 3 6-3 0-12 3-1-7-5-3 3-10 0 0-6 20 0 2-2-5-4-3-2-4 5-10 0 0-6 4-2-10-1 0 9-20 0 1 3 19 0 0 6-10 0-6-3zm16 12l-10 0 0-9 10 0zm6 0l0-9 11 0 0 9zm32-30l-1 6-2 6-2 5-2 5-3 4-3 4 2 1 3-3 3-3 3-4 2 3 1 4 2 3 1 3 2 3-3 3-3 3-4 2-4 3-4 2-5 2 1 2 5-2 5-2 4-2 4-2 4-3 3-2 3 2 3 3 3 2 3 3 4 2 4 1 2-3 3-2 0-1-4-1-4-2-4-2-3-1-3-2-3-3 3-3 2-3 2-3 2-3 1-4 2-4 6 0 3-1-5-5-3-3-5 6-19 0 3-4 2-5 3-2zm9 34l-3-4-2-3-2-4-2-4 1-2 16 0-1 4-1 3-2 4-2 3-2 3z"/><path id="gia" d="m89-49l-4 5-17 0 0-18 23 0 2-2-5-5-4-2-4 6-12 0 0-15 4-2-10-2 0 19-24 0 1 3 23 0 0 18-28 0 1 3 27 0 0 40-16 0 0-25 4-3-10-1 0 28-4 2 8 5 3-3 37 0 0 6 1 0 5-2 0-32 3-3-9-1 0 29-16 0 0-40 27 0 2-1-5-5-3-2zm-81-32l0 89 1 0 5-3 0-80 14 0-1 4-1 5-2 5-1 4-1 4-2 4 3 4 2 3 2 4 1 4 1 4 0 3-1 5-2 2-2 1-6 0 0 1 4 2 1 5 5 0 3-2 2-2 2-2 0-4 1-4-1-4-1-4-1-4-3-4-3-4-4-4 2-4 2-4 3-4 2-5 2-4 2-3 4-1-8-8-4 4-12 0z"/><path id="gib" d="m83-81l-5 6-70 0 1 3 21 0 0 29 0 1-26 0 1 3 25 0 0 9-2 8-3 8-5 7-7 7-9 6 1 2 11-6 9-7 5-8 4-8 2-9 1-9 25 0 0 47 1 0 6-3 0-44 25 0 3-1-5-5-3-3-5 6-15 0 0-30 20 0 3-2-6-5-3-2zm-46 37l0-28 25 0 0 30-25 0z"/><path id="gic" d="m90-46l-8-5-3 1-3 2-3 3-4 2-3 2-4 2-3-2-4-2-3-3-3-3-2-3 24 0 0 3 1 0 6-2 0-23 4-2-8-7-4 5-42 0-8-4 0 48-3 4 3 7 2-1 6-3 5-2 5-2 5-3 4-1 3-2 0-1-23 6 0-20 17 0 5 8 7 6 7 5 8 4 9 3 9 2 2-4 4-2 0-1-5 0-5-1-5-1-5-1-5-2-5-2 4-2 5-1 4-2 4-1 4-2 4 0zm-63-27l0-3 44 0 0 10-44 0zm0 19l0-10 44 0 0 10zm30 24l-10-1 0 14-34 0 1 3 33 0 0 14-43 0 1 3 88 0 3-2-6-5-3-2-5 6-29 0 0-14 33 0 2-2-5-4-4-3-4 6-22 0 0-10 4-3z"/><path id="gid" d="m11-82l-1 1 4 2 3 4 3 3 2 4 3 0 2-1 1-4-3-3-5-4-9-2zm-6 22l-1 1 3 2 3 3 3 3 2 4 3 0 2-1 0-3-2-4-5-3-8-2zm5 40l-5 0 0 2 5 1 1 2 1 3 0 4 0 5 0 6 3 5 4-2 1-5 0-6-1-4-1-4 0-3 0-4 1-5 2-4 2-6 2-7 3-8 3-8 2-7-1 0-8 16-5 12-3 7-2 4-1 2-1 2-2 2zm20-55l1 3 48 0 0 69-2 3-8-1-7 0 0 1 7 1 3 2 3 5 5-1 4-3 1-3 1-3 0-70 8 0 2-2-5-5-3-2-5 6zm13 22l17 0 0 24-17 0zm-7-3l0 41 2 0 5-2 0-9 17 0 0 7 1 0 5-2 0-31 4-2-8-5-3 3-15 0-8-3z"/><path id="gie" d="m18-79l0 35 0 9-1 9-1 9-3 9-4 8-5 7 1 1 7-7 5-8 4-9 2-9 1-10 1-9 0-31 3-3zm30 4l0 73 1 0 5-3 0-67 4-2zm31-4l0 87 2 0 5-3 0-80 4-3z"/><path id="gif" d="m60-84l-2 1 3 3 2 4 2 4 1 4 3 2 2-2 1-3-1-4-4-5-7-4zm28 14l-5 6-38 0 0 3 49 0 2-2-5-5-3-2zm-65 37l-1 1 2 4 1 5 1 5 0 4 2 1 2-1 1-3 0-4-2-6-6-6zm0-29l-2 0 2 4 2 4 1 4 1 4 2 1 2-1 0-3 0-4-3-4-5-5zm31 12l0 19-1 7 0 7-2 6-3 7-3 5-6 6 1 1 8-5 5-7 4-6 2-7 1-7 0-7 0-16 15 0 0 46 0 4 2 2 4 0 5 0 6 0 4-2 1-2-3-3 0-14-1 0-1 6-1 5-1 3-1 1-3 0-3 0-2-2 0-43 4-1-8-7-3 4-13 0-7-3zm-19 10l-17 0 0-27 17 0zm-23-31l0 31-8 0 2 2 6 0 0 8 0 8-1 8-1 7-3 7-3 7 1 1 5-7 4-7 2-8 2-8 0-8 0-8 17 0 0 36-2 2-9-1 0 2 4 0 3 1 2 4 5-1 3-3 0-4 0-64 5-2-8-6-4 4-9 0 3-5 3-5 4-2-11-2 0 5-1 4-1 5-3 0-7-3z"/><path id="gig" d="m27-20l-1 1 3 3 3 3 2 4 2 3 1 4 4 1 2-2 0-3-2-5-5-4-9-5zm30-64l-1 5-3 5-2 4-2 4-3 4-2 3 1 1 2-1 0 7-33 0 1 3 32 0 0 11-43 0 1 3 88 0 3-2-6-4-3-3-4 6-30 0 0-11 32 0 3-2-5-4-3-2-5 5-22 0 0-6 3-2-6-1 2-3 3-3 2-3 7 0 3 4 2 4 1 5 4 1 2-2 0-3-2-4-5-5 23 0 3-1-5-5-3-2-5 6-23 0 2-3 2-4 4-1zm7 50l0 10-56 0 1 3 55 0 0 19-3 2-8-1-7 0 0 1 5 1 3 1 2 1 3 5 5-1 4-1 2-2 0-3 1-3 0-19 20 0 3-2-6-4-3-3-4 6-10 0 0-7 3-2zm-43-50l-3 6-2 5-3 5-3 4-3 4-3 3 2 1 3-2 3-2 3-3 3-3 2-4 5 0 2 4 2 4 0 4 3 2 3-2 0-3-1-4-6-5 20 0 3-1-5-4-3-3-4 6-17 0 4-6 4-2z"/><path id="gih" d="m14 17l16 0 0-3-12-1 0-5 0-5 0-5 0-5 0-5 0-5 0-26 0-5 0-5 0-6 0-5 0-5 0-5 12-1 0-3-19 0 0 6 0 6 0 5 0 6 0 6 0 6 0 26 0 6 0 5 0 6 0 6 0 6 0 5z"/><path id="gii" d="m20-78l-16 0 0 3 12 1 0 6 0 5 0 5 0 5 0 5 0 5 0 26 0 5 0 5 0 5 0 5 0 5 0 5-12 1 0 3 20 0-1-5 0-6 0-6 0-6 0-5 0-6 0-26 0-6 0-6 0-6 0-5 0-6 1-6z"/><path id="gij" d="m81-83l-5 6-54 0-8-3 0 78-2 3 7 5 3-4 70 0 3-2-6-5-4-3-5 7-59 0 0-23 50 0 0 7 1 0 6-2 0-30 5-2-9-7-4 4-49 0 0-20 67 0 2-2-6-5-3-2zm-60 56l0-24 50 0 0 24z"/><path id="gik" d="m43-21l-1 1 3 3 3 3 3 4 1 4 4 0 2-1 0-3-2-4-4-4-9-3zm-9-58l-9-5-3 4-3 5-3 5-4 5-5 4-4 4 1 1 5-3 5-4 5-3 4-4 4-4 3-4 4-1zm55 47l-5 6-6 0 0-11 12 0 3-2-5-5-4-2-4 6-44 0 1 3 35 0 0 11-40 0 0 3 40 0 0 21-2 2-7 0-6-1 0 2 6 1 3 1 2 5 5-1 4-2 1-3 0-4 0-21 16 0 3-1-5-5-3-3zm-40-20l0-11 29 0 0 11zm-7-31l0 38 1 0 6-2 0-3 29 0 0 4 1 0 5-2 0-28 4-2-7-5-3 4-28 0zm7 17l0-10 29 0 0 10zm-22 21l-3-1 3-5 3-3 2-4 4-1-10-5-2 6-4 6-3 6-5 6-4 6-5 5 1 2 4-3 3-3 3-3 3-3 0 47 2 0 5-2 0-50 3-1z"/><path id="gil" d="m51-84l-2 8-3 7-3 7-3 7-4 5-4 5 2 1 3-2 2-2 3-3 3-3 2-4 2-3 9 0-2 8-3 8-4 8-4 7-6 7-6 6 1 1 8-6 6-6 6-8 4-8 4-8 3-9 7 0-2 12-3 11-4 11-6 10-7 10-9 8 1 2 10-9 9-9 7-10 5-11 4-12 3-13 6 0-1 15-1 13-1 11-2 10-2 6-2 4-5 1-4 0-5-1-6 0 0 2 6 1 5 2 2 5 4-1 4-2 4-2 3-5 2-7 2-9 1-12 1-14 1-16 5-2-8-6-4 4-34 0 2-3 1-4 2-4 1-4 4-2zm-47 55l4 8 2-2 11-6 0 37 2 0 5-3 0-37 15-8-1-1-14 5 0-23 12 0 3-2-5-4-3-3-5 6-2 0 0-18 3-3-10-1 0 22-7 0 1-4 1-4 1-4 4-2-10-2-1 6 0 7-2 6-1 6-2 5-1 5 1 1 2-3 2-3 2-4 1-3 1-4 8 0 0 25-5 1-5 2-4 1-3 1z"/><path id="gim" d="m65-35l-11-3 0 11-2 8-4 8-6 6-10 6-14 4 1 2 16-4 11-5 7-6 5-7 2-9 1-9 4-2zm-6 21l-1 2 5 2 6 3 6 4 5 3 5 4 3 3 4 0 1-3-2-4-6-5-11-5-15-4zm31-63l-7-7-8 2-9 2-11 1-11 2-11 1-11 2-6-3 0 28-1 9 0 10-1 10-3 9-3 9-4 9 1 1 7-9 4-9 3-10 2-10 1-10 0-9 0-8 31 0-1 13-15 0-7-4 0 40 2 0 5-2 0-32 41 0 0 32 1 0 5-2 0-28 5-2-9-6-3 4-19 0 1-13 33 0 2-2-6-5-3-2-4 6-21 0 1-9 3-2-10-1-1 12-31 0 0-12 11-1 11 0 11-1 11-1 10-1 8-2 6 1z"/><path id="gin" d="m7-76l-1 0 1 4 1 4 1 4 0 5 0 4 3 1 2-1 1-3 0-5-3-6-5-7zm27-1l-1 4-1 4-1 4-1 4 0 3-1 4 1 0 2-3 2-3 3-4 1-4 2-4 4-2zm-30 29l1 2 13 0-2 7-2 7-2 6-3 7-3 6-3 5 1 2 3-4 3-4 3-4 2-4 3-4 2-4 0 38 1 0 5-2 0-43 3 3 2 4 2 4 1 3 3 1 2-1 1-3-2-4-4-5-8-5 0-6 14 0 2-1-1-1 53 0 3-2-5-4-3-3-5 6-15 0 0-9 21 0 3-1-5-4-3-3-5 6-11 0 0-8 23 0 2-2-5-4-3-3-4 6-13 0 0-7 4-2-10-1 0 10-20 0 1 3 19 0 0 8-19 0 1 2 18 0 0 9-23 0 1 2-7-5-4 6-4 0 0-32 3-3-9-1 0 36zm43 8l0 48 1 0 5-3 0-18 28 0 0 11-2 2-7 0-5-1 0 2 5 1 3 1 2 5 6-1 3-2 1-3 0-3 0-35 5-2-9-6-3 4-26 0-7-3zm6 24l0-9 28 0 0 9zm0-12l0-9 28 0 0 9z"/><path id="gio" d="m16-84l-1 1 3 3 3 4 2 4 1 3 3 1 2-1 1-3-1-4-5-4-8-4zm58 1l-9-1 0 20-14 0-7-3 0 51 1 0 5-2 0-5 15 0 0 31 1 0 5-3 0-28 14 0 0 6 1 0 5-2 0-41 5-2-8-6-4 4-13 0 0-16 3-3zm11 22l0 15-14 0 0-15zm0 35l-14 0 0-17 14 0zm-20-35l0 15-15 0 0-15zm-15 35l0-17 15 0 0 17zm-22 31l0-42 2 3 3 3 2 3 1 3 3 1 2-1 0-3-1-4-5-4-7-4 0-2 2-3 2-4 2-3 2-3 2-4 4-1-7-7-5 4-26 0 1 3 26 0-3 7-4 7-5 7-5 6-5 6-5 6 1 1 3-2 2-2 3-3 3-2 3-3 2-2 0 41 1 0 6-2z"/><path id="gip" d="m19-84l0 92 1 0 5-3 0-85 4-3zm-7 20l-1 5-1 4-1 4-1 3-2 3-1 6 3 1 3-3 2-2 1-3 0-4 1-4-1-4-1-5zm16-3l-1 1 2 3 1 4 2 4 0 4 3 1 2-1 1-2-1-4-3-5-6-5zm17-10l-1 7-2 8-2 7-2 6-2 6-3 6 2 1 2-3 2-3 2-3 2-3 1-4 2-3 15 0 0 24-21 0 1 3 20 0 0 29-28 0 0 3 62 0 3-1-6-5-3-3-5 6-16 0 0-29 21 0 3-2-6-5-3-2-4 6-11 0 0-24 24 0 3-2-6-5-3-2-4 6-14 0 0-22 3-2-10-1 0 25-14 0 1-4 1-3 1-4 1-4 4-2z"/><path id="giq" d="m8-51l0 40-3 3 4 9 3-3 6-3 7-4 5-3 5-3 5-3 4-2-1-2-5 2-5 2-5 3-5 1-4 2-4 2 0-31 0-3 18 0 0 5 1 0 6-3 0-27 4-2-8-6-4 4-27 0 1 3 27 0 0 23-17 0zm61-30l-11-3-2 10-3 10-3 9-4 9-5 8-4 7 1 1 3-3 3-3 2-3 3-3 2-3 2-4 1 6 2 5 1 5 2 5 2 5 2 4-4 5-5 5-5 4-6 4-6 4-8 3 1 2 8-3 7-3 6-4 6-3 5-4 4-5 3 4 4 4 3 4 4 3 5 3 5 3 2-4 4-1 0-1-5-3-5-2-5-3-4-4-3-3-4-4 4-6 4-5 3-7 2-6 2-7 2-8 7 0 3-1-6-5-3-3-4 6-25 0 1-3 2-4 1-4 1-4 2-4 3-2zm-12 24l22 0-1 6-2 6-2 6-2 6-2 5-4 5-2-4-2-5-3-4-1-5-2-5-1-6z"/><path id="gir" d="m72-57l0 1 3 3 3 4 2 3 3 1 2-1 0-2-1-3-4-3-8-3zm-39-15l-27 0 0 2 27 0 0 11-3 3-2 3-2 3-3-3-3-2-3-2-3-2-2 1 4 3 2 2 3 3 2 3-3 3-4 3-3 3-3 2-3 3-3 2 1 1 3-1 4-2 3-2 4-3 3-2 3-3 3 7-3 5-4 5-4 4-4 4-4 4-5 3 1 2 4-3 5-2 4-3 4-4 4-3 3-4 1 7-1 5 0 5-1 4-1 3-1 3-3 1-8 0-5-1 0 2 5 1 3 2 2 4 5-1 3-1 2-2 2-3 2-3 1-5 0-4 1-5 0-5 0-4-1-5-1-4-1-4-2-4-2-4 4-3 3-4 5-1-7-5 5-2 0-9 23 0 0 11 1 0 6-2 0-9 25 0 2-1-5-5-3-2-5 6-14 0 0-9 3-2-10-1 0 12-23 0 0-9 3-2-9-1zm54 27l-5 6-15 0 0-4 0-5 0-5 4-3-11-1 0 4 0 4 0 3 0 4 0 3-23 0 1 3 22 0-2 9-2 8-3 7-5 7-7 6-9 5 2 2 11-6 8-5 6-7 4-8 2-8 1-10 2 10 3 9 3 8 5 6 5 6 7 4 2-3 4-2 1-1-8-4-6-4-5-6-5-6-3-8-3-9 25 0 3-1-6-5-3-3z"/><path id="gis" d="m69-19l-3 4-4 5-3 4-4 4-4 4-5 4 1 1 5-3 5-3 4-4 4-3 3-4 4-4 2 4 3 4 4 4 3 3 4 3 4 3 2-3 4-2 0-1-5-2-4-3-4-4-3-3-4-4-3-4 4-7 3-6 3-7 2-8 2-7 2-7 4-1-7-7-5 4-35 0 1 3 7 0 1 8 2 8 2 7 2 7 3 7 3 6zm3-5l-4-6-2-6-3-6-2-6-1-7-2-7 26 0-1 6-2 7-2 6-2 7-3 6-2 6zm-21-57l-5 6-42 0 1 3 9 0 0 57-4 1-3 1-3 1 4 8 2-2 6-2 5-2 5-2 4-1 5-2 4-1 0 24 1 0 6-2 0-24 13-5 0-2-13 3 0-50 11 0 3-2-6-5-3-2zm-12 61l-18 4 0-18 18 0zm0-17l-18 0 0-16 18 0zm0-19l-18 0 0-16 18 0z"/><path id="git" d="m6-76l1 3 40 0 0 12-21 0-7-3 0 42 1 0 5-2 0-3 21 0-1 3-1 4-2 4-3 3-3-2-3-3-2-3-2-3-2 2 2 3 3 3 2 3 3 3-4 3-4 3-5 3-6 2-6 3-8 2 1 2 8-2 7-2 7-2 5-3 5-3 4-3 7 4 7 3 8 3 8 2 10 2 9 1 2-4 4-2 0-1-10-1-9-1-10-2-8-2-8-2-7-3 3-3 2-4 1-3 1-4 1-3 24 0 0 5 1 0 6-2 0-33 4-2-8-6-4 4-21 0 0-12 38 0 3-1-6-6-4-2-5 6zm70 18l0 12-22 0 0-12zm-51 28l0-13 22 0 0 1 0 4 0 4-1 4zm0-16l0-12 22 0 0 12zm51 16l-23 0 0-4 1-4 0-4 0-1 22 0z"/><path id="giu" d="m63-75l0 63 1 0 5-3 0-57 4-2zm21-7l0 79-2 3-7-1-6 0 0 1 6 1 3 2 2 5 6-2 3-2 2-3 0-3 0-76 4-3zm-35-2l-6 3-6 3-7 2-8 3-8 2-8 2 0 1 4 0 4-1 4 0 4-1 4 0 4-1 0 18-24 0 1 3 21 0-3 7-4 8-4 6-4 7-5 6-5 6 1 1 5-4 5-4 5-5 4-6 4-5 3-6 0 47 1 0 6-2 0-47 2 3 3 3 3 3 2 4 2 3 1 3 3 1 2-2 0-3-2-5-6-6-10-6 0-7 20 0 3-2-6-4-3-3-4 6-10 0 0-19 4-1 4-1 3-1 4-1 5 0z"/><path id="giv" d="m39-50l5-2-10-4-3 4-4 5-5 5-5 4-5 4-5 4 1 1 6-3 6-3 6-4 5-4 4-4 4-3zm20-4l-1 1 5 3 5 3 5 4 5 5 4 4 3 3 3 0 2-2-1-4-6-6-9-6-15-5zm-36-30l-1 1 3 3 3 4 3 4 2 4 1 4 4 1 2-2 0-3-2-5-5-6-10-5zm62 16l-5 6-20 0 4-3 3-3 3-4 3-3 2-3 4-2-10-4-1 4-2 3-2 4-2 4-2 4-2 3-51 0 1 3 83 0 3-1-6-5-3-3zm-29 42l0 27-12 0 0-27zm6 0l11 0 0 27-11 0zm26 21l-4 6-4 0 0-27 4-2-8-6-4 5-45 0-7-4 0 34-16 0 1 3 89 0 2-2-5-5-3-2zm-50-21l0 27-12 0 0-27z"/><path id="giw" d="m39-53l-1 1 2 3 2 4 2 4 1 4 1 3 3 2 3-2 0-3-1-5-4-5-8-6zm33-27l-1 1 4 3 4 4 2 4 3 1 2-2 0-2-2-3-4-3-8-3zm-42 1l-4 6-22 0 1 3 12 0 0 24-12 0 1 3 11 0 0 27-4 2-4 1-3 2-3 1 4 7 2-2 6-4 5-3 5-3 5-3 4-3 4-3-1-2-3 2-4 2-3 2-4 1 0-24 12 0 3-2-5-4-3-3-4 6-3 0 0-24 13 0 2-2-5-5-3-2zm58 10l-5 6-17 0 0-17 4-2-10-1 0 20-27 0 1 3 26 0 0 32-7 4-6 4-6 3-5 3-4 2-4 2 6 7 2-3 4-3 5-4 4-3 4-4 4-3 3-2 0 23-3 2-6-1-6 0 0 2 6 1 3 1 2 5 5-1 3-2 2-3 0-4 0-50 2 12 3 10 4 9 5 7 5 6 6 6 2-4 4-2 0-1-4-3-4-3-4-4-4-4-4-5-3-5 4-3 3-3 4-3 3-3 3-3 3-1-8-5-2 4-3 3-3 4-2 4-3 3-1-3-2-4-1-4-1-4-1-5-1-4 28 0 2-2-5-5-3-2z"/><path id="gix" d="m12-16l-5 0 0 3 5 1 1 2 1 3 0 5 0 6 3 4 3-2 2-4-1-6-1-4 0-4 0-3 2-4 1-3 3-5 3-6 3-7 3-6 3-5-1-1-9 14-6 9-3 5-2 3-2 2-1 2-2 1zm1-43l-1 1 3 2 4 3 2 3 2 3 3 1 2-2 1-3-3-3-5-3-8-2zm-8 15l-1 1 3 2 3 3 3 3 2 3 3 1 2-2 0-3-2-3-5-3-8-2zm0-28l1 3 25 0 0 11 1 0 6-2 0-9 24 0 0 11 1 0 5-2 0-9 24 0 3-1-6-5-3-3-4 6-14 0 0-8 4-3-10-1 0 12-24 0 0-8 3-3-10-1 0 12zm39 19l0 50 0 3 1 3 3 1 3 1 5 0 15 0 9 0 6 0 5-1 3-1 1-1 1-1-4-3 0-12-1 0-2 5-1 4-1 3-2 1-3 0-5 0-6 0-14 0-5-1-2-2 0-46 26 0 0 22-2 2-7 0-5 0 0 1 5 1 3 2 2 4 6-1 3-2 1-2 1-4 0-22 4-1-8-7-4 4-23 0-8-3z"/><path id="giy" d="m83-75l0 73-66 0 0-73zm-66 80l0-4 66 0 0 6 1 0 5-3 0-78 5-2-8-6-4 4-65 0-7-3 0 89 1 0 6-3zm51-73l-4 6-14 0 0-7 4-3-10-1 0 11-22 0 0 2 22 0 0 11-18 0 0 3 18 0 0 11-23 0 1 3 22 0 0 26 1 0 5-3 0-23 18 0-1 7 0 4-1 2-3 1-4 0-4 0 0 1 5 2 2 4 4-1 4-1 1-2 1-2 1-4 0-4 1-6 3-2-7-5-3 3-17 0 0-11 22 0 2-1-5-5-3-2-4 5-12 0 0-11 23 0 3-1-5-4-3-3z"/><path id="giz" d="m47-84l0 4 0 4 0 3 0 4-1 3-27 0-8-3 0 77 1 0 6-3 0-68 28 0-1 9-2 8-3 7-5 7-6 6-7 6 1 2 7-4 6-5 5-4 3-5 3-6 3-5 4 3 4 5 4 4 3 5 3 5 2 4 3 1 2-3 0-5-4-6-8-8-13-7 1-5 1-4 1-5 30 0 0 60-3 2-8 0-6-1 0 2 6 1 4 2 2 5 5-1 4-2 2-2 0-2 1-3 0-60 4-1-8-7-4 4-29 0 0-4 0-5 1-5 3-3z"/><path id="gja" d="m59-67l0 72 1 0 6-2 0-7 18 0 0 8 1 0 5-2 0-64 5-2-8-7-4 4-17 0-7-3zm25 60l-18 0 0-57 18 0zm-62-77l0 5 0 4 0 4 0 4 0 5-17 0 1 3 16 0-1 11-2 12-2 11-3 11-5 10-6 10 1 2 8-10 6-11 5-11 3-12 1-11 1-12 14 0 0 15-1 12 0 11-1 8-2 6-2 3-3 2-4-1-5 0-4-1 0 2 5 1 4 2 1 5 5 0 4-2 3-3 2-3 1-7 2-9 1-11 0-13 1-16 4-2-8-6-3 4-14 0 0-5 0-4 0-4 0-5 4-2z"/><path id="gjb" d="m22-79l-10-1 0 33 1 0 5-3 0-26 4-3zm18-4l-10-1 0 37 2 0 5-2 0-31 3-3zm-1 74l-8-5-3 3-4 3-4 4-5 3-5 2-5 3 1 1 6-1 5-2 5-3 5-2 5-3 3-2 4-1zm23-3l-1 2 5 2 5 2 5 3 4 3 4 3 3 3 3 0 2-2-2-4-5-5-9-4-14-3zm4-20l-1 1 3 2 3 3 3 2-9 1-9 0-9 0-8 1-8 0-6 0 9-2 9-3 9-4 9-3 7-3 7-2 4-1-7-6-3 2-3 2-4 2-4 2-6 0-5 1-5 0-5 0-5 1-4 0 4-2 4-1 4-2 4-1 3-2 3-2 4 0-6-5 4-1 4-1 3-1 3-1 4-2 3 2 4 2 4 2 4 2 4 1 5 1 2-4 3-1 0-2-4 0-4-1-4-1-4-1-4-2-4-1 3-2 3-3 3-2 3-3 2-2 2-3 4-1-7-7-4 4-38 0 1 3 7 0 2 4 2 3 3 4 2 3 3 2-3 2-4 2-4 2-4 1-4 1-4 2 1 1 4-1-3 3-4 2-4 2-4 3-5 2-4 1-2 1 3 7 2-2 5 0 5-1 4-1 5 0 4-1 4-1-5 3-6 2-6 2-5 2-6 2-5 1-3 1 3 8 2-2 5 0 5-1 4 0 5-1 5 0 4 0 0 17-2 2-9-1 0 2 4 1 3 1 1 4 5-1 3-2 1-2 1-4 0-18 23-3 4 4 2 4 3 1 2-2-1-4-3-5-7-4-11-4zm1-31l-4-2-3-2-3-3-2-3-2-3 26 0-2 3-2 3-3 2-2 3-3 2z"/><path id="gjc" d="m10-82l-1 0 3 3 2 4 2 4 2 3 2 4 1 3 4 1 2-1 0-4-2-5-5-6-10-6zm75 13l-4 6-5 0 0-17 4-2-10-1 0 20-18 0 0-17 4-2-10-1 0 20-13 0 1 3 12 0 0 17 0 5-16 0 1 3 15 0-1 5-1 5-1 5-3 5-2 4-4 4 2 1 5-4 3-5 3-4 3-5 1-5 1-6 18 0 0 31 1 0 5-3 0-28 18 0 3-2-5-5-3-2-5 6-8 0 0-22 15 0 3-2-6-4-3-3zm-33 31l0-5 0-17 18 0 0 22zm-34 25l-2 2-4 2-3 3-3 3-3 2 6 8 0-3 3-4 3-4 3-4 3-3 3 0 4 6 4 4 6 3 6 1 8 1 10 0 5 1 5-1 5 0 5 0 5 0 4 0 2-3 3-2 0-1-5 0-6 0-5 0-5 0-5 0-6 0-9 0-9 0-6-2-6-2-4-3-4-5-2 0 0-32 5-2-8-7-4 5-13 0 0 3 14 0z"/><path id="gjd" d="m58-84l-2 7-3 6-3 6-4 6-3 5-4 4 0-21 4-2-7-6-4 4-18 0-6-3 0 75 1 0 4-2 0-6 20 0 0 7 1 0 5-3 0-19 5-2 5-2 0 38 1 0 5-2 0-5 25 0 0 6 1 0 5-2 0-30 4-1-8-6-3 4-23 0-6-3 3-2 4-2 3-2 3-2 3-2 2-3 3 3 4 3 4 3 4 2 4 2 5 2 2-4 4-1 0-2-5-1-5-2-4-2-5-2-4-2-3-3 3-3 2-3 2-4 2-3 2-4 2-3 4-2-7-6-4 4-17 0 2-3 1-3 4-2zm-3 82l0-23 25 0 0 23zm-22-70l0 27-7 0 0-27zm-13 0l0 27-7 0 0-27zm-7 30l7 0 0 28-7 0zm20 0l0 28-7 0 0-28zm6 14l0-22 1 1 3-2 3-3 3-3 3-3 3-3 1 3 2 4 2 3 2 3 3 3-4 4-4 3-4 3-4 4-5 3-5 2zm39-41l-1 4-2 3-2 4-3 4-2 3-3-2-2-3-3-3-2-3-2-3 3-4z"/><path id="gje" d="m61-84l-1 1 2 3 3 3 2 4 1 4 3 1 3-2 0-3-1-3-4-4-8-4zm26 11l-5 7-31 0-8-4 0 28 0 9-1 8-1 9-3 8-5 8-6 7 2 1 8-7 6-8 3-9 3-9 1-9 0-8 0-22 43 0 3-1-6-5-3-3zm-54 7l-4 5-4 0 0-19 4-3-10-1 0 23-15 0 0 3 15 0 0 23-5 2-4 2-4 1-3 1 4 8 2-3 10-5 0 26-3 2-6 0-6-1 0 2 6 1 3 2 2 5 5-1 4-3 1-2 0-4 0-31 14-8-1-1-13 5 0-21 13 0 3-2-5-4-3-2z"/><path id="gjf" d="m19-55l-8-3 0 4-1 5 0 5-1 5 0 4-4 2 7 5 3-3 16 0 0 8-1 7-1 6-1 4-1 4-1 1-4 1-3 0-4 0-5 0 0 1 5 1 3 2 2 4 6-1 4-2 2-3 2-3 1-6 1-6 1-8 0-9 4-2-7-6-4 4-15 0 0-4 1-5 0-5 1-4 13 0 0 4 2 0 5-2 0-24 4-2-8-6-3 4-24 0 0 3 24 0 0 20zm41-27l-11-1 0 40-14 0 1 3 13 0 0 35 0 2-4 3 5 8 3-3 3-3 4-2 4-3 3-2 2-2 2-1 0-2-4 2-4 2-4 1-3 1 0-36 8 0 2 10 3 10 4 8 5 7 5 6 7 6 3-4 3-1 0-1-7-5-6-5-6-6-5-8-3-8-3-9 26 0 3-2-6-4-3-3-5 6-25 0 0-5 5-4 6-3 5-4 5-4 4-3 4-4 4 0-9-6-3 4-4 4-4 5-4 4-5 4-4 4 0-29 4-2z"/><path id="gjg" d="m20-51l0 51-16 0 1 3 89 0 2-2-6-5-4-2-5 6-27 0 0-37 31 0 3-2-6-5-4-2-5 6-19 0 0-32 36 0 2-1-6-5-3-3-5 6-70 0 1 3 38 0 0 72-21 0 0-47 4-3z"/><path id="gjh" d="m64-75l0 62 1 0 5-2 0-57 3-2zm20-7l0 79-3 3-7-1-6 0 0 1 6 1 3 2 3 5 5-1 4-2 1-3 0-4 0-76 4-2zm-79 6l1 4 19 0-2 8-3 8-3 8-4 8-5 7-5 7 1 1 3-2 2-3 3-2 2-3 3-3 2-3 3 3 3 4 2 4 2 3 3 1 2-1 0-3-1-4-5-5-8-3 2-4 2-4 2-3 21 0-3 12-5 12-6 10-8 10-9 8-11 7 1 2 13-7 11-8 8-10 7-11 5-12 4-12 4-2-7-6-4 4-19 0 1-4 2-4 1-4 2-4 24 0 2-2-5-5-3-3-5 6z"/><path id="gji" d="m44-84l-1 1 2 3 3 3 1 3 1 4 4 1 2-1 1-3-1-4-4-4-8-3zm-27 11l-2 0 0 4-2 5-2 3-3 2-3 6 3 2 5-1 2-3 2-4 1-6 66 0-2 4-2 4-1 4 1 0 3-2 3-3 3-3 3-3 4-1-8-7-4 4-66 0-1-5zm68 22l-5 6-73 0 1 3 39 0 0 40-3 2-7-1-7 0 0 1 7 2 3 1 2 5 5-1 3-1 2-2 1-3 1-3 0-40 38 0 2-2-6-4-3-3z"/><path id="gjj" d="m26-84l-1 1 3 4 2 4 2 5 3 1 2-1 1-3-1-4-4-4-7-3zm69 3l-10-1 0 80-3 2-7-1-6 0 0 1 6 2 3 1 2 5 6-1 3-2 2-3 0-4 0-76 4-3zm-19 11l-10-1 0 58 1 0 5-2 0-53 4-2zm-22-4l-4 5-46 0 0 3 21 0-2 4-2 4-3 4-3 4-3 3-3 1 3 8 2-2 5-1 4-1 4 0 4-1 4-1-4 6-5 5-5 5-5 4-5 4-6 4 1 2 9-5 8-6 8-6 7-7 6-8 6-8 4-1-10-5-1 4-2 3-2 3-2 4-5 0-5 0-4 0-4 0-4 0 4-2 3-3 3-4 3-3 3-3 4-1-8-4 33 0 3-1-6-5-3-2zm7 38l-10-5-6 10-7 10-8 8-8 7-9 6-9 6 1 2 6-3 6-3 6-4 6-4 5-4 6-4 2 2 3 4 3 3 2 3 2 4 2 3 3 1 2-2 0-4-2-5-6-6-10-5 3-3 3-3 2-3 3-3 2-4 2-3 5-1z"/><path id="gjk" d="m74-12l-4 5-23 0 0-16 4-3-10-1 0 19-3 2 8 5 2-3 30 0 3-2-5-4-2-2zm-31-69l0 37 1 0 3 0-3 4-2 4-3 3-3 4-3 3-3 3 1 1 3-2 4-3 3-2 3-3 3-3 39 0 0 9-1 8-1 7-1 5-1 3-1 2-3 1-6 0-6-1 0 2 5 1 3 2 2 4 5-1 5-3 1-2 2-4 1-6 1-7 1-9 0-11 4-1-7-6-4 4-35 0 4-6 4-1-9-3 32 0 0 4 1 0 5-2 0-28 4-2-7-6-3 4-31 0zm28 49l-9-3-1 4-2 5-2 4-2 4-3 3-4 4 1 1 4-2 3-2 3-3 2-3 2-3 4 3 4 3 3 4 3 0 1-1 0-3-2-3-4-3-8-2 3-5 4-2zm-22-19l0-10 32 0 0 10zm0-13l0-11 32 0 0 11zm-17-3l-4 6-3 0 0-19 3-3-10-1 0 23-14 0 1 3 13 0 0 22-4 2-4 1-4 2-3 1 4 8 2-3 9-5 0 27-2 2-6 0-5-1 0 2 5 1 3 2 2 5 5-1 3-2 2-3 0-4 0-32 14-10-1-1-13 6 0-19 12 0 3-2-5-4-3-3z"/><path id="gjl" d="m16-74l0 2 67 0 2-1-6-5-3-3-5 7zm52 38l-1 0 4 5 4 5 4 5 4 6 3 5 2 6 4 1 2-3 0-5-4-7-9-9-13-9zm-43-1l-2 5-3 6-4 6-4 6-4 5-4 5 1 1 5-4 6-5 4-5 5-5 3-5 3-5 4-1zm-21-14l1 3 42 0 0 45-3 2-8 0-6 0 0 1 6 1 4 2 2 5 5-1 3-2 2-2 1-2 0-3 0-46 40 0 3-1-6-5-4-3-5 6z"/><path id="gjm" d="m23-3l5-2 1-4-1-5-5-2-4 2-2 5 2 4 4 2zm0-41l5-1 1-5-1-4-5-2-4 2-2 4 2 5 4 1z"/><path id="gjn" d="m22-82l-1 0 3 3 3 4 2 4 1 4 3 1 2-2 1-3-1-4-5-4-8-3zm-4 57l0 28 1 0 5-2 0-23 22 0 0 30 2 0 5-3 0-27 23 0 0 16-2 1-7 0-5 0 0 1 5 1 3 2 2 4 6-1 3-2 1-2 0-4 0-15 5-1-9-7-3 4-22 0 0-10 15 0 0 4 1 0 6-2 0-17 4-2-8-5-3 3-36 0-7-3 0 27 1 0 6-2 0-3 14 0 0 10-21 0-7-3zm14-13l0-13 36 0 0 13zm39-45l-2 4-1 3-2 4-3 3-2 4-8 0 0-15 4-3-10-1 0 19-29 0 0-5-2 0-1 5-1 4-3 4-3 2-2 6 3 1 4-1 2-2 2-3 1-4 1-4 65 0-2 5-2 5 1 1 4-3 4-4 3-3 4-1-8-8-4 5-20 0 4-3 3-3 3-3 3-3 4-2z"/><path id="gjo" d="m60-13l-1 2 7 2 5 3 5 3 4 3 3 3 3 3 4 2 2-2 0-4-4-5-10-5-18-5zm-25-1l-3 3-5 4-5 4-5 3-6 4-6 2 1 2 7-2 6-3 6-2 6-3 5-3 4-3 5-1zm31-70l0 15-32 0 0-11 4-3-10-1 0 15-22 0 1 3 21 0 0 46-24 0 1 3 88 0 3-2-6-5-3-2-5 6-9 0 0-46 18 0 3-1-6-5-3-2-5 5-7 0 0-11 3-3zm-32 64l0-14 32 0 0 14zm0-46l32 0 0 13-32 0zm0 16l32 0 0 14-32 0z"/><path id="gjp" d="m48-71l15 0 0 30-15 0zm-7-3l0 70 1 4 1 2 3 2 3 1 6 0 15 0 10 0 7-1 4 0 3-1 2-1 0-2-3-3 0-15-2 0-1 5-1 5-1 3 0 2-3 1-2 0-4 1-4 0-5 0-15 0-5-1-2-1 0-3 0-32 37 0 0 8 1 0 5-3 0-37 4-2-8-6-3 4-35 0-8-4zm29 3l15 0 0 30-15 0zm-67 39l4 8 3-2 10-5 0 29-3 2-5-1-5 0 0 2 5 1 2 1 2 5 5-1 3-2 2-3 0-4 0-32 15-7-1-1-14 4 0-21 13 0 2-2-5-4-2-3-4 6-4 0 0-18 4-3-10-1 0 22-16 0 1 3 15 0 0 23-5 1-5 1-4 1-3 1z"/><path id="gjq" d="m46-82l-11-1 0 17-27 0 1 3 26 0 0 18-25 0 0 3 25 0 0 21-30 0 1 3 29 0 0 26 2 0 5-3 0-84 4-3zm22 0l-10-1 0 91 1 0 6-3 0-23 28 0 3-2-6-5-3-3-5 7-17 0 0-21 25 0 2-2-5-5-3-2-5 6-14 0 0-18 26 0 3-2-6-5-3-2-5 6-15 0 0-13 3-3z"/><path id="gjr" d="m83-80l-3 3-2 4-3 3-3 4-6-5-3-2-4 6-13 0 0-13 3-3-10-1 0 17-26 0 1 3 25 0 0 16-35 0 1 3 45 0-4 3-3 3-4 2-8-1 0 7-4 3-5 3-5 3-4 3-5 2-5 3 1 1 4-2 5-2 5-2 4-2 5-3 4-2 0 24 1 3 1 2 2 2 4 0 6 1 17 0 11 0 7-1 5 0 3-1 2-1 0-2-3-3 0-13-2 0-1 6-1 4-1 3-3 1-3 1-3 0-5 0-5 0-18 0-6-1-1-2 0-12 8-2 7-2 7-3 7-3 6-2 6-3 5 0-9-7-4 4-6 3-6 4-7 3-7 3-7 3 0-13 4-2 3-3 4-2 3-3 3-2 3-3 35 0 3-1-6-5-4-3-4 6-20 0 5-4 5-4 4-5 4-4 4-5 3-4 5 0zm-37 16l23 0 1 0-2 2-3 3-3 3-3 3-3 3-3 2-7 0z"/><path id="gjs" d="m21-79l-1 1 3 3 2 3 3 4 1 4 3 1 2-2 1-2-2-4-4-4-8-4zm61 11l-4 6-15 0 3-3 3-3 3-3 2-3 4-2-9-4-2 4-2 3-1 4-2 4-2 3-13 0 1-4 1-3 1-3 1-4 1-4 4-2-11-2-1 4 0 4-1 3-1 4-1 3-1 4-29 0 1 3 27 0-2 3-1 3-2 4-2 3-27 0 1 3 24 0-3 4-4 5-4 4-5 3-5 4-5 3 1 1 5-2 4-2 4-3 4-2 3-3 3-3 0 32 1 4 1 2 2 1 4 1 5 0 17 0 10 0 7-1 4 0 3-1 2-1 0-2-3-3 0-13-2 0-1 6-1 4-1 3-3 2-2 0-3 0-5 0-5 0-17 0-5-1-1-2 0-26 29 0-1 7 0 4-1 2-3 1-5-1-7 0 0 1 5 1 3 2 2 4 5-1 4-1 1-2 1-3 1-3 0-5 1-5 3-1-7-6-3 3-27 0-7-2 3-3 2-3 3-3 29 0 2 3 2 4 4 4 5 4 6 3 7 3 2-3 3-2 0-1-7-2-6-3-6-2-4-3-3-3-3-2 25 0 3-2-5-5-3-2-5 6-44 0 2-3 1-4 2-3 2-3 41 0 3-2-5-4-3-3z"/><path id="gjt" d="m34-84l-1 1 2 3 3 4 1 4 1 4 3 1 2-1 1-3-1-4-4-5-7-4zm-29 25l-1 1 4 3 3 4 2 5 3 0 2-1 1-3-2-3-4-4-8-2zm3-24l-1 1 4 3 3 3 3 4 2 3 3 1 2-2 1-3-3-4-5-3-9-3zm1 62l-4 0 0 2 5 2 0 1 1 3 0 5 0 5 0 6 3 5 3-2 2-5 0-5-1-3-1-4 0-3-1-3 1-4 1-3 1-3 1-5 2-6 2-7 2-6 2-5-2-1-6 13-3 9-3 6-1 3-1 2-1 1-2 2zm43-49l-4 6-24 0 1 3 8 0 0 7 0 9-1 9-1 11-2 11-4 10-5 11 2 1 5-8 4-8 3-9 2-9 2-9 0-8 10 0-1 13 0 10-1 7-1 6 0 4-1 2-4 1-4 0-4 0 0 1 6 2 1 5 5-1 4-3 1-3 2-4 1-6 0-9 1-10 0-14 4-2-7-6-3 4-9 0 1-8 0-7 18 0 3-2-5-4-3-3zm36-3l-4 5-17 0 1-3 2-4 1-4 3-3-10-2-1 6-1 7-1 6-2 5-2 5-2 5 2 1 2-3 2-3 1-3 2-3 2-4 28 0 2-1-5-5-3-2zm1 40l-4 6-7 0 0-21 9 0-2 4-1 4-1 3 1 1 4-4 3-4 2-4 4 0-7-7-4 4-26 0 0 3 13 0 0 43-2-2-2-2-2-4-1-3-1-5 0-4 1-4 0-4 4-3-10-1 0 9 0 8-1 7-2 7-2 7-3 6 2 1 2-3 2-4 2-4 1-4 2-4 1-5 2 8 3 5 3 4 4 3 4 1 6 1 4 0 4 0 3-5 0-2-5 0-6 0-4 0-4-1 0-22 16 0 2-2-5-4-2-3z"/><path id="gju" d="m10-20l-5 0 0 2 5 1 1 2 1 3 1 4-1 5 0 6 3 5 4-2 2-5 0-5-1-3-1-4-1-2 0-3 1-4 1-5 1-4 3-6 3-8 3-8 3-9 3-7-2-1-8 18-6 12-3 7-2 5-2 2-1 2-2 2zm-5-40l-1 1 3 2 3 3 3 3 2 4 3 0 2-1 0-3-2-4-5-3-8-2zm7-22l-1 0 3 3 4 3 3 4 2 4 3 0 3-2 0-3-3-4-5-3-9-2zm28 88l0-44 19 0 0 5-2 6-2 5-3 5-4 4-6 4 2 2 5-3 4-3 4-4 2-3 3-4 1-4 4 3 3 3 3 4 2 4 1 3 3 1 2-2 1-3-3-5-5-5-10-5 1-4 1-4 20 0 0 36-2 2-6-1-5 0 0 1 5 2 3 1 2 5 5-1 3-2 1-3 0-3 0-37 4-1-8-6-3 4-19 0 1-4 0-4 0-5 12 0 0 5 1 0 6-2 0-23 4-2-8-6-4 4-30 0-7-4 0 34 1 0 5-2 0-4 13 0 0 5 0 4 0 4-20 0-7-3 0 52 1 0 6-2zm39-82l0 19-32 0 0-19z"/><path id="gjv" d="m21-84l-1 1 3 4 3 4 2 5 3 1 2-2 1-2-1-4-4-4-8-3zm2 61l-9-3-2 4-1 5-2 4-1 4-2 3-2 3 1 1 3-2 2-3 3-3 2-4 2-4 2-4 4-1zm14-3l-1 0 2 4 3 4 1 5 1 4 3 1 3-1 0-3-1-5-4-4-7-5zm39-52l-1 0 3 3 2 4 2 3 1 4 3 1 2-1 1-3-1-4-4-4-8-3zm-29 4l-4 6-39 0 1 3 49 0 2-1-5-5-4-3zm41 13l-5 5-15 0 1-3 0-4 0-4 0-4 0-5 0-4 3-2-10-2 0 5 0 5 0 5 0 4 0 5 0 4-11 0 1 3 10 0-1 12-1 11-3 10-4 10-6 8-8 8 2 2 9-8 7-9 5-10 3-10 2-11 1-13 3 0 0 52 0 4 2 2 5 1 6 0 7-1 4 0 2-2 0-1-2-3-1-17-1 0-1 5 0 5-1 4-1 2-1 2-5 0-4 0-3-2 0-51 17 0 2-1-5-5-3-2zm-48 8l0 16-23 0 0-16zm-8 51l0-32 8 0 0 3 1 0 5-2 0-19 4-2-7-6-4 4-21 0-7-3 0 29 1 0 5-2 0-2 9 0 0 32-2 2-10-1 0 2 4 1 3 1 1 5 5-1 3-2 2-3 0-4z"/><path id="gjw" d="m35-73l-1 1 3 3 2 4 3 4-6 0-6 0-5 1-5 0-5 0-4 0 3-3 4-3 3-4 4-3 2-3 3-3 4-2-10-4-2 4-2 4-3 4-3 5-4 4-3 3-3 1 4 8 2-2 6-1 6-1 6-1 6-1 5 0 4-1 2 6 3 1 2-2 0-4-1-4-6-6-8-5zm31 36l-10-1 0 37 0 3 2 2 3 2 4 0 11 0 7 0 5 0 3-1 2-1 1-1 0-1-2-3-1-12-1 0-1 5-1 4-1 3-2 1-3 0-6 0-10 0-4-2 0-13 5-2 5-1 5-2 5-2 4-3 3-2 5 0-9-6-3 3-3 3-4 2-4 3-4 2-5 3 0-17 4-3zm-1-45l-9-1 0 35 0 4 1 2 3 1 5 0 10 0 7 0 5 0 3-1 2-1 1-1 1-1-3-3-1-11-1 0-1 7-2 4-2 1-3 0-5 0-10 0-4-2 0-12 5-1 5-2 4-2 5-2 4-1 3-2 5-1-8-5-3 2-3 2-4 3-4 2-5 3-4 2 0-16 3-3zm-48 87l0-22 21 0 0 15-2 1-9 0 0 1 6 3 2 5 5-2 3-2 1-2 0-4 0-40 4-2-8-6-3 4-19 0-7-4 0 58 1 0 5-3zm21-48l0 10-21 0 0-10zm0 23l-21 0 0-10 21 0z"/><path id="gjx" d="m85-74l-5 6-38 0 1-4 2-3 1-4 4-2-10-3-1 4-2 4-1 4-2 4-27 0 1 3 25 0-3 8-4 7-5 7-5 7-5 6-7 6 2 1 3-2 3-3 2-2 3-2 3-3 2-3 0 46 1 0 6-4 0-46 3-2-3-1 2-3 2-4 2-3 2-3 2-3 1-4 52 0 2-1-6-5-3-3zm0 40l-5 6-14 0 0-7 4-2-2 0 3-2 4-3 3-2 4-2 2-3 4-1-7-7-4 4-37 0 1 3 35 0-3 3-3 4-3 3-3 2-4 0 0 10-26 0 1 3 25 0 0 23-3 2-7 0-6-1 0 2 6 1 3 1 3 5 5-1 4-2 1-3 0-4 0-23 25 0 2-2-5-5-3-2z"/><path id="gjy" d="m53-83l-1 0 3 3 2 3 3 4 1 3 1 4 4 0 2-1 0-3-1-5-5-4-9-4zm-43 1l-1 1 2 3 3 3 2 4 3 3 2 4 1 3 3 1 2-1 1-4-3-5-5-6-10-6zm77 13l-5 5-49 0 1 3 39 0 0 4-2 5-1 3-1 4-2 4-2 3-3-2-4-2-4-2-4-3-4-2-5-3-1 2 3 2 4 3 4 3 4 3 3 3 4 3-4 5-4 4-4 4-6 4-5 4-7 3 1 1 7-2 6-3 6-4 5-4 5-4 4-4 4 3 3 4 3 3 3 3 2 3 2 3 3 1 2-2 0-3-3-5-6-7-9-8 2-4 2-4 2-4 2-5 2-5 1-5 12 0 2-1-5-5-3-2zm-69 57l-3 2-4 3-4 4-4 2 6 8 1-2 3-4 3-4 3-4 2-3 3 0 5 5 5 4 6 3 6 2 8 1 8 0 6 0 5 0 5 0 4 0 5 0 5 0 1-4 4-2 0-1-6 0-5 0-6 1-5 0-5 0-6 0-8-1-8 0-6-2-6-2-6-3-4-4-1-1 0-32 4-2-8-7-4 5-13 0 0 3 14 0z"/><path id="gjz" d="m36-84l-4 3-5 3-5 2-6 3-6 2-6 3 0 1 5-1 4-1 5-1 4-1 0 17-18 0 1 3 15 0-2 7-3 7-2 7-3 6-4 7-4 5 2 2 3-4 4-4 3-5 3-4 3-5 2-4 0 44 1 0 5-2 0-45 3 4 3 3 2 4 2 4 3 1 2-1 0-3-2-5-4-4-9-5 0-10 15 0 1 0 0 32 1 0 5-2 0-5 15 0 0 33 1 0 5-2 0-31 15 0 0 6 2 0 5-2 0-36 4-2-8-6-3 4-15 0 0-16 4-3-10-1 0 20-14 0-7-3 0 11-4-3-2-2-5 5-5 0 0-19 4-1 4-2 3-1 5 0zm29 55l-15 0 0-30 15 0zm6 0l0-30 15 0 0 30z"/><path id="gka" d="m86-82l-4 6-5 5-4 5-5 5-5 4-6 4 1 1 7-3 6-3 5-4 6-5 4-4 5-5 4-1zm0 26l-4 6-5 6-6 5-5 5-6 4-7 4 1 2 7-3 7-4 7-4 6-5 5-5 5-5 4-1zm2 25l-5 8-6 7-6 7-7 6-8 4-8 5 1 2 9-4 8-4 8-5 7-6 7-7 6-7 3-1zm-48-42l0 27-16 0 0-27zm-36 27l1 3 12 0 0 9-1 8-1 9-3 8-3 8-5 8 1 1 7-7 5-8 4-9 2-9 1-9 0-9 16 0 0 50 1 0 5-2 0-48 14 0 3-1-6-5-3-3-4 6-4 0 0-27 12 0 2-1-5-5-3-2-5 5-41 0 1 3 10 0 0 27z"/><path id="gkb" d="m6-53l4 8 2-3 13-4 0 13-2 2-9-1 0 2 7 2 1 4 5-1 3-2 1-2 0-4 0-15 5-1 4-2 3-1 3-1 0-2-15 3 0-9 15 0 2-1-5-5-3-2-4 5-5 0 0-10 4-3-10-1 0 14-20 0 1 3 19 0 0 11-5 1-4 0-4 1-4 1-2 0zm64-30l-10-1 0 5 0 5 0 4-12 0 1 3 11 0-1 4 0 3-1 4-4-2-5-1-1 1 4 3 5 3-2 3-3 4-2 3-4 4-4 3-5 3 1 1 6-2 4-3 5-3 3-3 3-3 2-4 5 4 3 4 3 0 1-2 0-3-3-4-6-4 1-4 1-4 0-5 12 0 0 7 1 6 1 6 2 5 2 5 3 3 5 3 4-1-2-5 1-10-1 0-1 3-2 4-1 0-2-2-2-4-1-4 0-5-1-5 0-5 4-2-7-6-4 4-10 0 0-10 3-3zm-14 51l-10-2-1 5-1 5-35 0 1 3 32 0-2 6-4 5-6 5-6 4-8 4-10 3 1 2 12-3 9-4 8-5 6-5 4-6 4-6 28 0-1 6-1 5-1 4-2 3-2 2-3 1-4 0-5 0-5-1 0 2 5 1 4 2 2 4 4 0 3-1 3-2 2-2 2-3 2-4 2-5 1-5 1-6 4-2-7-6-4 4-27 0 1-5 4-3z"/><path id="gkc" d="m42-77l1 3 51 0 2-1-5-5-3-3-5 6zm2 43l0 42 6-2 0-4 36 0 0 5 1 0 6-2 0-35 3-2-7-6-3 4-35 0-7-3zm6 33l0-14 15 0 0 14zm36 0l-15 0 0-14 15 0zm-36-17l0-13 15 0 0 13zm36 0l-15 0 0-13 15 0zm-38-47l0 26 2 0 5-2 0-3 26 0 0 4 1 0 6-2 0-19 3-2-7-5-3 3-25 0-8-3zm7 18l0-15 26 0 0 15zm-48-20l0 55 1 0 5-2 0-50 7 0 0 72 5-2 0-70 7 0 0 41-1 2-5-1 0 2 4 2 1 4 5-1 2-3 0-4 0-40 4-2-8-6-3 3-5 0 0-13 3-2-10-1 0 16-5 0-7-3z"/><path id="gkd" d="m52-14l0 2 8 3 7 3 6 3 5 3 5 4 4 3 4 1 2-2 0-3-6-6-13-5-22-6zm6-25l-10-1-1 11-1 9-4 8-7 7-12 6-17 5 1 2 19-5 14-6 8-7 4-8 2-8 0-10 4-3zm-34 29l0-34 54 0 0 33 1 0 5-2 0-30 4-1-8-6-3 3-53 0-7-3 0 42 1 0 6-2zm5-44l0-4 44 0 0 4 1 0 6-2 0-18 3-2-7-6-4 4-42 0-7-3 0 29 1 0 5-2zm44-21l0 15-44 0 0-15z"/><path id="gke" d="m11-82l-1 1 2 3 3 3 2 4 3 3 1 4 2 3 3 1 2-1 1-4-3-5-5-6-10-6zm61 24l-2 0 4-2 3-2 4-3 4-2 3-3 3-2 4-1-8-7-5 4-47 0 1 3 45 0-2 3-3 3-3 3-3 3-3 3-6-1 0 42-2 2-8 0-7-1 0 2 6 1 4 1 3 5 5-1 3-1 2-2 1-3 0-3 0-38 4-3zm-52 44l-3 2-4 3-3 2-4 3-3 2 6 8 1-2 2-3 3-4 3-3 2-4 2-2 4 0 4 6 5 4 6 3 6 2 7 1 9 0 5 0 5 0 5 0 4 0 5 0 4 0 2-4 3-2 0-1-5 0-5 0-5 1-6 0-5 0-5 0-9-1-7 0-6-2-6-2-5-3-5-4-1-2 0-31 5-2-9-7-4 5-14 0 1 3 15 0z"/><path id="gkf" d="m18-84l-1 0 3 3 3 4 2 4 2 4 3 1 2-2 0-3-1-4-5-4-8-3zm2 14l-10-1 0 79 1 0 5-3 0-72 4-3zm0 18l-1 1 3 3 3 3 1 4 3 1 2-1 1-3-1-3-4-3-7-2zm4 26l-4 0 0 2 4 2 1 1 1 3 0 5-1 5 3 4 4-1 1-4 0-5-1-5-1-3 1-7 1-3 2-4 2-6 3-5 1-4-1-1-5 9-4 7-2 4-1 2-1 1-1 1-2 2zm2-39l-1 0 3 3 3 4 2 4 3 1 2-1 0-3-1-3-4-3-7-2zm57-11l-44 0 1 3 44 0 0 70-3 3-7-1-6 0 0 1 5 1 4 2 2 5 6-2 3-2 2-2 0-4 0-70 5-2-9-6zm-14 48l0 15-21 0 0-15zm3-22l-4 5-6 0 0-13 4-1 4-1 4 0 4 0-7-7-3 2-5 1-5 2-6 1-6 1-5 1 0 2 4 0 4 0 4-1 3 0 0 13-17 0 1 3 16 0 0 11-7 0-7-3 0 31 1 0 5-2 0-5 21 0 0 5 1 0 5-2 0-20 4-2-7-5-4 3 1 0-7 0 0-11 16 0 3-2-6-4-3-2z"/><path id="gkg" d="m78-11l-56 0 0-55 56 0zm-56 12l0-9 56 0 0 11 1 0 6-2 0-65 5-2-9-8-4 5-54 0-7-3 0 76 1 0 5-3z"/><path id="gkh" d="m52-78l4 8 6 7 6 6 7 6 7 5 8 5 3-3 4-2 0-2-9-4-8-4-8-5-7-6-6-6-5-6 4-2-12-3-3 8-6 8-7 9-9 8-8 7-9 5 1 2 9-5 9-6 9-7 8-8 7-7 5-8zm18 33l3-2-10-1-1 11 0 10-2 9-4 9-7 8-10 7 1 1 10-5 7-5 5-6 4-7 2-7 1-8 1 9 2 7 3 7 4 6 5 5 6 5 2-5 4-1 0-1-8-5-7-6-5-7-3-8-2-9-1-11zm-42-3l-1 10-1 9-2 10-4 9-6 8-10 8 2 2 8-5 6-5 5-6 4-6 2-6 2-7 3 3 3 4 2 3 2 4 2 3 3 1 2-1 0-4-2-5-5-5-10-5 0-4 1-4 0-4 0-4 3-3z"/><path id="gki" d="m28-11l45 0 0 9-45 0zm0-6l0-9 45 0 0 9zm-8-15l0 40 8 0 0-4 45 0 0 4 8 0 0-40zm58-51l-8 2-10 1-11 2-12 1-12 1-11 0 2 7 5-1 5 0 5 0 5 0 5-1 5 0 0 10-40 0 0 7 32 0-5 4-5 5-6 4-6 3-6 3-6 3 2 3 3 3 6-3 7-4 7-5 6-5 6-5 5-6 0 20 8 0 0-20 5 6 6 5 6 5 7 4 7 4 7 3 2-3 2-3-6-3-6-3-6-3-6-4-5-4-5-4 32 0 0-7-40 0 0-11 5-1 6-1 5 0 5-1 4-1 5-1z"/><path id="gkj" d="m5-24l25 0 0-8-25 0z"/><path id="gkk" d="m31 1l3 0 4-1 4-1 3-2 3-3-4-6-4 3-4 2-5 1-4-1-4-2-4-3-2-4-2-5 0-6 0-6 2-5 2-4 4-3 4-2 5-1 4 1 3 1 3 3 5-6-3-3-4-2-4-1-5-1-6 1-7 3-5 4-4 5-3 7-1 9 1 8 3 7 3 6 6 4 6 2 7 1z"/><path id="gkl" d="m14-39l5-2 1-5-1-5-5-2-5 2-2 5 2 5 5 2zm0 40l5-2 1-5-1-5-5-2-5 2-2 5 2 5 5 2z"/><path id="gkm" d="m1 18l7 0 30-97-7 0z"/><path id="gkn" d="m38 1l4 0 4-1 4-1 4-2 3-3 3-3-5-6-3 3-3 2-3 2-4 1-4 0-6-1-6-2-5-5-3-6-2-7-1-9 1-8 2-8 4-6 4-4 6-3 6 0 5 0 4 1 3 3 3 2 5-6-2-2-3-2-3-2-3-1-4-1-5-1-9 2-7 3-7 6-5 7-3 9-1 11 1 11 3 10 5 7 6 6 8 3 9 1z"/><path id="gko" d="m36 1l7 0 7-3 5-4 4-6 2-8 1-10 0-43-8 0 0 43-1 8-2 6-3 4-3 3-4 2-5 0-4 0-5-2-3-3-3-4-1-6-1-8 0-43-9 0 0 43 1 10 2 8 4 6 6 4 6 3 7 0z"/><path id="gkp" d="m23 1l6 0 5-2 4-2 3-4 2-4 0-4-1-4-1-4-3-3-4-2-3-2-4-1-5-2-4-2-2-2-1-4 1-3 1-2 4-2 4-1 5 1 4 2 3 2 5-6-4-2-4-2-4-1-5-1-6 1-4 1-4 3-3 3-1 4-1 4 1 4 2 3 2 3 4 2 3 2 4 1 4 2 4 2 3 3 1 4 0 3-2 3-4 2-4 0-4 0-3-1-4-1-3-2-2-2-5 6 4 2 3 2 4 2 5 1 4 0z"/><path id="gkq" d="m31 1l4 0 4-1 4-1 3-1 3-2-3-6-3 2-4 1-3 1-4 0-5-1-4-1-3-3-3-4-2-5-1-5 37 0 0-5 0-7-2-7-3-5-5-4-5-2-6-1-7 1-5 3-5 4-4 6-3 7-1 8 1 8 3 7 4 6 5 4 6 2 7 1zm-17-33l1-5 2-4 2-3 3-2 4-2 4 0 4 0 3 2 3 2 2 3 1 4 0 5z"/><path id="gkr" d="m9 0l9 0 0-35 3-5 2-3 3-3 3-1 3-1 5 1 2-7-6-2-3 1-4 1-3 3-3 3-2 4-1-10-8 0z"/><path id="gks" d="m22 1l4 0 3-1 4-2 3-2 4-2 1 6 7 0 0-33 0-7-2-5-2-5-4-3-4-2-6-1-5 1-4 0-4 2-3 1-3 2-3 1 4 7 3-2 4-2 4-2 5 0 5 1 3 2 2 3 1 3 0 5-10 1-9 2-6 3-5 4-2 4-1 6 0 4 2 4 2 3 4 2 3 2 5 0zm2-7l-3-1-4-1-2-3 0-4 0-3 2-3 3-2 5-2 6-2 8-1 0 15-4 3-3 2-4 1-4 1z"/><path id="gkt" d="m28 1l4 0 3-1 3-2 3-2 3-2 1 6 8 0 0-80-9 0 0 21 0 10-3-3-4-2-4-1-4-1-6 1-6 3-5 4-3 6-3 7-1 8 1 8 2 7 3 6 5 4 5 2 7 1zm2-7l-5-1-3-2-3-3-3-4-1-5 0-6 0-6 2-5 2-4 3-3 4-2 4-1 4 0 3 1 3 2 4 3 0 28-4 3-3 3-4 1-3 1z"/><path id="gku" d="m30 1l7-1 6-2 5-4 4-6 2-7 1-8-1-9-2-7-4-5-5-4-6-3-7-1-6 1-6 3-5 4-4 5-3 7-1 9 1 8 3 7 4 6 5 4 6 2 6 1zm0-7l-4-1-4-2-3-3-2-4-2-5 0-6 0-6 2-5 2-4 3-3 4-2 4-1 5 1 4 2 3 3 2 4 2 5 0 6 0 6-2 5-2 4-3 3-4 2-5 1z"/><path id="gkv" d="m19 1l5-1-1-6-2 0-3-4 0-70-9 0 0 69 1 5 1 4 3 2 5 1z"/><path id="gkw" d="m10 0l19 0 10-1 8-3 7-6 5-7 3-9 1-11-1-11-3-9-5-7-7-5-8-3-11-1-18 0zm9-8l0-58 9 0 8 1 6 3 5 4 4 5 2 8 0 8 0 9-2 7-4 6-5 4-6 3-8 0z"/><path id="gkx" d="m9 0l9 0 0-14 10-12 16 26 10 0-20-32 18-22-10 0-23 28-1 0 0-54-9 0z"/><path id="gky" d="m26 1l5 0 5-2-2-7-6 2-4-1-2-2-2-3 0-4 0-31 15 0 0-7-15 0 0-16-8 0-1 16-8 0 0 7 8 0 0 30 0 5 1 5 2 3 3 3 4 2 5 0z"/><path id="gkz" d="m9 23l9 0 0-19 0-9 4 3 4 2 3 1 4 0 6-1 6-2 5-4 3-6 3-7 1-9-1-8-2-7-3-5-4-4-5-3-7-1-4 1-3 1-4 2-3 2-3 2-1-6-8 0zm23-29l-3-1-4-1-3-1-4-3 0-29 4-3 4-2 3-2 4 0 4 1 4 2 3 3 2 4 1 4 0 6 0 6-2 6-2 4-3 3-4 2-4 1z"/><path id="gla" d="m9-75l0 80 7 0 0-8 67 0 0 7 8 0 0-79zm7 65l0-58 19 0 0 11-1 10-2 8-3 6-5 5-6 4 4 6 8-4 5-6 4-8 2-9 1-11 0-12 14 0 0 31 1 5 1 4 3 2 4 0 5 0 6 0 6 0 0-7-6 1-5 0-5 0-2-4 0-32 19 0 0 58z"/><path id="glb" d="m20-61l26 0 0 19-26 0zm34 0l27 0 0 19-27 0zm-30 29l-7 3 2 4 2 4 3 3 2 3 3 3 3 3-3 2-4 2-4 2-5 1-6 2-6 1 3 4 2 3 6-2 6-2 5-2 5-2 4-2 3-2 8 3 7 3 9 2 9 2 11 1 11 1 1-4 2-4-10 0-10-1-9-2-9-1-7-3-7-3 3-4 3-4 1-4 2-4 0-5 1-4 34 0 0-33-34 0 0-16-8 0 0 16-34 0 0 33 34 0 0 4-1 3-1 4-1 4-3 3-2 3-3-2-3-3-2-3-2-3-2-3-2-4z"/><path id="glc" d="m46-84l0 37-40 0 0 8 40 0 0 47 8 0 0-47 41 0 0-8-41 0 0-37z"/><path id="gld" d="m18-62l20 0 0 8-20 0zm0-12l20 0 0 7-20 0zm-7-6l0 32 34 0 0-32zm59 27l-1 12-1 10-3 8-4 6-6 5-9 4 3 5 10-4 7-6 5-7 3-9 1-11 1-13zm3 34l3 3 4 2 3 3 3 3 3 2 2 3 4-5-2-2-3-3-3-2-3-3-3-2-4-3zm-61-11l0 7-1 6-1 6-1 6-3 5-3 4 6 4 2-3 2-3 1-4 1-4 1-4 5 6 6 4 7 3 8 2 9 1 10 0 33 0 2-7-4 0-6 1-8 0-7 0-6 0-3 0-6-1-6 0-5 0-5-1-4-1-4-1 0-15 16 0 0-5-16 0 0-11 18 0 0-6-45 0 0 6 20 0 0 27-3-3-2-3-2-4 0-3 1-5 0-4zm42-34l0 42 6 0 0-36 24 0 0 36 7 0 0-42-19 0 2-4 2-5 20 0 0-6-46 0 0 6 18 0-1 5-2 4z"/><path id="gle" d="m46-35l0 7-40 0 0 8 40 0 0 19-2 2-3 0-4 0-5 0-5 0 2 3 1 4 5 0 5 0 3-1 3 0 3-1 4-2 1-5 0-19 40 0 0-8-40 0 0-4 4-2 5-2 4-2 4-3 4-3 3-3-4-4-2 1-49 0 0 6 41 0-4 2-3 2-4 2-3 2-4 1zm-4-47l3 3 2 4 2 4 1 4-22 0 4-2-2-3-2-4-3-4-3-3-6 3 2 3 3 3 2 4 2 3-17 0 0 19 7 0 0-13 70 0 0 13 8 0 0-19-17 0 3-4 2-3 3-3 2-4-8-2-1 3-2 3-2 3-2 4-3 3-16 0 5-2-1-4-2-4-2-4-3-4z"/><path id="glf" d="m23-56l5 3 5 4 5 3 4 4 4 4 4 3 5-6-4-3-4-3-4-4-5-4-5-3-5-3zm-13 43l3 7 8-3 9-3 10-3 11-4 10-4 11-3-2-7-11 3-11 4-10 4-11 3-9 3-8 3zm2-64l0 7 69 0 0 21-1 17 0 13-1 9-1 5-2 3-4 2-2 0-4 0-4 0-5 0 1 3 1 4 4 0 5 0 4 0 3 0 5-1 4-4 1-3 2-7 0-9 1-14 0-18 1-23 0-5z"/><path id="glg" d="m17-40l-1 4 0 5-1 5-1 4-1 4 27 0-5 4-5 4-5 4-6 3-6 3-6 2 5 6 6-3 6-3 6-4 6-4 5-4 5-5 0 23 7 0 0-26 29 0-1 6-1 4 0 3-1 1-4 1-3 0-4 0-4 0 2 7 5 0 4 0 3 0 4-1 3-2 1-1 1-3 1-3 1-4 0-5 1-6 0-3-37 0 0-10 34 0 0-22-74 0 0 7 33 0 0 9zm6 6l23 0 0 10-24 0zm30-15l27 0 0 9-27 0zm-32-35l-2 4-2 5-3 4-3 4-3 4-3 3 6 4 3-3 2-3 3-4 3-4 5 0 2 5 2 4 1 3 7-2-2-4-2-6 16 0 0-5-26 0 2-4 1-4zm39 0l-2 4-1 4-3 5-2 4-3 3-3 3 7 4 2-3 3-3 2-3 2-4 6 0 4 5 2 4 2 4 7-3-2-3-2-3-2-4 18 0 0-5-31 0 2-4 1-4z"/><path id="glh" d="m4-43l0 8 92 0 0-8z"/><path id="gli" d="m11-78l3 3 3 3 3 4 3 3 2 3 6-5-3-3-2-3-4-3-3-3-3-3zm-7 25l0 8 14 0 0 35-2 5-3 4 4 6 1-1 1-1 3-2 3-3 5-4 8-6-3-6-10 7 0-42zm70-4l0 23-17 0 0-4 0-19zm-25-27l0 19-13 0 0 8 13 0 0 19 0 4-15 0 0 8 15 0-1 5-1 6-2 5-3 5-3 4-5 4 6 5 5-5 4-5 3-5 2-6 1-7 1-6 18 0 0 34 8 0 0-34 14 0 0-8-14 0 0-23 12 0 0-8-12 0 0-19-8 0 0 19-17 0 0-19z"/><path id="glj" d="m81 7l-22-45 22-45-6-2-22 47 22 47zm15 0l-21-45 21-45-5-2-22 47 22 47z"/><path id="glk" d="m46-84l0 18-36 0 0 47 7 0 0-6 29 0 0 33 8 0 0-33 28 0 0 6 8 0 0-47-36 0 0-18zm-29 52l0-27 29 0 0 27zm65 0l-28 0 0-27 28 0z"/><path id="gll" d="m59-32l4 4 3 4 3 3 5-3-2-3-4-4-4-4zm-36 12l0 7 55 0 0-7-25 0 0-16 20 0 0-7-20 0 0-14 23 0 0-7-52 0 0 7 22 0 0 14-19 0 0 7 19 0 0 16zm-14-60l0 88 7 0 0-5 68 0 0 5 7 0 0-88zm7 76l0-68 68 0 0 68z"/><path id="glm" d="m59-15l5 4 5 4 5 4 5 4 4 4 3 3 8-5-4-3-5-4-5-4-5-3-5-4-5-4zm-26-4l-3 4-4 4-5 4-5 4-5 3-5 3 3 2 3 3 5-3 5-4 5-4 5-4 5-4 4-5zm-24-44l0 7 19 0 0 24-23 0 0 8 91 0 0-8-24 0 0-24 20 0 0-7-20 0 0-20-8 0 0 20-28 0 0-20-8 0 0 20zm27 31l0-24 28 0 0 24z"/><path id="gln" d="m26-61l3 3 2 4 2 4 2 3 7-3-2-3-2-4-3-3-2-4zm43-2l-2 4-2 4-2 5-2 4-49 0 0 13 0 6 0 6-1 6-2 7-2 6-3 6 6 5 4-7 2-7 2-7 1-7 1-7 0-6 0-7 73 0 0-7-25 0 2-4 3-3 2-4 2-4zm-27-19l3 3 2 4 2 3-38 0 0 7 79 0 0-7-33 0 1 0-2-4-3-4-3-4z"/><path id="glo" d="m30-44l39 0 0 15-39 0zm-7-6l0 28 13 0-2 6-3 5-4 4-5 3-8 3-9 2 2 3 2 4 11-3 8-4 6-4 5-5 3-7 2-7 12 0 0 19 0 4 1 3 2 2 4 1 5 0 4 0 8 0 4 0 4 0 3-1 2-2 1-3 1-5 1-5-7-3-1 6 0 4-2 2-2 0-5 0-6 0-5 0-4-1-1-2 0-19 14 0 0-28zm53-33l-1 4-2 3-2 4-2 4-2 3-13 0 0-19-8 0 0 19-18 0 6-4-2-3-3-4-3-3-3-4-6 4 3 3 3 4 2 4 2 3-20 0 0 22 8 0 0-15 70 0 0 15 8 0 0-22-19 0 3-4 2-3 3-4 2-4z"/><path id="glp" d="m12-79l0 32-1 8 0 8-1 9-1 9-2 9-3 8 6 4 4-9 2-9 2-10 1-9 0-10 0-8 0-25 76 0 0-7zm37 12l0 5 0 4 0 4 0 4-23 0 0 7 22 0-1 9-2 9-4 8-5 8-6 6-9 5 5 6 9-6 8-7 5-9 4-9 2-9 2-11 26 0-1 12-1 10-1 8-1 5-1 4-1 2-4 1-4 0-5 0-6 0 2 3 0 4 5 0 4 0 4 0 3 0 4-1 3-2 2-3 2-5 1-6 1-9 1-12 0-15 1-3-34 0 1-4 0-4 0-4 0-5z"/><path id="glq" d="m19 7l6 2 22-47-22-47-6 2 22 45zm-15 0l5 2 22-47-22-47-5 2 21 45z"/><path id="glr" d="m30-32l-2 0 4-4 3-3 3-4 23 0 3 4 3 3 3 4zm43-50l-2 4-2 4-3 4-2 3-12 0 1-4 1-4 1-4 1-5-8 0-1 4-1 4-1 5-1 4-13 0 5-3-3-3-3-5-3-4-6 3 3 4 3 4 2 4-17 0 0 7 29 0-2 3-3 4-2 3-28 0 0 7 22 0-3 4-4 3-4 3-4 2-5 3-5 2 5 6 4-2 4-2 3-2 3-2 4-2 0 26 0 4 1 2 2 3 3 1 4 1 6 0 4 0 6 0 8 0 6 0 4 0 5-1 4-1 2-2 2-3 1-4 1-6-7-2-1 5 0 3-2 3-2 1-3 0-4 0-5 0-6 0-5 0-5 0-3 0-6 0-2-2-1-2 0-22 30 0-1 5 0 4-1 1-4 1-2 0-4 0-5 0 2 6 5 0 4 0 4 0 6-2 1-2 1-2 1-4 0-5 1-6 0-2 3 3 4 2 3 2 4 2 4 2 3 2 3-4 3-3-6-1-5-3-5-2-5-4-4-3-4-4 25 0 0-7-51 0 2-3 2-4 2-3 38 0 0-7-15 0 2-3 2-3 2-3 2-3z"/><path id="gls" d="m24 20l6-3-4-7-4-8-2-8-2-8-1-9 0-8 0-9 1-8 2-8 2-8 4-8 4-7-6-3-4 8-4 8-3 8-2 8-1 9-1 10 1 9 1 9 2 9 3 8 4 8 4 8z"/><path id="glt" d="m9 0l40 0 0-8-15 0 0-65-7 0-3 1-3 2-4 1-5 1 0 6 13 0 0 54-16 0z"/><path id="glu" d="m10 20l4-8 4-8 3-8 2-9 1-9 1-9-1-10-1-9-2-8-3-8-4-8-4-8-6 3 4 7 3 8 3 8 2 8 1 8 0 9 0 8-1 9-2 8-3 8-3 8-4 7z"/><path id="glv" d="m14 1l5-2 1-5-1-5-5-2-5 2-2 5 2 5 5 2z"/><path id="glw" d="m3-47l8 0 0 47 9 0 0-47 11 0 0-7-11 0 0-9 0-5 2-3 2-2 4-1 6 2 2-7-5-1-5-1-4 1-4 1-3 3-3 3-1 5 0 5 0 9-8 0z"/><path id="glx" d="m6-76l4 3 3 3 3 4 3 3 2 3 6-4-2-3-3-4-3-3-4-3-3-3zm40 42l35 0 0 16-35 0zm-21-14l-21 0 0 7 14 0 0 31-4 1-3 3-4 3-3 3 4 6 4-4 4-4 3-2 3-1 3 1 3 2 4 2 4 2 4 1 4 1 5 1 5 0 6 0 5 0 6 0 7 0 6 0 6-1 4 0 2-7-5 0-6 1-6 0-7 0-6 0-6 0-6 0-4 0-5 0-4-1-4-1-3-2-5-3-4-2zm14 8l0 29 49 0 0-29-21 0 0-13 28 0 0-7-28 0 0-13 4 0 4-1 4-1 4 0 3-1 3-1-3-6-7 1-8 2-9 1-9 1-9 1-9 1 2 6 4 0 3 0 4-1 4 0 4 0 4-1 0 12-29 0 0 7 29 0 0 13z"/><path id="gly" d="m26-49l2 6 3 6 2 6 1 6 2 5 1 5 7-3-1-4-2-6-2-6-2-6-2-6-2-6zm22-6l2 6 1 6 2 6 1 6 2 6 0 5 8-2-1-5-2-6-1-6-2-6-1-6-2-5zm-1-28l2 4 2 4 1 4-40 0 0 27 0 8 0 8-1 8-2 9-2 8-3 7 6 5 4-8 2-9 2-9 1-10 1-9 0-8 0-20 74 0 0-7-33 0-2-3-1-4-2-3-2-4zm-26 79l0 7 75 0 0-7-28 0 5-8 4-8 4-9 3-8 3-9 3-8-8-3-2 9-3 9-3 9-4 9-5 9-4 8z"/><path id="glz" d="m46-46l0 18 0 5-2 6-4 5-8 5-11 5-16 4 5 6 16-5 12-5 8-6 5-6 3-7 0-7 0-18zm8 35l7 3 6 3 6 4 6 3 5 3 4 3 5-6-4-3-6-3-6-3-6-3-6-3-6-3zm-37-49l0 47 8 0 0-39 51 0 0 39 8 0 0-47-36 0 2-3 2-4 2-5 40 0 0-6-87 0 0 6 38 0-1 5-2 4-2 3z"/><path id="gma" d="m39-33l21 0 0 11-21 0zm0-7l0-11 21 0 0 11zm0 24l21 0 0 12-21 0zm-33-61l0 7 38 0 0 4-1 4-1 4-32 0 0 66 8 0 0-5 64 0 0 5 8 0 0-66-41 0 4-12 41 0 0-7zm12 73l0-47 14 0 0 47zm64 0l-15 0 0-47 15 0z"/><path id="gmb" d="m46-84l0 4 0 5 0 4 0 5-1 5 0 6-39 0 0 7 37 0-2 10-4 9-5 9-7 8-9 8-12 6 3 3 3 3 11-6 9-8 7-8 6-9 4-9 3-10 4 11 6 10 6 9 7 8 8 7 9 5 3-4 3-3-9-5-9-6-7-8-6-9-5-10-4-11 38 0 0-7-41 0 0-6 1-5 0-4 0-5 0-5 0-4z"/><path id="gmc" d="m46-83l0 81-2 2-3 0-4 0-5 0-5 0 2 4 1 4 5 0 5 0 4 0 3-1 2 0 3-2 2-3 0-4 0-81zm24 26l5 7 4 8 3 8 3 8 3 7 2 7 8-3-2-7-3-7-3-8-4-8-4-7-4-8zm-50-2l-1 7-2 7-3 8-3 7-4 6-4 6 4 2 3 2 5-6 3-7 4-7 2-8 3-8 2-8z"/><path id="gmd" d="m45-79l0 53 7 0 0-46 31 0 0 46 8 0 0-53zm-30-1l3 3 3 3 2 4 2 3 6-4-2-3-2-3-3-4-3-3zm49 15l0 20-1 8-1 8-3 9-5 8-8 7-11 7 5 6 7-4 6-5 5-5 4-5 3-5 2-5 0 19 1 4 1 3 3 1 5 0 9 0 3 0 3-1 2-3 1-3 1-5 0-7-6-3 0 7-1 5 0 3-1 1-2 1-8 0-4-4 0-25-5 0 1-4 1-5 0-4 0-4 0-20zm-58-2l0 7 24 0-3 6-4 7-4 5-5 6-5 4-5 4 2 4 1 4 3-3 3-2 3-3 3-3 0 39 7 0 0-43 3 3 3 4 2 3 2 3 5-6-3-2-3-4-4-5-3-3 2-4 3-3 2-4 1-4 2-4 2-3-4-3-2 0z"/><path id="gme" d="m38-28l4 1 4 1 4 2 4 1 4 2 3 1 3-5-3-1-3-2-5-1-4-1-4-2-4 0zm-10 13l7 1 7 1 7 2 7 1 7 2 5 2 4-6-6-1-6-2-7-2-8-1-7-1-7-1zm-20-65l0 88 8 0 0-4 68 0 0 4 8 0 0-88zm8 77l0-70 68 0 0 70zm25-68l-2 4-4 4-3 4-4 3-5 4-4 2 5 5 4-2 3-3 3-2 3 3 4 3 3 3-4 2-4 1-5 2-5 1-4 1-5 1 4 7 5-2 5-1 5-2 5-2 5-2 5-3 4 3 4 2 5 1 5 2 4 1 5 1 4-5-4-1-4-1-5-1-4-2-4-1-4-2 4-3 3-2 3-3 3-3 3-3 2-4-4-2-1 0-26 0 4-6zm-3 15l0-1 26 0-3 3-3 3-3 2-4 3-4-3-3-2-4-3-2-2z"/><path id="gmf" d="m84-49l0 17-20 0 0-5 0-5 0-7zm0-7l-20 0 0-16 20 0zm-28-23l0 37 0 7 0 8-1 8-2 8-3 8-4 7 7 4 3-5 2-5 2-5 1-6 1-6 1-6 21 0 0 23-2 2-2 0-4 0-5 0 1 3 1 4 5 0 4 0 3 0 3-1 3-3 1-5 0-77zm-34-3l2 5 2 5-17 0 0 64-1 6-3 3 4 6 2-1 2-2 3-1 5-2 7-4 10-4 2 4 1 4 7-4-1-3-2-4-2-5-3-5-2-4-3-4-7 2 3 4 2 4 2 4-18 8 0-25 31 0 0-41-13 0-2-4-2-4-2-3zm-5 33l24 0 0 11-24 0zm0-6l0-10 24 0 0 10z"/><path id="gmg" d="m44-45l4 2 4 3 4 2 3 3 3-4-2-3-4-2-4-3-4-2zm-7 9l4 2 4 3 4 3 3 2 3-4-2-3-4-2-4-3-4-2zm31 26l5 2 4 4 4 3 4 3 3 3 3 3 5-5-3-2-3-4-4-3-5-3-4-3-4-3zm-58-67l4 3 3 3 4 4 3 3 2 2 5-5-2-3-3-3-4-3-3-3-4-3zm27 18l0 6 48 0-1 4-2 5-1 3 6 2 1-4 2-3 1-4 1-4 2-4-5-2-1 1-20 0 0-9 21 0 0-7-21 0 0-9-7 0 0 9-21 0 0 7 21 0 0 9zm27 10l0 12 0 4-1 4 0 4-28 0 0 7 25 0-2 3-3 4-4 4-5 3-6 4-7 3 5 5 8-3 7-5 5-4 5-5 3-5 2-4 27 0 0-7-25 0 1-4 0-4 0-4 0-12zm-60-4l0 8 15 0 0 36-2 6-3 4 4 5 1-1 1-2 3-2 3-3 5-4 7-5-3-7-9 8 0-43z"/><path id="gmh" d="m4-1l2 8 7-2 7-1 8-2 8-1 9-2 9-1-1-8-14 3 0-39 14 0 0-7-14 0 0-31-8 0 0 78-11 2 0-60-8 0 0 61zm54-83l0 75 0 5 1 3 2 3 2 2 3 0 4 1 4 0 7 0 4 0 4-1 3-1 2-3 2-4 1-6 0-7-4-1-3-2 0 6-1 5 0 3-1 2-2 1-1 1-5-1-5 1-4 0-4-2-1-5 0-31 5-2 5-3 5-3 4-2 5-3 4-3-6-6-3 2-4 3-3 2-4 3-4 2-4 2 0-36z"/><path id="gmi" d="m10-67l0 75 7 0 0-68 29 0 0 7-2 8-3 7-5 7-7 7-9 6 3 3 2 3 7-4 5-5 4-4 4-5 3-4 2-5 4 4 5 5 5 4 4 5 3 4 3 3 6-4-3-4-4-5-5-5-6-5-5-5-5-4 1-5 0-4 1-5 29 0 0 58-3 2-2 1-4 0-4-1-6 0 2 4 1 4 5 0 5 0 3 0 3-1 3 0 2-2 2-3 0-4 0-65-36 0 0-17-8 0 0 17z"/><path id="gmj" d="m33-63l-3 3-4 4-4 3-4 3-5 3-4 3 5 5 5-2 5-4 4-3 5-4 4-5 3-4zm26 4l4 3 5 4 5 3 5 4 3 3 4 3 5-5-3-3-4-3-5-4-5-3-5-3-4-3zm-9 5l-6 7-6 7-8 6-8 5-9 5-9 4 2 3 3 3 3-2 3-1 4-2 3-2 0 29 7 0 0-3 41 0 0 3 8 0 0-30 3 2 3 1 4 2 3 2 2-4 3-3-8-3-8-4-7-4-7-5-6-5-6-6 2-3zm-21 52l0-17 41 0 0 17zm1-24l4-2 3-3 4-3 3-3 3-3 3-4 4 4 3 3 4 3 3 3 4 3 4 2zm13-57l2 4 2 4-39 0 0 18 8 0 0-11 68 0 0 11 8 0 0-18-36 0-1-3-2-3-2-4z"/><path id="gmk" d="m47-60l2 4 2 4 1 4 1 3 5-2-1-3-2-4-2-4-2-3zm30-1l-2 3-2 4-2 4-2 3 4 2 2-3 2-4 3-3 2-4zm-73 48l2 7 5-1 4-2 5-2 5-2 5-2 4-2-1-6-10 3 0-33 10 0 0-7-10 0 0-23-7 0 0 23-11 0 0 7 11 0 0 36zm40-68l3 4 2 4 2 3 7-3-2-3-3-4-3-4zm-7 11l0 34 54 0 0-34-14 0 3-3 3-4 2-5-7-2-2 3-2 4-2 4-3 3zm7 6l17 0 0 22-17 0zm23 0l17 0 0 22-17 0zm-18 54l30 0 0 7-30 0zm0-6l0-8 30 0 0 8zm-7-14l0 38 7 0 0-5 30 0 0 5 7 0 0-38z"/><path id="gml" d="m57-72l0 78 7 0 0-7 20 0 0 7 7 0 0-78zm7 64l0-56 20 0 0 56zm-44-75l-1 18-14 0 0 7 14 0 0 13-2 11-2 11-3 10-4 9-5 7 3 2 3 3 6-8 4-9 3-11 2-12 2-12 0-14 16 0-1 18 0 13-1 10 0 7-1 5-1 2-4 2-4 0-6 0 1 3 1 4 4 0 4 0 4 0 4-1 2-3 2-3 1-5 1-8 0-12 1-15 0-20 0-4-22 0 0-18z"/><path id="gmm" d="m68-69l-2 3-3 2-3 2-3 2-4 3-3 1-4-2-4-2-3-2-3-3-3-3 1-1zm-31-15l-3 4-4 5-4 4-5 5-7 4-6 3 5 6 4-3 4-2 3-2 4-3 2 2 3 3 3 2 3 2 3 2-6 3-7 2-6 2-7 1-6 1-7 1 2 4 1 4 8-2 7-1 7-2 8-3 7-3 7-3 6 3 7 3 7 2 7 2 8 1 8 1 2-3 2-4-7-1-7-1-6-1-7-2-6-2-6-2 4-3 5-3 4-3 4-4 3-4 3-4-5-3-1 1-35 0 3-4 2-4zm-12 71l21 0 0 11-21 0zm0-6l0-10 21 0 0 10zm50 6l0 11-21 0 0-11zm0-6l-21 0 0-10 21 0zm-58-17l0 44 8 0 0-3 50 0 0 3 8 0 0-44z"/><path id="gmn" d="m9-77l4 2 5 2 4 2 3 3 3 2 5-6-3-2-4-3-4-2-4-2-4-2zm-5 27l4 2 4 3 4 2 4 2 3 2 4-6-3-2-4-2-4-2-4-3-4-1zm3 52l6 5 3-5 4-5 3-6 3-5 3-6 3-6-6-4-3 5-3 6-4 6-3 6-3 5-3 4zm48-84l2 4 3 5 2 4 1 4 7-3-1-4-2-4-3-4-2-4zm-22 17l0 7 27 0 0 23-23 0 0 7 23 0 0 26-30 0 0 7 66 0 0-7-28 0 0-26 22 0 0-7-22 0 0-23 26 0 0-7z"/><path id="gmo" d="m19-51l0 47-14 0 0 8 90 0 0-8-39 0 0-31 32 0 0-8-32 0 0-26 36 0 0-8-83 0 0 8 40 0 0 65-23 0 0-47z"/><path id="gmp" d="m39-84l-1 4-1 4-2 4-1 4-28 0 0 7 24 0-3 6-4 6-4 6-5 5-5 5-5 4 2 4 2 3 3-2 3-2 3-3 2-3 0 40 8 0 0-49 2-3 2-3 2-4 2-3 2-4 2-3 55 0 0-7-52 0 2-5 1-5 2-4zm21 28l0 19-23 0 0 7 23 0 0 29-27 0 0 7 61 0 0-7-27 0 0-29 23 0 0-7-23 0 0-19z"/><path id="gmq" d="m10-77l3 3 3 3 3 3 3 3 2 3 6-5-3-3-3-3-3-3-3-3-3-2zm32 48l0 37 7 0 0-4 33 0 0 4 8 0 0-37-20 0 0-17 26 0 0-7-26 0 0-19 4-1 5-1 4-1 4-1 4-1-6-6-6 1-8 2-8 2-9 1-9 1-9 1 3 7 3-1 4 0 4-1 4 0 4-1 4 0 0 18-26 0 0 7 26 0 0 17zm7 26l0-19 33 0 0 19zm-45-50l0 8 14 0 0 35-1 4-2 3-2 2 4 6 1-1 2-1 2-2 4-3 5-5 8-5-3-7-11 8 0-42z"/><path id="gmr" d="m18-56l26 0 0 10-26 0zm-7-6l0 22 40 0 0-22zm49-16l0 86 7 0 0-79 19 0-2 4-2 4-1 5-3 5-2 4-2 5 5 4 3 4 3 4 1 4 1 3 0 4 0 4-3 4-4 1-3 0-5 0 2 3 0 4 5 0 4 0 7-3 2-2 1-3 1-3 0-5 0-3-1-4-1-4-2-4-4-5-4-4 2-5 3-5 2-5 2-5 3-5 2-5-6-4-1 1zm-56 61l1 7 23-2 0 12-2 1-4 0-7 0 3 7 6 0 4-1 3 0 3-3 1-4 0-12 21-1 1-6-22 1 0-2 3-2 4-2 3-3 4-2 3-2-5-4-1 0-37 0 0 6 29 0-4 2-3 3-3 2 0 4zm21-65l2 4 1 4-23 0 0 6 52 0 0-6-21 0-2-5-3-5z"/><path id="gms" d="m4-14l1 6 4-1 4-1 4-1 4-1 4-1 5-2-1-6-5 1-4 2-5 1-4 1-4 1-3 1zm69-39l3 3 3 3 3 3 3 4 3 3 2 2 5-4-2-3-2-2-3-4-4-3-3-3-3-3zm-13-3l-3 3-3 3-3 3-3 3-3 3-3 2 5 5 3-2 3-3 4-4 3-3 3-4 3-3zm-49-9l-1 5 0 7-1 6 0 6-1 6-1 5 26 0-1 9-1 7-1 6 0 4-1 3-1 1-4 2-3-1-4 0-4 0 2 7 4 0 5 0 3 0 4-1 3-2 1-2 1-4 1-5 1-7 1-9 1-12 0-3-6 0 1-6 0-7 1-7 1-8 0-7 1-7-31 0 0 7 23 0 0 6-1 6 0 6-1 6 0 6-1 5-12 0 0-4 1-5 0-5 1-5 0-4 0-5zm36 9l2-1 2 0 4-1 7 0 9-1 14-1 4 5 5-3-2-3-2-4-3-4-4-3-3-4-3-3-6 3 3 3 3 3 3 4-24 2 3-3 2-3 3-3 2-3 2-3 2-3-7-3-3 5-3 4-3 4-2 3-2 2-5 4 2 7zm14 14l-2 5-3 4-3 5-4 4-4 3-5 3 6 5 3-2 3-3 3-3 2 3 2 3 3 3 2 3-4 2-4 3-4 2-5 1-4 2-5 1 4 6 5-1 5-2 4-2 5-2 4-3 4-2 3 2 4 3 3 2 4 2 4 1 5 2 4-6-4-2-4-1-4-2-3-1-4-3-3-2 3-3 3-3 3-4 2-3 2-4 2-5-5-2-1 1-19 0 2-5 2-4zm-1 16l19 0-2 3-2 4-3 3-3 3-3-3-2-4-2-3-2-3z"/><path id="gmt" d="m16 6l2-1 4 0 6-1 11-1 16-2 23-1 3 4 3 4 6-4-2-4-3-5-4-4-4-5-5-4-4-4-7 3 3 3 3 3 3 3 3 3-46 3 4-3 3-4 4-3 3-4 4-4 3-4 44 0 0-8-83 0 0 8 29 0-4 4-3 4-3 4-3 3-3 2-1 2-4 3-4 2 2 4 1 4zm34-90l-5 7-6 6-8 6-8 6-9 5-10 4 3 3 3 4 3-2 4-1 3-2 3-2 3-2 0 6 48 0 0-7-46 0 4-3 4-3 4-3 4-3 3-3 3-4 3 3 4 4 4 3 4 3 4 3 5 3 3 2 4 2 3 2 4 1 3 2 3-4 2-3-8-3-8-4-7-4-7-5-6-5-5-5 3-4z"/><path id="gmu" d="m54-79l2 3 2 4 2 4 2 3 1 4 1 3 7-3-1-3-2-4-1-3-2-4-2-4-3-3zm-43 2l3 3 3 3 3 3 2 4 2 2 6-4-2-3-3-3-3-3-2-3-3-3zm72-1l-2 10-2 10-3 10-3 9-4 8-5 8-5-8-4-8-3-8-3-9-3-10-2-11-7 2 2 11 3 11 3 10 4 9 5 9 5 8-4 4-4 3-4 4-5 3-5 3-6 2 5 7 5-3 5-3 5-3 5-4 4-3 4-4 4 4 4 4 4 3 5 3 6 3 5 2 3-3 3-3-6-2-5-3-5-3-5-4-4-3-4-4 5-9 5-9 4-9 3-11 3-10 2-12zm-78 25l0 8 14 0 0 35-1 4-2 4-2 2 5 5 1-1 1-1 3-2 3-3 6-4 7-5-2-7-12 9 0-44z"/><path id="gmv" d="m26-73l48 0 0 13-48 0zm-8-7l0 27 64 0 0-27zm-12 36l0 7 21 0-1 4-2 4-1 3-1 4-2 3 53 0-1 6-2 5-1 4-1 2-2 2-4 1-3 0-4 0-5 0-6-1 2 4 1 3 5 1 5 0 4 0 3 0 5-1 4-2 1-2 2-3 1-4 2-5 1-6 1-7 1-4-50 0 3-11 58 0 0-7z"/><path id="gmw" d="m28 1l6 0 6-2 5-3 3-4 2-5 1-5-1-4-1-4-2-4-2-2-3-3-3-2 2-3 3-3 2-4 2-4 0-4 0-5-2-5-3-4-4-3-5-2-6 0-5 0-5 2-4 3-3 3-2 5-1 5 1 5 1 3 2 4 3 3 3 2 0 1-3 2-3 2-3 3-2 4-2 4 0 5 0 5 3 5 3 4 5 3 6 2 6 0zm5-41l-4-2-4-2-4-2-2-3-2-3-1-4 1-4 2-3 2-2 3-2 4-1 4 1 4 2 2 3 2 3 0 4 0 4-1 4-3 4-3 3zm-5 34l-4 0-4-1-3-2-2-3-2-3 0-4 0-4 2-4 2-3 2-3 4-3 5 2 4 3 4 2 3 3 2 4 1 4 0 4-2 4-3 2-4 2-5 0z"/><path id="gmx" d="m4 0l46 0 0-8-20 0-4 0-4 0-4 1 8-8 7-8 6-8 4-7 3-8 1-7-1-6-2-5-3-5-4-3-5-2-6-1-5 1-4 1-3 1-4 2-3 3-3 3 5 5 4-3 3-3 4-2 4 0 5 0 3 2 3 2 2 3 1 3 0 4-1 7-3 7-4 7-7 8-8 9-11 10z"/><path id="gmy" d="m28 1l6-1 6-3 4-5 4-8 2-9 1-12-1-12-2-9-4-7-4-5-6-4-6-1-7 1-5 4-5 5-3 7-2 9-1 12 1 12 2 9 3 8 5 5 5 3 7 1zm0-7l-4-1-4-2-2-4-2-6-2-8 0-10 0-10 2-7 2-6 2-4 4-3 4 0 4 0 3 3 3 4 2 6 1 7 1 10-1 10-1 8-2 6-3 4-3 2-4 1z"/><path id="gmz" d="m34 0l9 0 0-20 9 0 0-8-9 0 0-45-11 0-30 47 0 6 32 0zm0-28l-22 0 16-24 2-4 2-4 2-3 0 4 0 5 0 4z"/><path id="gna" d="m20 0l9 0 1-13 2-12 2-11 4-11 5-10 8-11 0-5-46 0 0 7 35 0-6 10-5 10-4 10-2 11-2 12-1 13z"/><path id="gnb" d="m30 1l6 0 5-3 4-3 3-5 2-6 1-6 0-8-2-5-3-5-4-3-5-2-6-1-4 1-3 1-4 2-3 2-3 3 1-10 2-8 3-5 4-4 4-2 5-1 4 1 4 2 4 2 5-5-3-3-3-2-3-1-4-1-4-1-7 1-7 3-5 5-5 8-2 10-1 13 0 11 3 9 4 7 5 5 5 3 7 1zm-16-30l3-4 3-3 3-1 3-1 3-1 4 1 4 1 2 3 2 3 1 4 0 5 0 4-1 4-2 4-3 2-3 2-3 0-4-1-4-2-3-3-2-5-2-5-1-7z"/><path id="gnc" d="m26 1l7 0 5-2 5-3 4-4 2-6 1-6-1-4-1-4-3-4-3-3-3-2-5-1 0-1 4-1 3-2 3-3 2-3 1-4 0-4 0-6-2-4-4-4-4-2-5-2-6-1-4 1-4 1-3 1-4 2-3 2-2 2 4 6 4-3 3-2 4-2 5 0 4 0 3 2 3 2 2 4 0 3 0 4-2 4-2 2-4 3-5 1-7 0 0 7 7 1 6 1 5 2 2 3 2 4 1 4-1 4-1 3-3 3-3 2-3 1-4 1-5-1-4-1-4-2-3-2-2-3-5 6 3 3 3 2 3 2 4 2 5 1 5 0z"/><path id="gnd" d="m55-42l3 4 3 4 3 4 2 4 3 4 1 3 7-4-2-3-2-4-3-4-3-4-3-4-3-4zm-31-42l-1 4-1 4-1 4-1 4-11 0 0 73 7 0 0-7 28 0 0-66-17 0 1-3 1-4 2-4 1-4zm-8 23l21 0 0 21-21 0zm0 52l0-25 21 0 0 25zm44-75l-2 6-2 7-3 7-2 6-3 5-4 5 7 4 2-3 2-3 1-4 2-3 2-4 26 0-1 18-1 14-1 11-1 8-1 5-1 3-5 1-3 0-5 0-7 0 2 3 1 4 5 0 6 0 4 0 4-1 4-3 2-4 1-5 1-9 1-12 1-16 1-20 0-4-30 0 1-4 1-3 1-4 1-4z"/><path id="gne" d="m35-53l2 4 2 3 2 3 7-2-3-5-3-5zm-14-20l60 0 0 11-60 0zm-7-6l0 33-1 8 0 8-1 9-2 9-3 8-4 8 7 4 4-8 3-9 2-9 1-10 1-9 0-9 0-10 68 0 0-23zm60 24l-2 4-2 5-3 4-42 0 0 6 16 0 0 10 0 4-18 0 0 7 17 0-2 3-1 3-3 3-3 3-4 3-5 3 4 5 7-3 5-4 4-4 2-4 2-4 1-4 21 0 0 23 8 0 0-23 19 0 0-7-19 0 0-14 16 0 0-6-17 0 2-4 2-3 3-4zm-6 33l-20 0 0-4 0-10 20 0z"/><path id="gnf" d="m24-49l53 0 0 7-53 0zm0-11l53 0 0 7-53 0zm22 34l0 7-18 0 3-3 4-4zm7 0l13 0 3 4 4 3-20 0zm-36-39l0 28 18 0-4 5-26 0 0 6 20 0-3 3-3 2-3 3-4 2-4 2-5 2 5 5 3-1 4-2 3-2 3-2 0 19 7 0 0-17 18 0 0 20 7 0 0-20 20 0 0 10-1 1-4 0-6 0 2 5 6 0 4 0 3 0 3-3 0-3 0-12 4 3 4 2 4 1 5-6-4-1-4-1-4-2-4-3-4-2-3-3 21 0 0-6-55 0 3-5 41 0 0-28zm46-19l0 6-26 0 0-6-7 0 0 6-23 0 0 7 23 0 0 5 7 0 0-5 26 0 0 4 7 0 0-4 24 0 0-7-24 0 0-6z"/><path id="gng" d="m26-57l48 0 0 9-48 0zm-7-5l0 20 63 0 0-20zm59 26l-2 0-61 0 0 6 51 0-4 2-4 1-4 1-4 1-4 1 0 6-41 0 0 7 41 0 0 11-2 2-3 0-3 0-5 0-5 0 3 6 5 0 4 0 4 0 3 0 2-1 4-2 1-5 0-11 41 0 0-7-41 0 0-2 5-2 6-2 5-2 6-2 5-2 4-2-5-4zm-35-47l2 4 2 4-41 0 0 6 88 0 0-6-39 0-2-5-2-5z"/><path id="gnh" d="m14-24l0 27 66 0 0 5 7 0 0-33-7 0 0 21-26 0 0-26 40 0 0-7-22 0 0-17 18 0 0-7-63 0 0-10 10 0 10-1 9-1 10-1 9-1 7-2-4-6-8 2-9 1-10 1-10 1-11 1-10 1 0 39-15 0 0 7 41 0 0 26-25 0 0-20zm51-13l-38 0 0-17 38 0z"/><path id="gni" d="m39-76l0 6 19 0 0 8-25 0 0 6 25 0 0 8-19 0 0 6 19 0 0 8-20 0 0 5 20 0 0 8-24 0 0 6 24 0 0 10 7 0 0-10 29 0 0-6-29 0 0-8 25 0 0-5-25 0 0-8 23 0 0-14 6 0 0-6-6 0 0-14-23 0 0-8-7 0 0 8zm26 20l16 0 0 8-16 0zm0-6l0-8 16 0 0 8zm-55 23l4-3 12 0-1 4-1 4-1 4-1 4-1 3-1 4-2-3-2-4-1-4-2-4-5 2 1 4 1 3 2 4 1 3 2 3 2 2-2 4-3 4-2 3-3 3-3 2 5 5 3-2 3-3 2-3 3-3 2-4 5 4 7 4 7 2 7 1 8 1 9 1 28 0 3-7-4 0-5 0-7 0-6 0-5 0-4 0-8-1-7 0-8-2-6-2-6-3-5-4 2-5 2-5 1-6 1-6 2-6 0-7-4-1-1 0-9 0 3-4 2-4 3-5 2-4 3-5 2-5-5-3-2 1-21 0 0 7 18 0-3 5-2 5-3 4-2 3-1 2-3 5-3 2 3 6z"/><path id="gnj" d="m58-46l3 3 4 2 3 3 3 2 4-4-2-2-4-3-4-2-3-2zm-2 22l4 3 3 2 4 3 2 2 5-4-3-2-3-3-4-2-4-3zm-7-60l-1 5-2 6-3 5-2 4-3 5-3 3 5 5 3-3 3-4 2-4 2-4 44 0 0-7-41 0 2-5 1-5zm34 34l-1 15-31 0 1-15zm-37-7l0 4 0 3-1 4 0 3-1 4 0 4-8 0 0 7 7 0 0 4-1 4-1 4 0 3-1 4 0 3 40 0-2 6-3 1-4 0-6 0 2 6 6 0 5 0 3-1 3-2 2-4 1-6 8 0 0-6-7 0 0-4 0-3 0-5 1-4 7 0 0-7-7 0 1-18 0-4zm36 29l0 4-1 5 0 4 0 3-33 0 2-16zm-65-56l0 21-12 0 0 7 11 0-1 7-2 7-2 7-2 7-3 6-3 5 4 6 2-3 2-4 1-4 2-4 1-5 2-4 0 43 7 0 0-50 2 4 2 4 1 4 2 2 4-6-2-3-3-6-4-5-2-4 0-4 9 0 0-7-9 0 0-21z"/><path id="gnk" d="m6-79l0 7 17 0-2 7-2 6-3 5-4 5-4 4-5 3 5 5 6-4 5-4 4-6 3-6 2-7 2-8 15 0 0 8-1 5 0 5-1 3-1 3-1 1-3 1-4 0-6 0 2 7 4 0 4 0 3 0 4-1 2-2 2-2 1-3 1-5 0-6 1-8 1-9 0-4zm3 46l0 41 7 0 0-6 27 0 0 5 8 0 0-40zm7 28l0-21 27 0 0 21zm44-73l0 86 7 0 0-79 19 0-2 4-2 4-2 5-3 5-2 4-2 5 5 4 3 4 3 4 2 4 1 3 0 3-1 5-2 3-5 1-4 0-4 0 1 4 1 3 5 1 4-1 4 0 3-2 3-2 1-3 1-4 0-4 0-4-1-3-1-4-3-4-3-5-5-4 2-5 3-5 3-5 2-5 2-5 3-5-6-4-1 1z"/><path id="gnl" d="m23-84l0 9-17 0 0 6 17 0 0 6-15 0 0 5 15 0 0 6-19 0 0 6 44 0 0-6-18 0 0-6 15 0 0-5-15 0 0-6 17 0 0-6-17 0 0-9zm39 15l14 0-2 4-3 4-3 4-14 0 3-4 3-4 2-4zm0-15l-2 5-2 5-3 4-3 4-3 4-3 4 5 4 1-1 0 4 13 0 0 11-18 0 0 6 18 0 0 11-14 0 0 7 14 0 0 15-2 2-4 0-7 0 3 7 6 0 4-1 3 0 3-3 1-5 0-15 12 0 0 4 7 0 0-22 6 0 0-6-6 0 0-17-15 0 3-4 2-4 2-3 2-4-4-3-1 0-15 0 2-4 2-3zm22 61l-12 0 0-11 12 0zm0-17l-12 0 0-11 12 0zm-67 18l20 0 0 7-20 0zm0-5l0-7 20 0 0 7zm-7-13l0 48 7 0 0-17 20 0 0 9-2 2-3 0-6 0 2 6 6 0 3 0 3-1 3-2 1-5 0-40z"/><path id="gnm" d="m27-64l3 4 2 4 2 3 6-2-1-4-3-4-2-4zm29 24l3 2 4 3 4 3 3 2 3 3 3 2 4-5-2-2-4-3-3-2-4-3-3-3-4-2zm-16-4l-3 3-4 3-4 3-3 2-4 3 4 6 3-3 3-3 4-2 3-3 3-4 3-3zm26-22l-2 3-1 4-2 3-3 4-46 0 0 60 7 0 0-54 63 0 0 46-3 2-3 0-4 0-6 0 2 5 6 0 4 0 4 0 3-1 3-2 0-4 0-52-22 0 3-4 2-4 3-4zm-35 38l0 28 7 0 0-5 30 0 0-23zm7 6l24 0 0 12-24 0zm6-60l2 4 2 5-42 0 0 6 88 0 0-6-38 0-1-4-2-4-2-3z"/><path id="gnn" d="m46-84l0 11-40 0 0 7 31 0-4 4-6 4-5 4-6 4-6 2-6 3 4 6 7-3 7-4 7-4 6-5 6-5 5-6 0 22 8 0 0-22 5 6 5 5 7 4 7 5 6 3 7 3 3-3 2-3-6-2-6-3-6-3-6-4-5-4-5-4 32 0 0-7-40 0 0-11zm0 56l0 6-40 0 0 7 40 0 0 14-2 2-3 0-6 0-6 0 2 3 1 4 6 0 4 0 4-1 3-1 3-2 1-5 0-14 42 0 0-7-42 0 0-2 5-2 4-2 4-3 5-2 3-2 4-3-5-4-1 0-49 0 0 7 39 0-3 2-5 2-4 2-4 1z"/><path id="gno" d="m66-56l-3 3-4 4-4 3-4 3-5 2-4 3 5 5 4-3 5-3 4-3 5-4 4-3 3-4zm10 14l-4 5-5 4-5 5-6 3-6 4-7 3 5 5 7-3 6-4 6-4 6-5 5-5 4-5zm10 14l-5 7-6 6-7 6-9 4-9 4-11 3 3 3 2 3 11-3 9-4 9-5 8-6 7-7 5-8zm-22-56l-3 6-5 6-4 6-6 5-6 5-7 4 5 5 5-3 6-4 4-4 5-5 4-4 3-5 4 5 5 4 4 5 5 4 5 3 5 3 2-3 3-3-5-3-6-3-5-4-5-5-4-4-4-5 2-4zm-60 74l2 7 5-1 5-2 5-1 6-2 6-2 6-2-1-7-14 4 0-25 11 0 0-7-11 0 0-22 13 0 0-7-33 0 0 7 13 0 0 22-12 0 0 7 12 0 0 27z"/><path id="gnp" d="m27-48l46 0 0 8-46 0zm-9 32l0 24 7 0 0-3 50 0 0 3 8 0 0-24zm7 15l0-10 50 0 0 10zm21-83l0 7-38 0 0 6 38 0 0 7-31 0 0 5 71 0 0-5-32 0 0-7 38 0 0-6-38 0 0-7zm-26 30l0 19 10 0-3 1 3 6-25 0 0 6 90 0 0-6-26 0 2-3 3-4-2 0 9 0 0-19zm18 26l-2-3-2-4 31 0-2 3-1 4z"/><path id="gnq" d="m5-4l0 8 90 0 0-8-41 0 0-31 32 0 0-7-32 0 0-28 36 0 0-7-80 0 0 7 36 0 0 28-31 0 0 7 31 0 0 31z"/><path id="gnr" d="m9-77l4 2 4 2 4 2 3 2 3 2 4-6-3-2-3-2-4-2-4-2-4-2zm-5 27l4 2 4 2 4 3 3 2 3 2 4-6-3-2-3-2-4-2-4-3-4-1zm3 52l6 5 3-5 3-5 3-6 3-6 3-5 3-6-5-5-3 6-3 6-4 6-3 5-3 5-3 5zm51-86l0 4 0 4 0 3-1 4 0 4-23 0 0 21 7 0 0-14 16 0-1 12-2 12-4 11-5 10-8 8-9 7 3 3 2 3 8-6 7-7 5-7 4-9 3-9 2-10 0 36 1 4 1 3 2 2 3 1 4 1 6 0 7 0 3-1 3-1 1-2 2-4 1-5 0-7-7-3 0 7 0 4-1 3-1 1-2 1-6 0-5 0-3-1-1-3 0-42-7 0 1-4 0-4 0-4 22 0 0 14 8 0 0-21-29 0 0-4 0-4 0-3 0-4 0-4z"/></defs></svg>
<div id="scr" class="a">
  <div id="tabbar" class="a">
    <div id="tab" class="a"></div><div class="a" style="left:30px;top:0;width:6px;height:24px;background:linear-gradient(to right,#b8b8b8,#cccccc)"></div>
  </div>
  <div id="addr" class="a"><div id="field" class="a"></div></div>
  <div id="tool" class="a"></div>
  <div id="page" class="a"></div>
  <div id="task" class="a"></div>
</div>
<!-- pdf -->
<svg class="a" style="left:0;top:0;pointer-events:none" width="1021" height="679"><g fill="#111" transform="translate(195.20 223.69) scale(0.1130)"><use href="#gb" x="0"/><use href="#gc" x="106.3"/><use href="#gd" x="212.7"/><use href="#ge" x="425.3"/><use href="#gf" x="531.7"/><use href="#gg" x="638"/><use href="#gh" x="744.3"/><use href="#gi" x="850.7"/><use href="#gj" x="957"/><use href="#gk" x="1063.3"/><use href="#gl" x="1169.7"/><use href="#gm" x="1276"/><use href="#gn" x="1382.3"/><use href="#go" x="1488.7"/><use href="#gl" x="1595"/><use href="#gp" x="1701.4"/><use href="#gq" x="1807.7"/><use href="#gr" x="1914"/></g><g fill="#141414" transform="translate(128.00 253.83) scale(0.1140)"><use href="#gs" x="0"/><use href="#gt" x="102.6"/><use href="#gu" x="205.2"/><use href="#gv" x="307.8"/><use href="#gw" x="410.4"/><use href="#gx" x="513"/><use href="#gy" x="615.6"/><use href="#gz" x="718.2"/><use href="#gba" x="820.8"/><use href="#gbb" x="923.4"/><use href="#gbc" x="1026"/><use href="#gbd" x="1128.7"/><use href="#gba" x="1231.3"/><use href="#gbe" x="1333.9"/><use href="#gbf" x="1436.5"/><use href="#gbg" x="1539.1"/><use href="#gbh" x="1641.7"/><use href="#gbi" x="1744.3"/><use href="#gs" x="1846.9"/><use href="#gt" x="1949.5"/><use href="#gbj" x="2052.1"/><use href="#gbk" x="2154.7"/><use href="#gbl" x="2257.3"/><use href="#gbm" x="2359.9"/><use href="#gbn" x="2462.5"/><use href="#gbo" x="2565.1"/><use href="#gbp" x="2667.7"/><use href="#gbq" x="2770.3"/><use href="#gbr" x="2872.9"/><use href="#gbs" x="2975.5"/><use href="#gbc" x="3078.1"/><use href="#gbt" x="3180.8"/><use href="#gbu" x="3283.4"/></g><g fill="#141414" transform="translate(103.00 269.33) scale(0.1140)"><use href="#gbv" x="0"/><use href="#gbw" x="103.9"/><use href="#gbg" x="207.7"/><use href="#gbx" x="311.6"/><use href="#gby" x="415.4"/><use href="#gbz" x="519.3"/><use href="#gca" x="623.1"/><use href="#gcb" x="727"/><use href="#gcc" x="830.8"/><use href="#gcd" x="934.7"/><use href="#gce" x="1038.5"/><use href="#gbu" x="1142.4"/><use href="#gcf" x="1246.2"/><use href="#gs" x="1350.1"/><use href="#gt" x="1453.9"/><use href="#gbl" x="1557.8"/><use href="#gbm" x="1661.6"/><use href="#gbg" x="1765.5"/><use href="#gcg" x="1869.4"/><use href="#gch" x="1973.2"/><use href="#gbj" x="2077.1"/><use href="#gci" x="2180.9"/><use href="#gcj" x="2284.8"/><use href="#gbk" x="2388.6"/><use href="#gck" x="2521.9"/><use href="#gcl" x="2581.6"/><use href="#gcm" x="2670.6"/><use href="#gcn" x="2774.4"/><use href="#gco" x="2878.3"/><use href="#gs" x="2982.1"/><use href="#gt" x="3086"/><use href="#gcp" x="3189.9"/><use href="#gcq" x="3293.7"/><use href="#gcr" x="3397.6"/><use href="#gcs" x="3501.4"/></g><g fill="#141414" transform="translate(103.00 284.73) scale(0.1140)"><use href="#gct" x="0"/><use href="#gcr" x="100.1"/><use href="#gcu" x="200.3"/><use href="#gcv" x="300.4"/><use href="#gbg" x="400.6"/><use href="#gbp" x="500.7"/><use href="#gbq" x="600.9"/><use href="#gch" x="701"/><use href="#gcv" x="801.2"/><use href="#gbr" x="901.3"/><use href="#gt" x="1001.5"/><use href="#gcw" x="1101.6"/><use href="#gcx" x="1201.8"/><use href="#gcy" x="1301.9"/><use href="#gbg" x="1402"/><use href="#gcz" x="1502.2"/><use href="#gda" x="1602.3"/><use href="#gbj" x="1702.5"/><use href="#gdb" x="1802.6"/><use href="#gs" x="1902.8"/><use href="#gt" x="2002.9"/><use href="#gu" x="2103.1"/><use href="#gv" x="2203.2"/><use href="#gw" x="2303.4"/><use href="#gbg" x="2403.5"/><use href="#gdc" x="2503.7"/><use href="#gdd" x="2603.8"/><use href="#gde" x="2703.9"/><use href="#gdf" x="2804.1"/><use href="#gdg" x="2904.2"/><use href="#gbx" x="3004.4"/><use href="#gdh" x="3104.5"/><use href="#gbg" x="3204.7"/><use href="#gdi" x="3304.8"/><use href="#gdj" x="3405"/><use href="#gcb" x="3505.1"/></g><g fill="#141414" transform="translate(103.00 332.33) scale(0.1140)"><use href="#gdk" x="0"/><use href="#gcr" x="104.4"/><use href="#gcc" x="208.9"/><use href="#gcd" x="313.3"/><use href="#gce" x="417.8"/><use href="#gbu" x="522.2"/><use href="#gdl" x="626.6"/><use href="#gbh" x="731.1"/><use href="#gbi" x="835.5"/><use href="#gs" x="940"/><use href="#gt" x="1044.4"/><use href="#gbl" x="1148.8"/><use href="#gbm" x="1253.3"/><use href="#gbg" x="1357.7"/><use href="#gcg" x="1462.2"/><use href="#gch" x="1566.6"/></g><g fill="#141414" transform="translate(127.00 378.33) scale(0.1140)"><use href="#gcc" x="0"/><use href="#gcd" x="104.3"/><use href="#gce" x="208.6"/><use href="#gbu" x="313"/><use href="#gdl" x="417.3"/><use href="#gdm" x="521.6"/><use href="#gt" x="625.9"/><use href="#gdn" x="730.3"/><use href="#gdo" x="834.6"/><use href="#gdp" x="938.9"/><use href="#gdq" x="1043.2"/><use href="#gbg" x="1147.6"/><use href="#gbw" x="1251.9"/><use href="#gdr" x="1356.2"/></g><g fill="#141414" transform="translate(128.00 393.53) scale(0.1140)"><use href="#gs" x="0"/><use href="#gt" x="102.6"/><use href="#gbk" x="205.2"/><use href="#gdk" x="307.8"/><use href="#gds" x="410.4"/><use href="#gdt" x="513"/><use href="#gdu" x="615.6"/><use href="#gdv" x="718.2"/><use href="#gdw" x="820.8"/><use href="#gbg" x="923.4"/><use href="#gdx" x="1026"/><use href="#gdy" x="1128.7"/><use href="#gdz" x="1231.3"/><use href="#gt" x="1333.9"/><use href="#gcb" x="1436.5"/><use href="#gs" x="1539.1"/><use href="#gea" x="1641.7"/><use href="#gbc" x="1744.3"/><use href="#geb" x="1846.9"/><use href="#gec" x="1949.5"/><use href="#ged" x="2052.1"/><use href="#gee" x="2154.7"/><use href="#gbg" x="2257.3"/><use href="#gef" x="2359.9"/><use href="#geg" x="2462.5"/><use href="#gbr" x="2565.1"/><use href="#geh" x="2667.7"/><use href="#gei" x="2770.3"/><use href="#gbj" x="2872.9"/><use href="#gej" x="2975.5"/><use href="#gcs" x="3078.1"/><use href="#gde" x="3180.8"/><use href="#gdf" x="3283.4"/></g><g fill="#141414" transform="translate(103.00 408.95) scale(0.1140)"><use href="#gdg" x="0"/><use href="#gz" x="103"/><use href="#gcm" x="206"/><use href="#gek" x="309"/><use href="#gel" x="412"/><use href="#gem" x="515"/><use href="#gen" x="618"/><use href="#gbg" x="721.1"/><use href="#geo" x="824.1"/><use href="#gbi" x="927.1"/><use href="#gcu" x="1030.1"/><use href="#gep" x="1133.1"/><use href="#gbj" x="1236.1"/><use href="#geq" x="1339.1"/><use href="#gbs" x="1442.1"/><use href="#ger" x="1545.1"/><use href="#gbp" x="1648.1"/><use href="#gbq" x="1751.1"/><use href="#ges" x="1854.1"/><use href="#get" x="1957.1"/><use href="#geu" x="2060.2"/><use href="#gev" x="2163.2"/><use href="#gdz" x="2266.2"/><use href="#gew" x="2369.2"/><use href="#gex" x="2472.2"/><use href="#gcb" x="2575.2"/><use href="#gey" x="2678.2"/><use href="#gbk" x="2781.2"/><use href="#gbj" x="2884.2"/><use href="#gez" x="2987.2"/><use href="#gdt" x="3090.2"/><use href="#gdu" x="3193.2"/><use href="#gfa" x="3296.2"/><use href="#gbw" x="3399.2"/><use href="#gbh" x="3502.3"/></g><g fill="#141414" transform="translate(103.00 424.37) scale(0.1140)"><use href="#gbi" x="0"/><use href="#gfb" x="100.9"/><use href="#gbj" x="201.8"/><use href="#gs" x="302.6"/><use href="#gt" x="403.5"/><use href="#gfc" x="504.4"/><use href="#gfd" x="605.3"/><use href="#gfe" x="706.1"/><use href="#gdg" x="807"/><use href="#gcb" x="907.9"/></g><g fill="#141414" transform="translate(128.00 439.79) scale(0.1140)"><use href="#gff" x="0"/><use href="#gfg" x="50.9"/><use href="#gcm" x="138.9"/><use href="#gcn" x="242.6"/><use href="#gs" x="346.4"/><use href="#gfh" x="450.1"/><use href="#gec" x="553.9"/><use href="#gcf" x="657.6"/><use href="#gbj" x="761.4"/><use href="#gfi" x="865.1"/><use href="#gdy" x="968.9"/><use href="#gdk" x="1072.7"/><use href="#gfj" x="1176.4"/><use href="#gt" x="1280.2"/><use href="#gfk" x="1383.9"/><use href="#gen" x="1487.7"/><use href="#gcf" x="1591.4"/><use href="#gfl" x="1695.2"/><use href="#gbp" x="1798.9"/><use href="#gdn" x="1902.7"/><use href="#gv" x="2006.5"/><use href="#gfm" x="2110.2"/><use href="#gfn" x="2214"/><use href="#gfo" x="2317.7"/><use href="#gfp" x="2421.5"/><use href="#gbj" x="2525.2"/><use href="#gfq" x="2629"/><use href="#gfr" x="2732.7"/><use href="#gfs" x="2836.5"/><use href="#gft" x="2940.2"/><use href="#gdc" x="3044"/><use href="#gfu" x="3147.8"/><use href="#gfv" x="3251.5"/></g><g fill="#141414" transform="translate(103.00 455.21) scale(0.1140)"><use href="#gfo" x="0"/><use href="#gfp" x="103"/><use href="#gbj" x="206"/><use href="#gz" x="309"/><use href="#gfw" x="412"/><use href="#gbg" x="515"/><use href="#gy" x="618"/><use href="#gv" x="721.1"/><use href="#gdy" x="824.1"/><use href="#gfx" x="927.1"/><use href="#gfy" x="1030.1"/><use href="#gfz" x="1133.1"/><use href="#gga" x="1236.1"/><use href="#ggb" x="1339.1"/><use href="#ggc" x="1442.1"/><use href="#ggd" x="1545.1"/><use href="#gdz" x="1648.1"/><use href="#gge" x="1751.1"/><use href="#ggf" x="1854.1"/><use href="#gcb" x="1957.1"/><use href="#gdn" x="2060.2"/><use href="#gv" x="2163.2"/><use href="#gfm" x="2266.2"/><use href="#gfn" x="2369.2"/><use href="#gcs" x="2472.2"/><use href="#geu" x="2575.2"/><use href="#ggg" x="2678.2"/><use href="#gdl" x="2781.2"/><use href="#ggh" x="2884.2"/><use href="#gbg" x="2987.2"/><use href="#ggi" x="3090.2"/><use href="#ggj" x="3193.2"/><use href="#ggk" x="3296.2"/><use href="#ggl" x="3399.2"/><use href="#gbr" x="3502.3"/></g><g fill="#141414" transform="translate(103.00 470.63) scale(0.1140)"><use href="#gbb" x="0"/><use href="#gbc" x="103"/><use href="#ggm" x="206"/><use href="#ggn" x="309"/><use href="#gbj" x="412"/><use href="#ggo" x="515"/><use href="#gz" x="618"/><use href="#ggp" x="721.1"/><use href="#gbg" x="824.1"/><use href="#ggq" x="927.1"/><use href="#ggr" x="1030.1"/><use href="#gdk" x="1133.1"/><use href="#ggs" x="1236.1"/><use href="#ggt" x="1339.1"/><use href="#gbg" x="1442.1"/><use href="#gfm" x="1545.1"/><use href="#gfn" x="1648.1"/><use href="#ggu" x="1751.1"/><use href="#gcq" x="1854.1"/><use href="#gs" x="1957.1"/><use href="#ggv" x="2060.2"/><use href="#gde" x="2163.2"/><use href="#gdf" x="2266.2"/><use href="#gbg" x="2369.2"/><use href="#gy" x="2472.2"/><use href="#gv" x="2575.2"/><use href="#ggw" x="2678.2"/><use href="#gbj" x="2781.2"/><use href="#ggx" x="2884.2"/><use href="#geu" x="2987.2"/><use href="#ggy" x="3090.2"/><use href="#gdk" x="3193.2"/><use href="#ggz" x="3296.2"/><use href="#gcm" x="3399.2"/><use href="#gbi" x="3502.3"/></g><g fill="#141414" transform="translate(103.00 486.05) scale(0.1140)"><use href="#gde" x="0"/><use href="#gdf" x="103"/><use href="#gbg" x="206"/><use href="#gha" x="309"/><use href="#ghb" x="412"/><use href="#gy" x="515"/><use href="#gv" x="618"/><use href="#ggw" x="721.1"/><use href="#ghc" x="824.1"/><use href="#gdh" x="927.1"/><use href="#ghd" x="1030.1"/><use href="#gbj" x="1133.1"/><use href="#ghc" x="1236.1"/><use href="#gdh" x="1339.1"/><use href="#gdz" x="1442.1"/><use href="#ghe" x="1545.1"/><use href="#gcb" x="1648.1"/><use href="#ghf" x="1751.1"/><use href="#ged" x="1854.1"/><use href="#gby" x="1957.1"/><use href="#ggw" x="2060.2"/><use href="#gbg" x="2163.2"/><use href="#ghg" x="2266.2"/><use href="#ghh" x="2369.2"/><use href="#gbj" x="2472.2"/><use href="#ghi" x="2575.2"/><use href="#ghj" x="2678.2"/><use href="#gbg" x="2781.2"/><use href="#ghk" x="2884.2"/><use href="#ghl" x="2987.2"/><use href="#gbj" x="3090.2"/><use href="#gcv" x="3193.2"/><use href="#ghm" x="3296.2"/><use href="#gz" x="3399.2"/><use href="#gfu" x="3502.3"/></g><g fill="#141414" transform="translate(103.00 501.47) scale(0.1140)"><use href="#gfv" x="0"/><use href="#gbr" x="103"/><use href="#ghn" x="206"/><use href="#gfv" x="309"/><use href="#gs" x="412"/><use href="#gbg" x="515"/><use href="#gho" x="618"/><use href="#ghl" x="721.1"/><use href="#gbj" x="824.1"/><use href="#ghp" x="927.1"/><use href="#ghq" x="1030.1"/><use href="#gbg" x="1133.1"/><use href="#ghr" x="1236.1"/><use href="#ghs" x="1339.1"/><use href="#gbj" x="1442.1"/><use href="#ght" x="1545.1"/><use href="#ghu" x="1648.1"/><use href="#gbg" x="1751.1"/><use href="#ghv" x="1854.1"/><use href="#ghr" x="1957.1"/><use href="#gbj" x="2060.2"/><use href="#ghw" x="2163.2"/><use href="#ghx" x="2266.2"/><use href="#gbg" x="2369.2"/><use href="#ghy" x="2472.2"/><use href="#ghl" x="2575.2"/><use href="#gbj" x="2678.2"/><use href="#ghz" x="2781.2"/><use href="#gds" x="2884.2"/><use href="#ghz" x="2987.2"/><use href="#gds" x="3090.2"/><use href="#gdz" x="3193.2"/><use href="#gia" x="3296.2"/><use href="#gbg" x="3399.2"/><use href="#gib" x="3502.3"/></g><g fill="#141414" transform="translate(103.00 516.89) scale(0.1140)"><use href="#gic" x="0"/><use href="#gbj" x="105.3"/><use href="#gid" x="210.5"/><use href="#gie" x="315.8"/><use href="#gbg" x="421"/><use href="#ghv" x="526.3"/><use href="#gif" x="631.6"/><use href="#gbj" x="736.8"/><use href="#gig" x="842.1"/><use href="#gig" x="947.3"/><use href="#gih" x="1052.6"/><use href="#gff" x="1092.3"/><use href="#gii" x="1144.6"/><use href="#gcb" x="1184.3"/><use href="#gy" x="1289.5"/><use href="#gv" x="1394.8"/><use href="#ggw" x="1500.1"/><use href="#gbg" x="1605.3"/><use href="#gij" x="1710.6"/><use href="#gdz" x="1815.8"/><use href="#gbp" x="1921.1"/><use href="#gbq" x="2026.4"/><use href="#gbj" x="2131.6"/><use href="#ghy" x="2236.9"/><use href="#gik" x="2342.1"/><use href="#gbs" x="2447.4"/><use href="#ger" x="2552.7"/><use href="#gbl" x="2657.9"/><use href="#gbm" x="2763.2"/><use href="#gbg" x="2868.4"/><use href="#gil" x="2973.7"/><use href="#gim" x="3079"/><use href="#gcu" x="3184.2"/><use href="#gep" x="3289.5"/><use href="#gbr" x="3394.7"/><use href="#gin" x="3500"/></g><g fill="#141414" transform="translate(103.00 532.31) scale(0.1140)"><use href="#gio" x="0"/><use href="#gcu" x="103"/><use href="#gep" x="206"/><use href="#gbp" x="309"/><use href="#gy" x="412"/><use href="#gdg" x="515"/><use href="#gdt" x="618"/><use href="#gdu" x="721.1"/><use href="#gip" x="824.1"/><use href="#gbg" x="927.1"/><use href="#giq" x="1030.1"/><use href="#gch" x="1133.1"/><use href="#gcb" x="1236.1"/><use href="#gdn" x="1339.1"/><use href="#gv" x="1442.1"/><use href="#gfm" x="1545.1"/><use href="#gfn" x="1648.1"/><use href="#gdb" x="1751.1"/><use href="#gdg" x="1854.1"/><use href="#gir" x="1957.1"/><use href="#gis" x="2060.2"/><use href="#git" x="2163.2"/><use href="#gdz" x="2266.2"/><use href="#gbg" x="2369.2"/><use href="#giu" x="2472.2"/><use href="#giv" x="2575.2"/><use href="#gbj" x="2678.2"/><use href="#gz" x="2781.2"/><use href="#gha" x="2884.2"/><use href="#giw" x="2987.2"/><use href="#gix" x="3090.2"/><use href="#giy" x="3193.2"/><use href="#giz" x="3296.2"/><use href="#gja" x="3399.2"/><use href="#gjb" x="3502.3"/></g><g fill="#141414" transform="translate(103.00 547.73) scale(0.1140)"><use href="#gjc" x="0"/><use href="#ghr" x="103"/><use href="#gdr" x="206"/><use href="#gjd" x="309"/><use href="#gje" x="412"/><use href="#gjf" x="515"/><use href="#gbr" x="618"/><use href="#gbb" x="721.1"/><use href="#gbc" x="824.1"/><use href="#ggm" x="927.1"/><use href="#ggn" x="1030.1"/><use href="#gcb" x="1133.1"/><use href="#gjg" x="1236.1"/><use href="#ghf" x="1339.1"/><use href="#gjh" x="1442.1"/><use href="#gji" x="1545.1"/><use href="#ggv" x="1648.1"/><use href="#gbv" x="1751.1"/><use href="#gjj" x="1854.1"/><use href="#gjk" x="1957.1"/><use href="#gjl" x="2060.2"/><use href="#gbg" x="2163.2"/><use href="#gjm" x="2266.2"/><use href="#ggo" x="2369.2"/><use href="#gdn" x="2472.2"/><use href="#gdo" x="2575.2"/><use href="#gdp" x="2678.2"/><use href="#gdq" x="2781.2"/><use href="#ghf" x="2884.2"/><use href="#gca" x="2987.2"/><use href="#ggq" x="3090.2"/><use href="#gcs" x="3193.2"/><use href="#gjn" x="3296.2"/><use href="#gje" x="3399.2"/><use href="#gdz" x="3502.3"/></g><g fill="#141414" transform="translate(103.00 563.15) scale(0.1140)"><use href="#gjo" x="0"/><use href="#ggu" x="103"/><use href="#gcq" x="206"/><use href="#gix" x="309"/><use href="#giy" x="412"/><use href="#gbj" x="515"/><use href="#ghf" x="618"/><use href="#gca" x="721.1"/><use href="#ggq" x="824.1"/><use href="#gib" x="927.1"/><use href="#gbp" x="1030.1"/><use href="#gfw" x="1133.1"/><use href="#gbg" x="1236.1"/><use href="#gbd" x="1339.1"/><use href="#gdy" x="1442.1"/><use href="#gfq" x="1545.1"/><use href="#gjp" x="1648.1"/><use href="#gjq" x="1751.1"/><use href="#gdn" x="1854.1"/><use href="#gdo" x="1957.1"/><use href="#gdp" x="2060.2"/><use href="#gdq" x="2163.2"/><use href="#gbg" x="2266.2"/><use href="#geo" x="2369.2"/><use href="#gjr" x="2472.2"/><use href="#gt" x="2575.2"/><use href="#gfk" x="2678.2"/><use href="#gjs" x="2781.2"/><use href="#gbw" x="2884.2"/><use href="#gcm" x="2987.2"/><use href="#gek" x="3090.2"/><use href="#gcs" x="3193.2"/><use href="#gct" x="3296.2"/><use href="#gbg" x="3399.2"/><use href="#gjt" x="3502.3"/></g><g fill="#141414" transform="translate(103.00 578.57) scale(0.1140)"><use href="#gju" x="0"/><use href="#gbj" x="103"/><use href="#ggp" x="206"/><use href="#gjv" x="309"/><use href="#ggq" x="412"/><use href="#gjw" x="515"/><use href="#gjx" x="618"/><use href="#gz" x="721.1"/><use href="#gdl" x="824.1"/><use href="#gbp" x="927.1"/><use href="#gbq" x="1030.1"/><use href="#gcb" x="1133.1"/><use href="#ghe" x="1236.1"/><use href="#gz" x="1339.1"/><use href="#gjy" x="1442.1"/><use href="#gjz" x="1545.1"/><use href="#gka" x="1648.1"/><use href="#gkb" x="1751.1"/><use href="#gga" x="1854.1"/><use href="#gbj" x="1957.1"/><use href="#gkc" x="2060.2"/><use href="#gkd" x="2163.2"/><use href="#gke" x="2266.2"/><use href="#gkf" x="2369.2"/><use href="#gcr" x="2472.2"/><use href="#gbs" x="2575.2"/><use href="#gkg" x="2678.2"/><use href="#gkh" x="2781.2"/><use href="#ghd" x="2884.2"/><use href="#gbg" x="2987.2"/><use href="#gs" x="3090.2"/><use href="#gt" x="3193.2"/><use href="#gbj" x="3296.2"/><use href="#ged" x="3399.2"/><use href="#gby" x="3502.3"/></g></svg>
<div class="a" style="left:122px;top:232px;width:371px;height:1px;background:#555"></div>
<!-- ui -->
<svg class="a" style="left:0;top:0;pointer-events:none" width="1021" height="679"><g fill="#222" transform="translate(-8.50 90.49) scale(0.1050)"><use href="#gki" x="0"/><use href="#gkj" x="100"/></g><g fill="#5e5e5e" transform="translate(0.00 115.57) scale(0.0877 0.0940)"><use href="#gkk" x="0"/><use href="#gkl" x="51"/><use href="#gkm" x="78.8"/><use href="#gkm" x="118"/><use href="#gkm" x="157.2"/><use href="#gkn" x="196.4"/><use href="#gkl" x="260.2"/><use href="#gkm" x="288"/><use href="#gko" x="327.2"/><use href="#gkp" x="399.3"/><use href="#gkq" x="446.1"/><use href="#gkr" x="501.5"/><use href="#gkp" x="540.3"/><use href="#gkm" x="587.1"/><use href="#gks" x="626.3"/><use href="#gkt" x="682.6"/><use href="#gku" x="744.6"/><use href="#gkv" x="805.2"/><use href="#gkm" x="833.6"/><use href="#gkw" x="872.8"/><use href="#gkq" x="941.6"/><use href="#gkp" x="997"/><use href="#gkx" x="1043.8"/><use href="#gky" x="1099"/><use href="#gku" x="1136.7"/><use href="#gkz" x="1197.3"/><use href="#gkm" x="1259.3"/><use href="#gla" x="1298.5"/><use href="#glb" x="1398.5"/><use href="#glc" x="1498.5"/><use href="#gld" x="1598.5"/><use href="#gle" x="1698.5"/><use href="#glf" x="1798.5"/><use href="#glg" x="1898.5"/><use href="#glh" x="1998.5"/><use href="#gli" x="2098.5"/><use href="#gkm" x="2198.5"/><use href="#glj" x="2237.7"/><use href="#glk" x="2337.7"/><use href="#gll" x="2437.7"/><use href="#glm" x="2537.7"/><use href="#gln" x="2637.7"/><use href="#glo" x="2737.7"/><use href="#glp" x="2837.7"/><use href="#glb" x="2937.7"/><use href="#glq" x="3037.7"/><use href="#glg" x="3137.7"/><use href="#glh" x="3237.7"/><use href="#glr" x="3337.7"/><use href="#gls" x="3437.7"/><use href="#glt" x="3471.5"/><use href="#glu" x="3527"/><use href="#glv" x="3560.8"/><use href="#gkz" x="3588.6"/><use href="#gkt" x="3650.6"/><use href="#glw" x="3712.6"/></g><g fill="#121212" transform="translate(359.00 147.64) scale(0.0880)"><use href="#glx" x="0"/><use href="#gly" x="101.3"/><use href="#glz" x="202.7"/><use href="#gma" x="304"/><use href="#gmb" x="405.3"/><use href="#gmc" x="506.6"/></g><g fill="#121212" transform="translate(447.30 147.64) scale(0.0880)"><use href="#glz" x="0"/><use href="#gma" x="105.7"/><use href="#gmd" x="211.4"/><use href="#gme" x="317"/></g><g fill="#121212" transform="translate(525.20 147.64) scale(0.0880)"><use href="#gmf" x="0"/><use href="#gmg" x="102.8"/><use href="#gmh" x="205.7"/><use href="#glz" x="308.5"/><use href="#gmi" x="411.4"/><use href="#gmj" x="514.2"/></g><g fill="#121212" transform="translate(613.80 147.64) scale(0.0880)"><use href="#gmk" x="0"/><use href="#gml" x="105.1"/><use href="#gmm" x="210.2"/><use href="#gmn" x="315.3"/></g></svg>
<svg class="a" style="left:0;top:0" width="785" height="679" viewBox="0 0 785 679" fill="none" stroke="#333" stroke-width="1">
 <!-- tab bar -->
 <path d="M14 83.8l7 7M21 83.8l-7 7" stroke="#222" stroke-width="1"/>
 <path d="M43.2 83v9.6M38.4 87.8h9.6" stroke="#9a9a9a" stroke-width="1.1"/>
 <path d="M62 85l4.6 4.6L71.2 85" stroke="#9a9a9a" stroke-width="1"/>
 <path d="M694 87.5h9.5" stroke="#555"/>
 <path d="M729.5 85.5h6v6h-6zM731.5 85.5v-2h6v6h-2" stroke="#333"/>
 <path d="M764 83.5l7.5 7.5M771.5 83.5l-7.5 7.5" stroke="#333" stroke-width="1.1"/>
 <!-- address icons -->
 <path d="M638 108.9l1.6 3.5 3.9.3-3 2.5.9 3.8-3.4-2.1-3.4 2.1.9-3.8-3-2.5 3.9-.3z" stroke="#111" stroke-width="1.1" stroke-linejoin="round"/>
 <path d="M680.4 108.6L681.9 112.3H687M680.4 108.6L678.8 112.3H674.9L678 114.8L676.9 118.8L680.5 116.6" stroke="#1a1a1a" stroke-width="1.1" stroke-linejoin="round"/>
 <path d="M681.6 114.7H687M681 117.2H687" stroke="#555" stroke-width="1"/>
 <path d="M710.3 108l2.3 1.3-6.4 9.6-1.5.6.1-1.7z" stroke="#1a1a1a" stroke-width="1"/>
 <path d="M708 118.6c1-1 2-1.2 3 0s2 .9 3 0 2-.6 3 .3" stroke="#1a1a1a" stroke-width=".9"/>
 <path d="M734.4 110v7.6h7" stroke="#1a1a1a" stroke-width="1.1"/>
 <path d="M736.8 115.2c.6-3 2.8-4.6 5.8-4.6v-2.3l3.4 2.9-3.4 2.9v-2.1c-2.4 0-4.4.9-5.8 3.2z" stroke="#1a1a1a" stroke-width="1" stroke-linejoin="round"/>
 <circle cx="765.5" cy="113.5" r=".7" fill="#222" stroke="none"/><circle cx="770" cy="113.5" r=".7" fill="#222" stroke="none"/><circle cx="774.5" cy="113.5" r=".7" fill="#222" stroke="none"/>
 <!-- toolbar -->
 <circle cx="0.5" cy="142.3" r="4" stroke="#333" stroke-width="1.2"/>
 <path d="M221.5 144.5h13M252 144.5h11.6M257.8 138.7v11.6" stroke="#444" stroke-width="1.1"/>
 <path d="M284 146.5a5 5 0 1 1 7 1.5" stroke="#444" stroke-width="1.1"/><path d="M289.5 146.5l2 2-2.6.9" stroke="#444"/><circle cx="287.8" cy="144.3" r=".9" fill="#444" stroke="none"/>
 <path d="M312.5 149.5l10.5-10.5M318.5 139h4.5v4.5M312.5 145v4.5h4.5" stroke="#444" stroke-width="1.1"/>
 <path d="M341.5 139.5h11v8.8h-11z" stroke="#222" stroke-width="1.1"/><path d="M343.3 141.6h2M343.3 141.6v2M350.7 141.6h-2M350.7 141.6v2M343.3 146.2h2M343.3 146.2v-2M350.7 146.2h-2M350.7 146.2v-2" stroke="#222" stroke-width="1.1"/>
 <path d="M430.7 140v10M430.7 140h2.5M430.7 149.6h2.5" stroke="#444" stroke-dasharray="1 1"/><path d="M436.5 140.2h3.3l2 2v7.4h-5.3z" stroke="#222"/><path d="M439.5 140.2v2.3h2.2" stroke="#222" stroke-width=".8"/>
 <path d="M495.5 136.5v14" stroke="#888"/>
 <path d="M509 149.5l3.3-9.5 3.3 9.5M510.2 146.2h4.2" stroke="#222" stroke-width="1"/><path d="M517.2 139.2q1.3 1.6 0 3.4M519.2 138.2q2.2 2.7 0 5.6" stroke="#222" stroke-width=".8"/>
 <g transform="translate(-108 30)"><path d="M710.3 108l2.3 1.3-6.4 9.6-1.5.6.1-1.7z" stroke="#1a1a1a" stroke-width="1"/><path d="M708 118.6c1-1 2-1.2 3 0s2 .9 3 0 2-.6 3 .3" stroke="#1a1a1a" stroke-width=".9"/></g>
 <path d="M670.5 141.5v-3h7v3M668.5 141.5h11v5h-11zM671 145.5h6v4h-6z" stroke="#333" stroke-width="1.1"/>
 <path d="M698.5 139.5h10.5v10h-10.5zM701 139.5v3.5h5.5v-3.5M701 149.5v-3.5h5.5v3.5" stroke="#aaa"/>
 <path d="M728.6 148.6v-8.1h8.3v3.6M728.6 148.6h3.2M729 145.2h7.5" stroke="#1a1a1a" stroke-width="1.1"/><path d="M729 141.2h7.5" stroke="#1a1a1a" stroke-width="1.4"/><path d="M733.6 149.8l5.6-5.6" stroke="#1a1a1a" stroke-width="1.8"/>
 <path d="M751.5 136.5v14.5" stroke="#888"/>
 <path d="M764.2 149.9l4.2-4.2M765.6 143.6l4.4 4.4M767.4 145.2l4.4-6.2 4.1 3.9-5.6 4.6" stroke="#1a1a1a" stroke-width="1.1" stroke-linejoin="round"/><circle cx="772.6" cy="147.4" r="2.3" fill="#efeeef" stroke="#1a1a1a" stroke-width="1.1"/><path d="M772.6 146.2v1.3h1" stroke="#1a1a1a" stroke-width=".7"/>
 <!-- notification and handle -->
</svg>
<div class="a" style="left:642px;top:160px;width:143px;height:27px;background:#3b3c40;box-shadow:0 1px 4px rgba(0,0,0,.25)"></div>
<svg class="a" style="left:0;top:0;pointer-events:none" width="1021" height="679"><g fill="#e2e2e2" transform="translate(651.20 177.31) scale(0.0927 0.0870)"><use href="#gmo" x="0"/><use href="#gmp" x="100"/><use href="#gli" x="200"/><use href="#gmq" x="300"/><use href="#gkl" x="400"/><use href="#gmr" x="450.2"/><use href="#gms" x="550.2"/></g></svg>
<svg class="a" style="left:722px;top:164px" width="36" height="20" viewBox="0 0 36 20"><path d="M3 12.5l7-8 5 4.5-6 9z" fill="#56575b"/><path d="M12 12l8.5-9 10 9.5-8 6.5z" fill="#5c5d61"/><path d="M20 13l4-5 6 4.5-5 5z" fill="#646569"/></svg>
<div class="a" style="left:765px;top:318px;width:20px;height:50px;background:#606060;border-radius:5px 0 0 5px"></div>
<svg class="a" style="left:765px;top:318px" width="20" height="50"><path d="M7 18.5l7 6.8-7 6.8" stroke="#c4c4c4" stroke-width="1.4" fill="none"/></svg>
<svg class="a" style="left:510px;top:498px" width="14" height="17"><path d="M3.2 3.3v11.2l2.5-2.3 1.7 2.8 1.4-.8-1.6-2.8 3.4-.4z" fill="#fff" stroke="#222" stroke-width=".9"/></svg>

<!-- pill -->
<div class="a" style="left:244px;top:75px;width:129px;height:14.5px;background:#6b6b6b;border-radius:0 0 3px 3px;box-shadow:0 1px 2px rgba(0,0,0,.3)"></div>
<svg class="a" style="left:244px;top:75px" width="129" height="15">
 <rect x="6" y="7" width="1.6" height="4" fill="#23d160"/><rect x="9" y="5" width="1.6" height="6" fill="#23d160"/><rect x="12" y="3" width="1.6" height="8" fill="#23d160"/>
 <circle cx="21.5" cy="7.5" r="3" fill="#23d160"/>
 <path d="M116 5.5h2l3-2.5v9l-3-2.5h-2z" fill="#23d160"/><path d="M122.5 5.5q1.2 2 0 4" stroke="#23d160" stroke-width=".8" fill="none"/>
</svg>
<svg class="a" style="left:0;top:0;pointer-events:none" width="1021" height="679"><g fill="#dcdcdc" transform="translate(272.80 86.33) scale(0.0948 0.1060)"><use href="#gmt" x="0"/><use href="#gmu" x="100"/><use href="#gmv" x="200"/><use href="#gmw" x="322.4"/><use href="#gmx" x="377.9"/><use href="#gmy" x="433.4"/><use href="#gmx" x="511.3"/><use href="#gmz" x="566.8"/><use href="#gna" x="622.3"/><use href="#gnb" x="700.2"/><use href="#gmy" x="755.7"/><use href="#gnc" x="811.2"/></g></svg>
<!-- taskbar -->
<svg class="a" style="left:0;top:581px" width="785" height="30">
 <path d="M-4 9h6l2 2h4v11h-12z" fill="#f6c344"/><rect x="-4" y="15" width="10" height="7" fill="#e8a820"/><rect x="0" y="19" width="4" height="3" fill="#3a8ee6"/>
 <rect x="0" y="28" width="14" height="2" fill="#76b9ed"/>
 <rect x="21" y="28" width="30" height="2" fill="#76b9ed"/>
 <rect x="58" y="28" width="30" height="2" fill="#76b9ed"/>
 <path d="M29 15.5h13c.3-4.5-2.8-8-6.6-8-4.5 0-7.4 3.6-7.4 7.8 0 4.6 3.4 7.7 8 7.7 2.2 0 4.2-.6 5.6-1.6v-3.3c-1.4 1-3.2 1.7-5.2 1.7-2.8 0-4.3-1.5-4.5-3.6zM32.5 12.8c.3-1.9 1.6-3 3.2-3s2.8 1.1 2.9 3z" fill="#1f88d8"/><path d="M28 12.5c1.5-3.5 5-5.5 9-5-3.5.8-6.5 2.5-8.2 6z" fill="#1f88d8"/>
 <defs><linearGradient id="mlg" x1="0" y1="1" x2="1" y2="0"><stop offset="0" stop-color="#0a62f0"/><stop offset="1" stop-color="#1a95f8"/></linearGradient></defs>
 <rect x="64" y="6" width="18" height="18" fill="url(#mlg)"/>
 <path d="M66.6 15.3l3.4-4.2 2.6 3.2-3.4 3.4z" fill="#dfe8f8" stroke="#dfe8f8" stroke-width=".8" stroke-linejoin="round"/><path d="M71 15.3l4.5-5.2 4.2 5.6-4.4 2.9z" fill="#fff" stroke="#fff" stroke-width=".8" stroke-linejoin="round"/>
 <path d="M543.5 17l3.5-3.5 3.5 3.5" stroke="#d8d8d8" stroke-width="1" fill="none"/>
 <rect x="559" y="9" width="12.5" height="12" rx="2" fill="#3b8ef0"/><circle cx="565.2" cy="15" r="4.4" fill="none" stroke="#fff" stroke-width="1.4"/><path d="M563.8 12.5v5M563.8 15l2.6-2.5M564.6 14.4l2 2.9" stroke="#fff" stroke-width="1.3"/>
 <rect x="580" y="10" width="9" height="7" fill="#e8e8e8"/><path d="M577 11.5h3M577 13.5h3" stroke="#e8e8e8" stroke-width="1"/><rect x="579" y="17" width="10" height="2" fill="#bfbfbf"/>
 <path d="M596.5 20.5a9 9 0 0 1 9-9M598.5 20.5a7 7 0 0 1 7-7M600.5 20.5a5 5 0 0 1 5-5M602.5 20.5a3 3 0 0 1 3-3" stroke="#d0d0d0" stroke-width=".9" fill="none" stroke-dasharray="1.2 .8"/>
 <path d="M618 11l-4.5 4 4.5 4" stroke="#d8d8d8" stroke-width="1" fill="none"/><path d="M619.5 13.5q1.5 1.5 0 3M621.5 12q2.5 3 0 6" stroke="#d8d8d8" stroke-width=".9" fill="none"/>
 <circle cx="636" cy="15" r="6" fill="#3a9af0"/><circle cx="636" cy="15" r="4.6" fill="none" stroke="#fff" stroke-width=".9"/><path d="M633 14h6M633 16.5h5" stroke="#fff" stroke-width="1.1"/>
 <rect x="669" y="9" width="12" height="12" rx="1" fill="#2f86e9"/><path d="M672 19c0-2 1-3 3-3s3 1 3 3zM675 11a2.3 2.3 0 1 1 0 4.6 2.3 2.3 0 1 1 0-4.6" fill="#fff"/>
 <path d="M754 9.5h12v9h-6l-3 2.5v-2.5h-3z" fill="#f2f2f2"/><path d="M756.5 12h7M756.5 14h7M756.5 16h4" stroke="#9aa" stroke-width=".7"/>
</svg>
<svg class="a" style="left:0;top:0;pointer-events:none" width="1021" height="679"><g fill="#ffffff" transform="translate(647.30 600.06) scale(0.1120)"><use href="#gk" x="0"/></g></svg>
<div class="t" style="left:700px;top:583px;width:32px;text-align:center;font-size:9.8px;line-height:12px;color:#e6e6e6">20:26</div>
<div class="t" style="left:692px;top:597px;width:48px;text-align:center;font-size:9.8px;line-height:12px;color:#e6e6e6">2020/5/22</div>
<div class="t" style="left:762px;top:596px;font-size:7px;line-height:8px;color:#223">3</div>
<!-- IME -->
<div class="a" style="left:223px;top:560px;width:160px;height:21px;background:#fff;border:1px solid #a8c8f0;border-bottom:none"></div>
<svg class="a" style="left:223px;top:560px" width="160" height="21">
 <circle cx="11" cy="10.5" r="7" fill="#2f7ad8"/><path d="M7.5 15c0-2 1.5-3 3.5-3s3.5 1 3.5 3zM11 6a2.6 2.6 0 1 1 0 5.2 2.6 2.6 0 1 1 0-5.2" fill="#fff"/>
 <path d="M25 7h7v5h-7zM28.5 4.5v11" stroke="#2f7ad8" stroke-width="1.6" fill="none"/>
 <circle cx="44" cy="8.5" r="1.5" fill="none" stroke="#2f7ad8" stroke-width="1"/><path d="M48.5 11.5q1.5 1.5-1 4" stroke="#2f7ad8" stroke-width="1.6" fill="none"/>
 <circle cx="62" cy="10.5" r="5.5" fill="none" stroke="#2f7ad8" stroke-width="1.2"/><path d="M59.5 11.5q2.5 3 5 0" stroke="#2f7ad8" stroke-width="1" fill="none"/><circle cx="60" cy="9" r=".8" fill="#2f7ad8"/><circle cx="64" cy="9" r=".8" fill="#2f7ad8"/>
 <circle cx="76.5" cy="13" r="2.3" fill="none" stroke="#2f7ad8" stroke-width="1.3"/><circle cx="82.5" cy="13" r="2.3" fill="none" stroke="#2f7ad8" stroke-width="1.3"/><path d="M77.5 11l5-6M81.5 11l-5-6" stroke="#2f7ad8" stroke-width="1.3"/>
 <circle cx="84.5" cy="4.5" r="2.2" fill="#f04a3a"/>
 <rect x="91" y="6.5" width="12" height="8" fill="#2f7ad8"/><path d="M93 9h8M93 11h8M94 13h6" stroke="#fff" stroke-width=".7" stroke-dasharray="1 .6"/>
 <circle cx="114" cy="8" r="2.4" fill="#b8d0f0"/><path d="M109.5 15c0-2.6 2-3.8 4.5-3.8s4.5 1.2 4.5 3.8z" fill="#b8d0f0"/>
 <path d="M125 6.5l3-1.5h4l3 1.5 2 3-2 1v5h-8v-5l-2-1z" fill="#2f7ad8"/>
 <path d="M148 4.5l1.2 1.8 2-.5.4 2.1 2 .9-1 1.7 1 1.7-2 .9-.4 2.1-2-.5-1.2 1.8-1.2-1.8-2 .5-.4-2.1-2-.9 1-1.7-1-1.7 2-.9.4-2.1 2 .5z" fill="#2f7ad8"/><circle cx="148" cy="10.5" r="2" fill="#fff"/>
</svg>

<!-- green corners -->
<div class="g a" style="left:725px;top:75px;width:60px;height:3px"></div>
<div class="g a" style="left:782px;top:75px;width:3px;height:60px"></div>
<div class="g a" style="left:782px;top:551px;width:3px;height:60px"></div>
<div class="g a" style="left:725px;top:608px;width:60px;height:3px"></div>

<div id="side" class="a">
  <div class="card c1" style="top:8px;border-color:#0cc95c;background:linear-gradient(#17181a,#1f2022)">
    <div class="av" style="background:linear-gradient(#083f94,#0b5fd2);"></div>
    <div class="lab" style="width:146px">
      <svg class="a" style="left:1px;top:2px" width="20" height="21" viewBox="0 0 20 21"><rect x="1" y="1" width="17.5" height="12.5" rx="1.5" fill="#e6e6e6"/><path d="M5.5 10.5c.8-3.5 3-5.2 6.5-5.2v-2l3.3 3.2-3.3 3.2v-2c-2.6 0-4.6.8-6.5 2.8z" fill="#1a1a1a"/><path d="M6 17.5h8l1 1.5h-10z" fill="#fff"/></svg>
      <svg class="a" style="left:25px;top:2px" width="20" height="22" viewBox="0 0 20 22"><rect x="6" y="1" width="8" height="12.8" rx="4" fill="#e6e6e6"/><path d="M6 8.2h8v1.6a4 4 0 0 1-8 0z" fill="#3ddc3d"/><path d="M2.3 9.2a7.7 7.7 0 0 0 15.4 0M10 17v3" stroke="#f2f2f2" stroke-width="1.8" fill="none"/></svg>
      
    </div>
  </div>
  <div class="card" style="top:145px">
    <div class="av"><svg width="63" height="63" viewBox="0 0 63 63"><defs><linearGradient id="sky" x1="0" y1="0" x2=".6" y2="1"><stop offset="0" stop-color="#4f93da"/><stop offset="1" stop-color="#92c2ec"/></linearGradient></defs><rect width="63" height="63" fill="url(#sky)"/>
<path d="M0 36c5-2 9 1 13 2l6 6-4 19H0z" fill="#dfe9f3"/>
<path d="M8 47l5-5 7 2 8 1 6-1 6 3 8-3 5 6-3 13H10z" fill="#4d7fc4"/>
<path d="M12 46l4-4 8 3-2 6z" fill="#6d9bd8"/><path d="M36 49l8-2 4 6-6 3z" fill="#7aa6de"/>
<path d="M26 54l4-7 4 16h-7z" fill="#1c1c22"/>
<path d="M35 28c4-3 10-2 13 2 3 5 4 13 3 20-3 3-8 3-11 1-3-5-6-14-5-23z" fill="#171417"/>
<path d="M33 35c-1 4 0 9 3 11l3-2-1-10z" fill="#b88c74"/>
<path d="M11 43l3-1 2-8 3 1-1 9-4 3z" fill="#c29278"/><path d="M17 34l2-5" stroke="#5a5030" stroke-width="1.2"/>
<circle cx="17" cy="25.5" r="6.5" fill="#d9a21e"/><circle cx="14" cy="23" r="2.6" fill="#f0c23a"/><circle cx="20" cy="22" r="2.4" fill="#eab52c"/><circle cx="19" cy="29" r="2.4" fill="#b8800e"/><circle cx="13" cy="28" r="2" fill="#e6ae28"/>
</svg></div>
    <div class="lab" style="width:74px"><svg class="a" style="left:6px;top:3px" width="18" height="20" viewBox="0 0 18 20"><rect x="5" y=".3" width="8" height="12.6" rx="4" fill="#f2f2f2"/><path d="M2.2 9a6.8 6.8 0 0 0 13.6 0M9 15.8v3" stroke="#f2f2f2" stroke-width="1.7" fill="none"/><path d="M1.8 16.8L16.5 1.8" stroke="#0d0e0e" stroke-width="3.6"/><path d="M1.8 16.5L16.5 1.5" stroke="#e8473b" stroke-width="1.9"/></svg></div>
  </div>
  <div class="card" style="top:281px">
    <div class="av"><svg width="63" height="63" viewBox="0 0 63 63"><rect width="63" height="63" fill="#c7c3bf"/><rect x="36" y="0" width="27" height="40" fill="#cdcac6"/>
<path d="M4 30c0-14 7-23 17-24 8-1 14 3 15 8-6-3-13-3-18 1-6 5-7 14-6 22 1 4 0 7-2 9-4-3-6-9-6-16z" fill="#3b3030"/>
<path d="M12 22c2-8 9-12 16-10 6 2 9 8 9 15 0 8-4 13-10 14-7 1-12-3-14-9-1-3-1-6-1-10z" fill="#e7d5cb"/>
<path d="M18 24l5-1.5M27 22.5l4 .5" stroke="#4a3a38" stroke-width="1.1"/><path d="M27 33.5c2 .6 3.5.4 5-.8" stroke="#b8464a" stroke-width="1.6"/>
<path d="M36 34c5-2 11-1 15 2 3 3 2 8-1 10-4 2-9 0-12-3z" fill="#e0cbc1"/>
<path d="M20 38l16 2-2 8H22z" fill="#d9c2b8"/>
<path d="M0 44c5-4 12-6 19-4 5 5 12 6 18 3 3-2 6-4 10-3 6 0 11 0 16 2v21H0z" fill="#e3692d"/>
<path d="M20 41c4 4 10 5 16 2" stroke="#8e4a2e" stroke-width="1"/>
</svg></div>
    <div class="lab" style="width:86px;left:3px">
      <div class="a" style="left:0;top:0;width:25px;height:25px;background:#fb7f15"></div>
      <svg class="a" style="left:0;top:0" width="25" height="25"><circle cx="12.5" cy="7.8" r="3.9" fill="#fff"/><path d="M4 21.5c.5-5 3.5-8 8.5-8s8 3 8.5 8z" fill="#fff"/><path d="M10 13.5l2.5 3 2.5-3z" fill="#fb7f15"/></svg>
      <svg class="a" style="left:32px;top:3px" width="18" height="20" viewBox="0 0 18 20"><rect x="5" y=".3" width="8" height="12.6" rx="4" fill="#f2f2f2"/><path d="M2.2 9a6.8 6.8 0 0 0 13.6 0M9 15.8v3" stroke="#f2f2f2" stroke-width="1.7" fill="none"/><path d="M1.8 16.8L16.5 1.8" stroke="#0d0e0e" stroke-width="3.6"/><path d="M1.8 16.5L16.5 1.5" stroke="#e8473b" stroke-width="1.9"/></svg></div>
  </div>
  <div class="card" style="top:417px">
    <div class="av"><svg width="63" height="63" viewBox="0 0 63 63"><rect width="63" height="63" fill="#d6d6d6"/><rect y="40" width="63" height="23" fill="#e2e2e2"/>
<path d="M14 0l-8 26M26 0l-5 22M38 0l-1 20M50 2l3 20M60 8l-6 14M32 63l2-14M42 63l-2-12" stroke="#9e9e9e" stroke-width=".7"/>
<path d="M7 44c3-9 12-15 22-18 6-2 12-2 15 1 2 4 0 10-2 14-5 3-9 7-12 12-5 2-11 2-17 0-3-2-6-5-6-9z" fill="#978ba3"/>
<path d="M16 34c4-3 10-6 15-6" stroke="#b0a2c0" stroke-width="2"/><path d="M20 44l8-6 4 4-6 6z" fill="#7a6888"/>
<path d="M40 30c4-6 12-7 17-4 5 4 6 11 4 17-3 4-9 5-14 3-5-3-8-9-7-16z" fill="#6a4e4e"/>
<path d="M42 36c0 5 3 9 8 10-3-4-5-8-5-12z" fill="#b89c98"/>
<path d="M4 46c4-1 10 1 14 4l-2 5c-4 0-9-2-12-4z" fill="#c0a4a4"/>
<path d="M30 50l1 10M34 49l-1 11" stroke="#8a8a90" stroke-width=".8"/>
</svg></div>
    <div class="lab" style="width:126px"><svg class="a" style="left:6px;top:3px" width="18" height="20" viewBox="0 0 18 20"><rect x="5" y=".3" width="8" height="12.6" rx="4" fill="#f2f2f2"/><path d="M2.2 9a6.8 6.8 0 0 0 13.6 0M9 15.8v3" stroke="#f2f2f2" stroke-width="1.7" fill="none"/><path d="M1.8 16.8L16.5 1.8" stroke="#0d0e0e" stroke-width="3.6"/><path d="M1.8 16.5L16.5 1.5" stroke="#e8473b" stroke-width="1.9"/></svg></div>
    <svg class="a" style="left:194px;top:100px" width="20" height="17"><rect x="1" y="8" width="4" height="8" fill="#f08a1c"/><rect x="7" y="5" width="4" height="11" fill="#f08a1c"/><rect x="13" y="1.5" width="4" height="14.5" rx="1" fill="#d8d8d8"/></svg>
  </div>
  <div class="card" style="top:553px;background:linear-gradient(#1c1d1f,#141517)">
    <div class="av"><svg width="63" height="63" viewBox="0 0 63 63"><rect width="63" height="63" fill="#8c6d75"/>
<rect x="0" y="24" width="20" height="19" fill="#8486a6"/><rect x="0" y="43" width="20" height="20" fill="#b48e48"/><rect x="55" y="18" width="8" height="24" fill="#556444"/><rect x="54" y="42" width="9" height="21" fill="#c0a450"/>
<path d="M6 30l4-4 3 4-2 6z" fill="#c8c8d0"/>
<path d="M30 8c1-3 4-3 5 0 4-1 8-1 10 1 1-2 4-2 4 1 5 5 8 15 9 26v27H16V48c1-5 4-9 5-13-3-1-5-4-5-7 0-3 3-5 6-6 2-6 4-11 8-14z" fill="#e8e6df"/>
<ellipse cx="24" cy="22.5" rx="2.6" ry="1.8" fill="#111"/><circle cx="33" cy="19.5" r=".8" fill="#333"/><path d="M28 28h4" stroke="#777" stroke-width=".6"/>
<path d="M15 47h20l19-15 3 4-2 27H15z" fill="#a9b0ac"/><path d="M36 46l18-14" stroke="#8a918d" stroke-width="1.2"/>
<rect x="40" y="58" width="9" height="5" fill="#3b88cc"/>
</svg></div>
    <div class="lab" style="width:60px;color:#b0b0b0"><svg class="a" style="left:6px;top:3px" width="18" height="20" viewBox="0 0 18 20"><rect x="5" y=".3" width="8" height="12.6" rx="4" fill="#9a9a9a"/><path d="M2.2 9a6.8 6.8 0 0 0 13.6 0M9 15.8v3" stroke="#9a9a9a" stroke-width="1.7" fill="none"/><path d="M1.8 16.8L16.5 1.8" stroke="#0d0e0e" stroke-width="3.6"/><path d="M1.8 16.5L16.5 1.5" stroke="#b03a30" stroke-width="1.9"/></svg></div>
  </div>
<svg class="a" style="left:-785px;top:0;pointer-events:none" width="1021" height="679"><g fill="#c9c9c9" transform="translate(882.50 70.75) scale(0.2225 0.2250)"><use href="#gmr" x="0"/><use href="#gms" x="100"/></g><g fill="#ffffff" transform="translate(847.50 123.59) scale(0.1340)"><use href="#gmr" x="0"/><use href="#gms" x="100"/><use href="#gnd" x="200"/><use href="#gne" x="300"/><use href="#gnf" x="400"/><use href="#glm" x="500"/><use href="#gng" x="600"/></g><g fill="#ffffff" transform="translate(827.80 259.59) scale(0.1340)"><use href="#gnh" x="0"/><use href="#gni" x="100"/><use href="#gnj" x="200"/></g><g fill="#ffffff" transform="translate(854.30 395.59) scale(0.1340)"><use href="#gnk" x="0"/><use href="#gnl" x="100"/></g><g fill="#ffffff" transform="translate(828.20 531.59) scale(0.1340)"><use href="#glt" x="0"/><use href="#gna" x="55.5"/><use href="#gll" x="111"/><use href="#gnm" x="211"/><use href="#glt" x="311"/><use href="#gnn" x="388.9"/><use href="#gno" x="488.9"/><use href="#gnp" x="588.9"/></g><g fill="#a8a8a8" transform="translate(828.00 667.59) scale(0.1340)"><use href="#gnq" x="0"/><use href="#gnr" x="100"/></g></svg>
</div>
</body></html>
